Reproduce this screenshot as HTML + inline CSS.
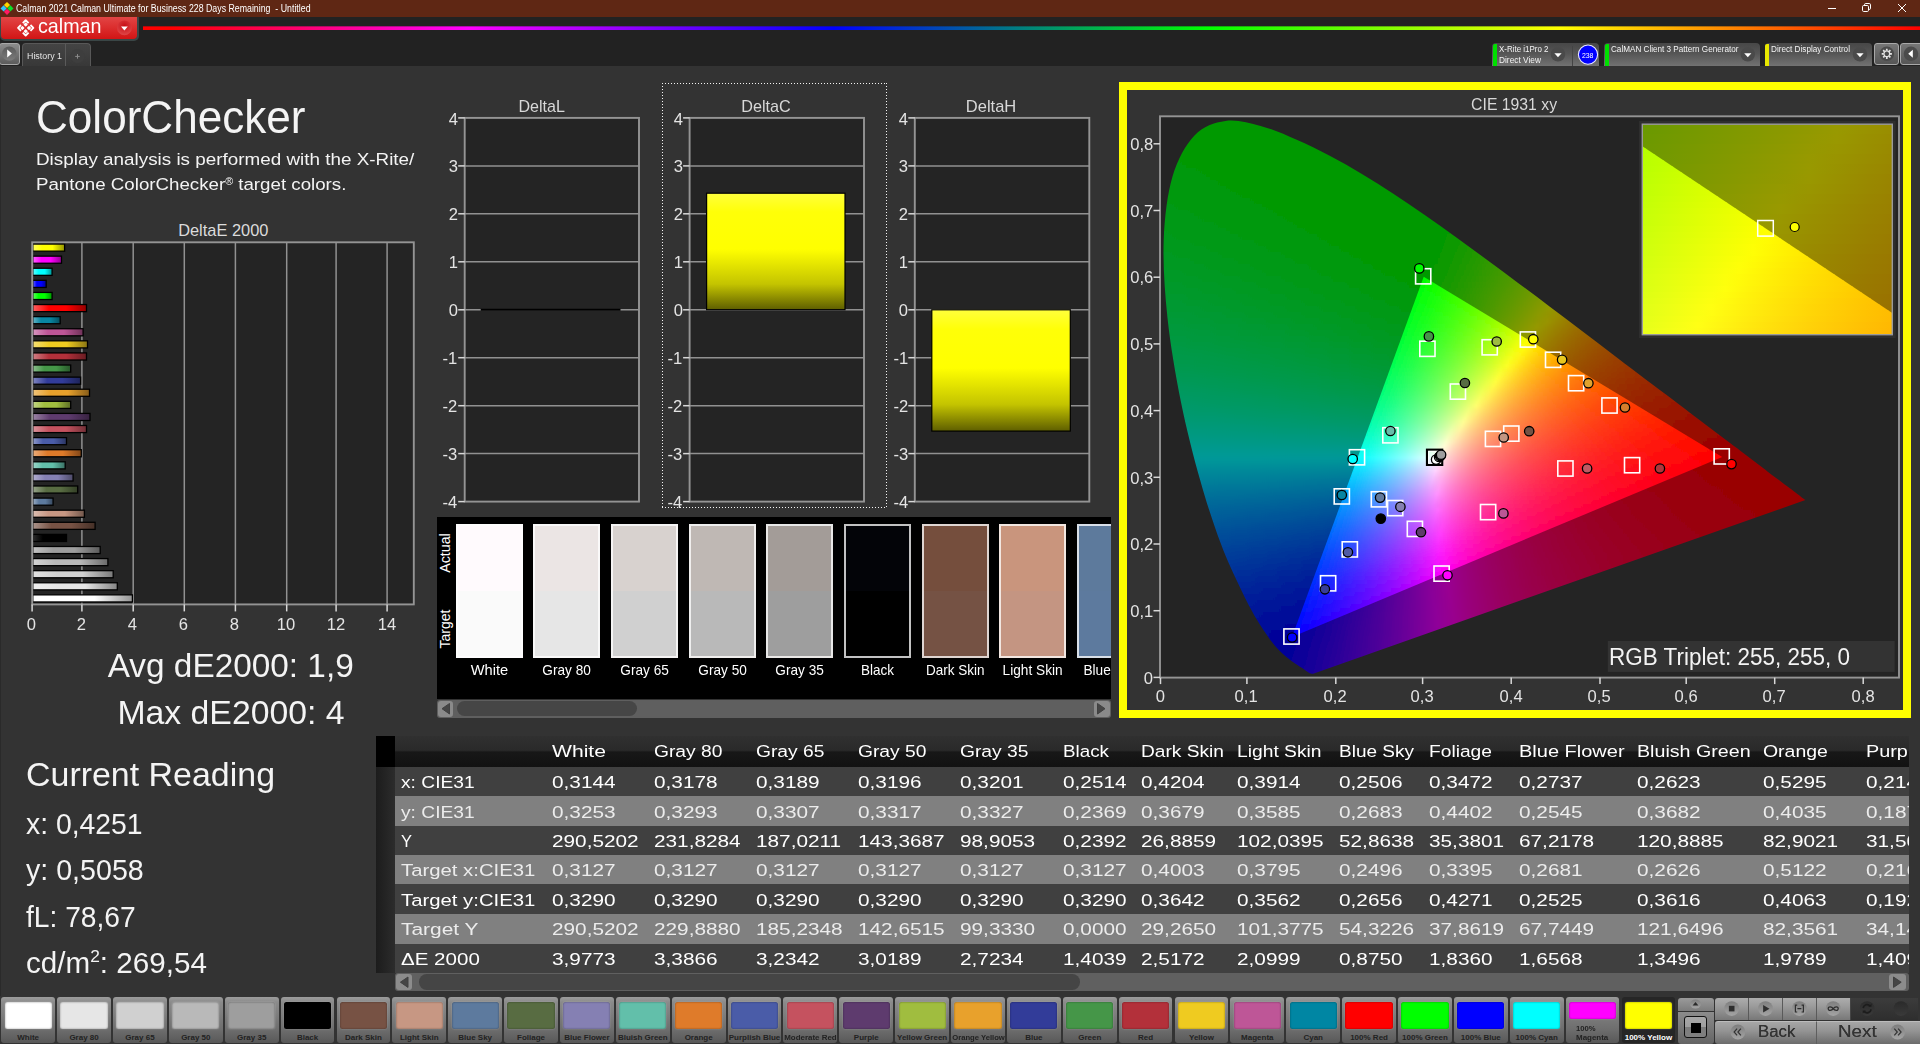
<!DOCTYPE html>
<html lang="en"><head><meta charset="utf-8"><title>Calman 2021 - ColorChecker</title>
<style>
html,body{margin:0;padding:0;background:#333;}
body{width:1920px;height:1044px;overflow:hidden;font-family:"Liberation Sans",sans-serif;}
#root{position:relative;width:1920px;height:1044px;overflow:hidden;background:#333333;}
.t{position:absolute;white-space:nowrap;line-height:1;display:block;}
svg{position:absolute;left:0;top:0;overflow:visible;}
svg text{font-family:"Liberation Sans",sans-serif;}
</style></head><body><div id="root">
<div style="position:absolute;left:0.00px;top:0.00px;width:1920.00px;height:17.00px;background:#5f2714;"></div>
<svg width="20" height="17" viewBox="0 0 20 17"><g transform="translate(7.0,8.4) rotate(45)"><rect x="-4.6" y="-4.6" width="4.4" height="4.4" fill="#ffd400"/><rect x="0.2" y="-4.6" width="4.4" height="4.4" fill="#0ce02a"/><rect x="-4.6" y="0.2" width="4.4" height="4.4" fill="#30c4ff"/><rect x="0.2" y="0.2" width="4.4" height="4.4" fill="#ff1a62"/></g></svg>
<span class="t" style="left:15.60px;top:4.00px;font-size:10px;color:#ffffff;transform:scaleX(0.8788);transform-origin:0 0;white-space:pre;">Calman 2021 Calman Ultimate for Business 228 Days Remaining  - Untitled</span>
<svg width="1920" height="17" viewBox="0 0 1920 17" fill="none" stroke="#fff" stroke-width="1"><path d="M1828 8.5H1836"/><rect x="1862.5" y="5.5" width="6" height="6" rx="1.2"/><path d="M1864.5 5.5V4.8Q1864.5 3.5 1865.8 3.5H1869.2Q1870.5 3.5 1870.5 4.8V8.2Q1870.5 9.5 1869.2 9.5H1868.5"/><path d="M1898 4L1906 12M1906 4L1898 12"/></svg>
<div style="position:absolute;left:0.00px;top:17.00px;width:1920.00px;height:49.00px;background:#222222;"></div>
<div style="position:absolute;left:143.00px;top:26.00px;width:1777.00px;height:4.00px;background:linear-gradient(90deg,#ff0000 0%,#ff0000 1.5%,#ff00ff 18.3%,#0000ff 38.9%,#00ff00 59.9%,#ffff00 79.7%,#ff0000 100%);"></div>
<div style="position:absolute;left:143.00px;top:25.50px;width:1777.00px;height:5.00px;background:linear-gradient(180deg,rgba(34,34,34,.65),rgba(34,34,34,0) 22%,rgba(34,34,34,0) 78%,rgba(34,34,34,.65));"></div>
<div style="position:absolute;left:0.00px;top:17.00px;width:138.50px;height:23.50px;background:#3a4646;border-radius:0 0 5px 5px;"></div>
<div style="position:absolute;left:1.00px;top:17.00px;width:136.00px;height:22.00px;background:linear-gradient(180deg,#e24545 0%,#dc2f2f 45%,#d11515 100%);border-radius:0 0 4px 4px;"></div>
<svg width="140" height="44" viewBox="0 0 140 44"><g transform="translate(25.7,27.9) rotate(45)" fill="none" stroke="#fff" stroke-width="1.9" stroke-linejoin="round"><path d="M-5.4 -1.3V-5.4H-1.3M1.3 -5.4H5.4V-1.3M5.4 1.3V5.4H1.3M-1.3 5.4H-5.4V1.3"/></g><g transform="translate(25.7,27.9) rotate(45)" fill="#fff"><rect x="-3.95" y="-3.95" width="3.2" height="3.2" rx=".7"/><rect x=".75" y="-3.95" width="3.2" height="3.2" rx=".7"/><rect x="-3.95" y=".75" width="3.2" height="3.2" rx=".7"/><rect x=".75" y=".75" width="3.2" height="3.2" rx=".7"/></g><defs><radialGradient id="cd" cx=".5" cy=".35" r=".7"><stop offset="0" stop-color="#c80f16"/><stop offset="1" stop-color="#e04a4a"/></radialGradient></defs><circle cx="124.4" cy="27.8" r="7.4" fill="url(#cd)"/><path d="M121 26.6H127.8L124.4 30.4Z" fill="#fff"/></svg>
<span class="t" style="left:37.80px;top:16.00px;font-size:20.2px;color:#ffffff;transform:scaleX(0.9752);transform-origin:0 0;">calman</span>
<div style="position:absolute;left:-1.00px;top:43.00px;width:21.00px;height:21.50px;background:linear-gradient(180deg,#8c8c8c,#5c5c5c);border:1px solid #a8a8a8;border-radius:3px;box-sizing:border-box;"></div>
<svg width="30" height="70" viewBox="0 0 30 70"><defs><linearGradient id="pb" x1="0" y1="0" x2="0" y2="1"><stop offset="0" stop-color="#5a5a5a"/><stop offset="1" stop-color="#7c7c7c"/></linearGradient></defs><circle cx="9.3" cy="53.6" r="7.2" fill="url(#pb)"/><path d="M7.2 49.6V57.6L11.9 53.6Z" fill="#fff"/></svg>
<div style="position:absolute;left:22.00px;top:43.00px;width:69.00px;height:23.00px;background:linear-gradient(180deg,#444 0%,#383838 100%);border:1px solid #585858;border-bottom:none;border-radius:4px 4px 0 0;box-sizing:border-box;"></div>
<div style="position:absolute;left:65.00px;top:44.00px;width:1.40px;height:22.00px;background:#5a5a5a;"></div>
<span class="t" style="left:26.50px;top:51.00px;font-size:9.7px;color:#e4e4e4;transform:scaleX(0.9146);transform-origin:0 0;">History 1</span>
<svg width="100" height="70" viewBox="0 0 100 70"><circle cx="77.6" cy="56" r="7" fill="#3e3e3e"/><path d="M75.2 56.4H79.8M77.5 54.1V58.7" stroke="#8a8a8a" stroke-width="1" fill="none"/></svg>
<div style="position:absolute;left:1492.00px;top:43.30px;width:107.30px;height:22.70px;background:linear-gradient(180deg,#474747 0%,#555 45%,#727272 100%);border-radius:4px 4px 0 0;"></div>
<div style="position:absolute;left:1492.50px;top:44.20px;width:4.20px;height:21.80px;background:#00e000;border-radius:2px 0 0 0;"></div>
<span class="t" style="left:1498.90px;top:45.00px;font-size:8.3px;color:#f4f4f4;transform:scaleX(0.9581);transform-origin:0 0;">X-Rite i1Pro 2</span>
<span class="t" style="left:1498.90px;top:56.00px;font-size:8.3px;color:#f4f4f4;transform:scaleX(1.0043);transform-origin:0 0;">Direct View</span>
<svg width="1920" height="70" viewBox="0 0 1920 70"><circle cx="1558" cy="54.4" r="7.2" fill="#4a4a4a"/><path d="M1554.4 53.2H1561.6L1558 57.2Z" fill="#fff"/></svg>
<div style="position:absolute;left:1572.00px;top:45.50px;width:1.00px;height:20.50px;background:#444;"></div>
<svg width="1920" height="70" viewBox="0 0 1920 70"><circle cx="1588" cy="54.6" r="9.6" fill="#0000ff" stroke="#e8e8ff" stroke-width="1.1"/></svg>
<span class="t" style="left:1581.33px;top:52.00px;font-size:8px;color:#ffffff;transform:scaleX(0.8617);transform-origin:50% 0;">238</span>
<div style="position:absolute;left:1604.00px;top:43.30px;width:156.00px;height:22.70px;background:linear-gradient(180deg,#474747 0%,#555 45%,#727272 100%);border-radius:4px 4px 0 0;"></div>
<div style="position:absolute;left:1604.50px;top:44.20px;width:4.20px;height:21.80px;background:#00e000;border-radius:2px 0 0 0;"></div>
<span class="t" style="left:1610.60px;top:45.00px;font-size:8.3px;color:#f4f4f4;transform:scaleX(0.9802);transform-origin:0 0;">CalMAN Client 3 Pattern Generator</span>
<svg width="1920" height="70" viewBox="0 0 1920 70"><circle cx="1747.8" cy="54.4" r="7.2" fill="#4a4a4a"/><path d="M1744.2 53.2H1751.3999999999999L1747.8 57.2Z" fill="#fff"/></svg>
<div style="position:absolute;left:1764.60px;top:43.30px;width:107.60px;height:22.70px;background:linear-gradient(180deg,#474747 0%,#555 45%,#727272 100%);border-radius:4px 4px 0 0;"></div>
<div style="position:absolute;left:1765.10px;top:44.20px;width:4.20px;height:21.80px;background:#e8e800;border-radius:2px 0 0 0;"></div>
<span class="t" style="left:1771.40px;top:45.00px;font-size:8.3px;color:#f4f4f4;transform:scaleX(0.9844);transform-origin:0 0;">Direct Display Control</span>
<svg width="1920" height="70" viewBox="0 0 1920 70"><circle cx="1860" cy="54.4" r="7.2" fill="#4a4a4a"/><path d="M1856.4 53.2H1863.6L1860 57.2Z" fill="#fff"/></svg>
<div style="position:absolute;left:1874.20px;top:43.00px;width:25.00px;height:21.50px;background:linear-gradient(180deg,#767676,#565656);border:1px solid #a8a8a8;border-radius:3px;box-sizing:border-box;"></div>
<div style="position:absolute;left:1900.20px;top:43.00px;width:25.00px;height:21.50px;background:linear-gradient(180deg,#767676,#565656);border:1px solid #a8a8a8;border-radius:3px;box-sizing:border-box;"></div>
<svg width="1920" height="70" viewBox="0 0 1920 70"><circle cx="1886.8" cy="53.8" r="7.3" fill="#4b4b4b"/><circle cx="1911" cy="53.8" r="7.3" fill="#4b4b4b"/><g transform="translate(1886.8,53.8)" fill="none" stroke="#e6e6e6"><circle r="2.9" stroke-width="1.3"/><g stroke-width="1.7"><path d="M0 -3.2V-5.1M0 3.2V5.1M-3.2 0H-5.1M3.2 0H5.1M2.26 2.26L3.6 3.6M-2.26 2.26L-3.6 3.6M2.26 -2.26L3.6 -3.6M-2.26 -2.26L-3.6 -3.6"/></g></g><path d="M1912.8 49.8V57.8L1908.2 53.8Z" fill="#fff"/></svg>
<div style="position:absolute;left:0.00px;top:66.00px;width:1.00px;height:930.00px;background:#2a2a2a;"></div>
<span class="t" style="left:36.00px;top:95.00px;font-size:45.5px;color:#f4f4f4;transform:scaleX(0.9689);transform-origin:0 0;">ColorChecker</span>
<span class="t" style="left:35.70px;top:151.00px;font-size:17.4px;color:#f4f4f4;transform:scaleX(1.0843);transform-origin:0 0;">Display analysis is performed with the X-Rite/</span>
<span class="t" style="left:35.7px;top:176.00px;font-size:17.4px;color:#f4f4f4;transform:scaleX(1.0751);transform-origin:0 0;">Pantone ColorChecker<span style="font-size:10px;position:relative;top:-5.5px;">&reg;</span> target colors.</span>
<span class="t" style="left:178.17px;top:222.00px;font-size:16.4px;color:#dcdcdc;">DeltaE 2000</span>
<svg width="450" height="640" viewBox="0 0 450 640"><rect x="32.2" y="242.3" width="381.6" height="362.1" fill="#242424"/><path d="M81.9 242.3V604.4" stroke="#919191" stroke-width="1.5"/><path d="M133.2 242.3V604.4" stroke="#919191" stroke-width="1.5"/><path d="M184.3 242.3V604.4" stroke="#919191" stroke-width="1.5"/><path d="M235.4 242.3V604.4" stroke="#919191" stroke-width="1.5"/><path d="M286.7 242.3V604.4" stroke="#919191" stroke-width="1.5"/><path d="M336.1 242.3V604.4" stroke="#919191" stroke-width="1.5"/><path d="M387.1 242.3V604.4" stroke="#919191" stroke-width="1.5"/><defs><linearGradient id="b0" x1="0" y1="0" x2="1" y2="0"><stop offset="0" stop-color="#ffff61"/><stop offset=".3" stop-color="#ffff00"/><stop offset=".62" stop-color="#ffff00"/><stop offset="1" stop-color="#949400"/></linearGradient><linearGradient id="b1" x1="0" y1="0" x2="1" y2="0"><stop offset="0" stop-color="#ff61ff"/><stop offset=".3" stop-color="#ff00ff"/><stop offset=".62" stop-color="#ff00ff"/><stop offset="1" stop-color="#940094"/></linearGradient><linearGradient id="b2" x1="0" y1="0" x2="1" y2="0"><stop offset="0" stop-color="#61ffff"/><stop offset=".3" stop-color="#00ffff"/><stop offset=".62" stop-color="#00ffff"/><stop offset="1" stop-color="#009494"/></linearGradient><linearGradient id="b3" x1="0" y1="0" x2="1" y2="0"><stop offset="0" stop-color="#6161ff"/><stop offset=".3" stop-color="#0000ff"/><stop offset=".62" stop-color="#0000ff"/><stop offset="1" stop-color="#000094"/></linearGradient><linearGradient id="b4" x1="0" y1="0" x2="1" y2="0"><stop offset="0" stop-color="#61ff61"/><stop offset=".3" stop-color="#00ff00"/><stop offset=".62" stop-color="#00ff00"/><stop offset="1" stop-color="#009400"/></linearGradient><linearGradient id="b5" x1="0" y1="0" x2="1" y2="0"><stop offset="0" stop-color="#ff6161"/><stop offset=".3" stop-color="#ff0000"/><stop offset=".62" stop-color="#ff0000"/><stop offset="1" stop-color="#940000"/></linearGradient><linearGradient id="b6" x1="0" y1="0" x2="1" y2="0"><stop offset="0" stop-color="#66b4c5"/><stop offset=".3" stop-color="#0886a2"/><stop offset=".62" stop-color="#0886a2"/><stop offset="1" stop-color="#054e5e"/></linearGradient><linearGradient id="b7" x1="0" y1="0" x2="1" y2="0"><stop offset="0" stop-color="#d796bf"/><stop offset=".3" stop-color="#be5697"/><stop offset=".62" stop-color="#be5697"/><stop offset="1" stop-color="#6e3258"/></linearGradient><linearGradient id="b8" x1="0" y1="0" x2="1" y2="0"><stop offset="0" stop-color="#f5df75"/><stop offset=".3" stop-color="#efcb20"/><stop offset=".62" stop-color="#efcb20"/><stop offset="1" stop-color="#8b7613"/></linearGradient><linearGradient id="b9" x1="0" y1="0" x2="1" y2="0"><stop offset="0" stop-color="#d07f85"/><stop offset=".3" stop-color="#b3303a"/><stop offset=".62" stop-color="#b3303a"/><stop offset="1" stop-color="#681c22"/></linearGradient><linearGradient id="b10" x1="0" y1="0" x2="1" y2="0"><stop offset="0" stop-color="#8cbe8e"/><stop offset=".3" stop-color="#459648"/><stop offset=".62" stop-color="#459648"/><stop offset="1" stop-color="#28572a"/></linearGradient><linearGradient id="b11" x1="0" y1="0" x2="1" y2="0"><stop offset="0" stop-color="#8086c0"/><stop offset=".3" stop-color="#323c99"/><stop offset=".62" stop-color="#323c99"/><stop offset="1" stop-color="#1d2359"/></linearGradient><linearGradient id="b12" x1="0" y1="0" x2="1" y2="0"><stop offset="0" stop-color="#f1c57c"/><stop offset=".3" stop-color="#e8a12c"/><stop offset=".62" stop-color="#e8a12c"/><stop offset="1" stop-color="#875d1a"/></linearGradient><linearGradient id="b13" x1="0" y1="0" x2="1" y2="0"><stop offset="0" stop-color="#c4d688"/><stop offset=".3" stop-color="#a0bd3f"/><stop offset=".62" stop-color="#a0bd3f"/><stop offset="1" stop-color="#5d6e25"/></linearGradient><linearGradient id="b14" x1="0" y1="0" x2="1" y2="0"><stop offset="0" stop-color="#9b85a5"/><stop offset=".3" stop-color="#5e3b6e"/><stop offset=".62" stop-color="#5e3b6e"/><stop offset="1" stop-color="#372240"/></linearGradient><linearGradient id="b15" x1="0" y1="0" x2="1" y2="0"><stop offset="0" stop-color="#db949c"/><stop offset=".3" stop-color="#c5525f"/><stop offset=".62" stop-color="#c5525f"/><stop offset="1" stop-color="#723037"/></linearGradient><linearGradient id="b16" x1="0" y1="0" x2="1" y2="0"><stop offset="0" stop-color="#8f9ac9"/><stop offset=".3" stop-color="#4a5ca8"/><stop offset=".62" stop-color="#4a5ca8"/><stop offset="1" stop-color="#2b3561"/></linearGradient><linearGradient id="b17" x1="0" y1="0" x2="1" y2="0"><stop offset="0" stop-color="#ebad7b"/><stop offset=".3" stop-color="#df7b2a"/><stop offset=".62" stop-color="#df7b2a"/><stop offset="1" stop-color="#814718"/></linearGradient><linearGradient id="b18" x1="0" y1="0" x2="1" y2="0"><stop offset="0" stop-color="#9ed7ca"/><stop offset=".3" stop-color="#62bfaa"/><stop offset=".62" stop-color="#62bfaa"/><stop offset="1" stop-color="#396f63"/></linearGradient><linearGradient id="b19" x1="0" y1="0" x2="1" y2="0"><stop offset="0" stop-color="#b3b0d0"/><stop offset=".3" stop-color="#8580b3"/><stop offset=".62" stop-color="#8580b3"/><stop offset="1" stop-color="#4d4a68"/></linearGradient><linearGradient id="b20" x1="0" y1="0" x2="1" y2="0"><stop offset="0" stop-color="#97a48a"/><stop offset=".3" stop-color="#586c42"/><stop offset=".62" stop-color="#586c42"/><stop offset="1" stop-color="#333f26"/></linearGradient><linearGradient id="b21" x1="0" y1="0" x2="1" y2="0"><stop offset="0" stop-color="#9badc3"/><stop offset=".3" stop-color="#5d7a9e"/><stop offset=".62" stop-color="#5d7a9e"/><stop offset="1" stop-color="#36475c"/></linearGradient><linearGradient id="b22" x1="0" y1="0" x2="1" y2="0"><stop offset="0" stop-color="#dcbfb2"/><stop offset=".3" stop-color="#c79783"/><stop offset=".62" stop-color="#c79783"/><stop offset="1" stop-color="#73584c"/></linearGradient><linearGradient id="b23" x1="0" y1="0" x2="1" y2="0"><stop offset="0" stop-color="#ab948b"/><stop offset=".3" stop-color="#775244"/><stop offset=".62" stop-color="#775244"/><stop offset="1" stop-color="#453027"/></linearGradient><linearGradient id="b24" x1="0" y1="0" x2="1" y2="0"><stop offset="0" stop-color="#2d2d2d"/><stop offset=".3" stop-color="#000000"/><stop offset=".62" stop-color="#000000"/><stop offset="1" stop-color="#000000"/></linearGradient><linearGradient id="b25" x1="0" y1="0" x2="1" y2="0"><stop offset="0" stop-color="#c3c3c3"/><stop offset=".3" stop-color="#9e9e9e"/><stop offset=".62" stop-color="#9e9e9e"/><stop offset="1" stop-color="#5c5c5c"/></linearGradient><linearGradient id="b26" x1="0" y1="0" x2="1" y2="0"><stop offset="0" stop-color="#d4d4d4"/><stop offset=".3" stop-color="#b9b9b9"/><stop offset=".62" stop-color="#b9b9b9"/><stop offset="1" stop-color="#6b6b6b"/></linearGradient><linearGradient id="b27" x1="0" y1="0" x2="1" y2="0"><stop offset="0" stop-color="#e2e2e2"/><stop offset=".3" stop-color="#d0d0d0"/><stop offset=".62" stop-color="#d0d0d0"/><stop offset="1" stop-color="#797979"/></linearGradient><linearGradient id="b28" x1="0" y1="0" x2="1" y2="0"><stop offset="0" stop-color="#f0f0f0"/><stop offset=".3" stop-color="#e6e6e6"/><stop offset=".62" stop-color="#e6e6e6"/><stop offset="1" stop-color="#858585"/></linearGradient><linearGradient id="b29" x1="0" y1="0" x2="1" y2="0"><stop offset="0" stop-color="#ffffff"/><stop offset=".3" stop-color="#ffffff"/><stop offset=".62" stop-color="#ffffff"/><stop offset="1" stop-color="#949494"/></linearGradient></defs><rect x="32.8" y="244.05" width="31.8" height="7.1" fill="url(#b0)" stroke="#000" stroke-width="1.3"/><rect x="32.8" y="256.15" width="28.7" height="7.1" fill="url(#b1)" stroke="#000" stroke-width="1.3"/><rect x="32.8" y="268.24" width="19.3" height="7.1" fill="url(#b2)" stroke="#000" stroke-width="1.3"/><rect x="32.8" y="280.34" width="13.4" height="7.1" fill="url(#b3)" stroke="#000" stroke-width="1.3"/><rect x="32.8" y="292.44" width="19.3" height="7.1" fill="url(#b4)" stroke="#000" stroke-width="1.3"/><rect x="32.8" y="304.54" width="53.7" height="7.1" fill="url(#b5)" stroke="#000" stroke-width="1.3"/><rect x="32.8" y="316.63" width="27.4" height="7.1" fill="url(#b6)" stroke="#000" stroke-width="1.3"/><rect x="32.8" y="328.73" width="50.3" height="7.1" fill="url(#b7)" stroke="#000" stroke-width="1.3"/><rect x="32.8" y="340.83" width="54.7" height="7.1" fill="url(#b8)" stroke="#000" stroke-width="1.3"/><rect x="32.8" y="352.92" width="53.7" height="7.1" fill="url(#b9)" stroke="#000" stroke-width="1.3"/><rect x="32.8" y="365.02" width="37.9" height="7.1" fill="url(#b10)" stroke="#000" stroke-width="1.3"/><rect x="32.8" y="377.12" width="47.8" height="7.1" fill="url(#b11)" stroke="#000" stroke-width="1.3"/><rect x="32.8" y="389.21" width="56.7" height="7.1" fill="url(#b12)" stroke="#000" stroke-width="1.3"/><rect x="32.8" y="401.31" width="37.9" height="7.1" fill="url(#b13)" stroke="#000" stroke-width="1.3"/><rect x="32.8" y="413.41" width="57.2" height="7.1" fill="url(#b14)" stroke="#000" stroke-width="1.3"/><rect x="32.8" y="425.50" width="53.7" height="7.1" fill="url(#b15)" stroke="#000" stroke-width="1.3"/><rect x="32.8" y="437.60" width="33.7" height="7.1" fill="url(#b16)" stroke="#000" stroke-width="1.3"/><rect x="32.8" y="449.70" width="48.5" height="7.1" fill="url(#b17)" stroke="#000" stroke-width="1.3"/><rect x="32.8" y="461.80" width="32.4" height="7.1" fill="url(#b18)" stroke="#000" stroke-width="1.3"/><rect x="32.8" y="473.89" width="40.3" height="7.1" fill="url(#b19)" stroke="#000" stroke-width="1.3"/><rect x="32.8" y="485.99" width="44.9" height="7.1" fill="url(#b20)" stroke="#000" stroke-width="1.3"/><rect x="32.8" y="498.09" width="20.3" height="7.1" fill="url(#b21)" stroke="#000" stroke-width="1.3"/><rect x="32.8" y="510.18" width="51.6" height="7.1" fill="url(#b22)" stroke="#000" stroke-width="1.3"/><rect x="32.8" y="522.28" width="62.3" height="7.1" fill="url(#b23)" stroke="#000" stroke-width="1.3"/><rect x="32.8" y="534.38" width="33.7" height="7.1" fill="url(#b24)" stroke="#000" stroke-width="1.3"/><rect x="32.8" y="546.48" width="67.4" height="7.1" fill="url(#b25)" stroke="#000" stroke-width="1.3"/><rect x="32.8" y="558.57" width="75.1" height="7.1" fill="url(#b26)" stroke="#000" stroke-width="1.3"/><rect x="32.8" y="570.67" width="80.4" height="7.1" fill="url(#b27)" stroke="#000" stroke-width="1.3"/><rect x="32.8" y="582.77" width="84.5" height="7.1" fill="url(#b28)" stroke="#000" stroke-width="1.3"/><rect x="32.8" y="594.86" width="99.6" height="7.1" fill="url(#b29)" stroke="#000" stroke-width="1.3"/><rect x="32.2" y="242.3" width="381.6" height="362.1" fill="none" stroke="#949494" stroke-width="1.9"/><path d="M32.1 604.4V611.4" stroke="#d8d8d8" stroke-width="1.5"/><path d="M81.9 604.4V611.4" stroke="#d8d8d8" stroke-width="1.5"/><path d="M133.2 604.4V611.4" stroke="#d8d8d8" stroke-width="1.5"/><path d="M184.3 604.4V611.4" stroke="#d8d8d8" stroke-width="1.5"/><path d="M235.4 604.4V611.4" stroke="#d8d8d8" stroke-width="1.5"/><path d="M286.7 604.4V611.4" stroke="#d8d8d8" stroke-width="1.5"/><path d="M336.1 604.4V611.4" stroke="#d8d8d8" stroke-width="1.5"/><path d="M387.1 604.4V611.4" stroke="#d8d8d8" stroke-width="1.5"/></svg>
<span class="t" style="left:27.15px;top:617.00px;font-size:16.0px;color:#e4e4e4;transform:scaleX(1.0350);transform-origin:50% 0;">0</span>
<span class="t" style="left:76.95px;top:617.00px;font-size:16.0px;color:#e4e4e4;transform:scaleX(1.0350);transform-origin:50% 0;">2</span>
<span class="t" style="left:128.25px;top:617.00px;font-size:16.0px;color:#e4e4e4;transform:scaleX(1.0350);transform-origin:50% 0;">4</span>
<span class="t" style="left:179.35px;top:617.00px;font-size:16.0px;color:#e4e4e4;transform:scaleX(1.0350);transform-origin:50% 0;">6</span>
<span class="t" style="left:230.45px;top:617.00px;font-size:16.0px;color:#e4e4e4;transform:scaleX(1.0350);transform-origin:50% 0;">8</span>
<span class="t" style="left:277.30px;top:617.00px;font-size:16.0px;color:#e4e4e4;transform:scaleX(1.0350);transform-origin:50% 0;">10</span>
<span class="t" style="left:326.70px;top:617.00px;font-size:16.0px;color:#e4e4e4;transform:scaleX(1.0350);transform-origin:50% 0;">12</span>
<span class="t" style="left:377.70px;top:617.00px;font-size:16.0px;color:#e4e4e4;transform:scaleX(1.0350);transform-origin:50% 0;">14</span>
<span class="t" style="left:108.50px;top:649.00px;font-size:33px;color:#f4f4f4;transform:scaleX(1.0107);transform-origin:50% 0;">Avg dE2000: 1,9</span>
<span class="t" style="left:120.32px;top:696.00px;font-size:33px;color:#f4f4f4;transform:scaleX(1.0236);transform-origin:50% 0;">Max dE2000: 4</span>
<span class="t" style="left:25.60px;top:758.00px;font-size:33px;color:#f4f4f4;transform:scaleX(1.0284);transform-origin:0 0;">Current Reading</span>
<span class="t" style="left:25.60px;top:810.00px;font-size:29px;color:#f4f4f4;transform:scaleX(0.9773);transform-origin:0 0;">x: 0,4251</span>
<span class="t" style="left:25.60px;top:856.00px;font-size:29px;color:#f4f4f4;transform:scaleX(0.9866);transform-origin:0 0;">y: 0,5058</span>
<span class="t" style="left:25.60px;top:903.00px;font-size:29px;color:#f4f4f4;transform:scaleX(0.9720);transform-origin:0 0;">fL: 78,67</span>
<span class="t" style="left:25.6px;top:949.00px;font-size:29px;color:#f4f4f4;transform:scaleX(1.0215);transform-origin:0 0;">cd/m<span style="font-size:17px;position:relative;top:-11px;">2</span>: 269,54</span>
<svg width="1120" height="520" viewBox="0 0 1120 520"><defs><linearGradient id="yb" x1="0" y1="0" x2="0" y2="1"><stop offset="0" stop-color="#ffff3c"/><stop offset=".16" stop-color="#ffff08"/><stop offset=".48" stop-color="#ffff00"/><stop offset=".78" stop-color="#c4c400"/><stop offset="1" stop-color="#5e5e00"/></linearGradient></defs><rect x="464.7" y="117.9" width="174.3" height="383.7" fill="#242424"/><path d="M464.7 453.6H639.0" stroke="#919191" stroke-width="1.5"/><path d="M464.7 405.7H639.0" stroke="#919191" stroke-width="1.5"/><path d="M464.7 357.7H639.0" stroke="#919191" stroke-width="1.5"/><path d="M464.7 309.8H639.0" stroke="#919191" stroke-width="1.5"/><path d="M464.7 261.8H639.0" stroke="#919191" stroke-width="1.5"/><path d="M464.7 213.8H639.0" stroke="#919191" stroke-width="1.5"/><path d="M464.7 165.9H639.0" stroke="#919191" stroke-width="1.5"/><rect x="464.7" y="117.9" width="174.3" height="383.7" fill="none" stroke="#949494" stroke-width="1.9"/><path d="M458.2 501.6H464.7" stroke="#d8d8d8" stroke-width="1.5"/><path d="M458.2 453.6H464.7" stroke="#d8d8d8" stroke-width="1.5"/><path d="M458.2 405.7H464.7" stroke="#d8d8d8" stroke-width="1.5"/><path d="M458.2 357.7H464.7" stroke="#d8d8d8" stroke-width="1.5"/><path d="M458.2 309.8H464.7" stroke="#d8d8d8" stroke-width="1.5"/><path d="M458.2 261.8H464.7" stroke="#d8d8d8" stroke-width="1.5"/><path d="M458.2 213.8H464.7" stroke="#d8d8d8" stroke-width="1.5"/><path d="M458.2 165.9H464.7" stroke="#d8d8d8" stroke-width="1.5"/><path d="M458.2 117.9H464.7" stroke="#d8d8d8" stroke-width="1.5"/><path d="M480.7 309.8H620.5" stroke="#000" stroke-width="2"/><rect x="689.6" y="117.9" width="174.4" height="383.7" fill="#242424"/><path d="M689.6 453.6H864.0" stroke="#919191" stroke-width="1.5"/><path d="M689.6 405.7H864.0" stroke="#919191" stroke-width="1.5"/><path d="M689.6 357.7H864.0" stroke="#919191" stroke-width="1.5"/><path d="M689.6 309.8H864.0" stroke="#919191" stroke-width="1.5"/><path d="M689.6 261.8H864.0" stroke="#919191" stroke-width="1.5"/><path d="M689.6 213.8H864.0" stroke="#919191" stroke-width="1.5"/><path d="M689.6 165.9H864.0" stroke="#919191" stroke-width="1.5"/><rect x="689.6" y="117.9" width="174.4" height="383.7" fill="none" stroke="#949494" stroke-width="1.9"/><path d="M683.1 501.6H689.6" stroke="#d8d8d8" stroke-width="1.5"/><path d="M683.1 453.6H689.6" stroke="#d8d8d8" stroke-width="1.5"/><path d="M683.1 405.7H689.6" stroke="#d8d8d8" stroke-width="1.5"/><path d="M683.1 357.7H689.6" stroke="#d8d8d8" stroke-width="1.5"/><path d="M683.1 309.8H689.6" stroke="#d8d8d8" stroke-width="1.5"/><path d="M683.1 261.8H689.6" stroke="#d8d8d8" stroke-width="1.5"/><path d="M683.1 213.8H689.6" stroke="#d8d8d8" stroke-width="1.5"/><path d="M683.1 165.9H689.6" stroke="#d8d8d8" stroke-width="1.5"/><path d="M683.1 117.9H689.6" stroke="#d8d8d8" stroke-width="1.5"/><rect x="706.6" y="193.2" width="138.4" height="116.5" fill="url(#yb)" stroke="#000" stroke-width="1.2"/><rect x="914.8" y="117.9" width="174.5" height="383.7" fill="#242424"/><path d="M914.8 453.6H1089.3" stroke="#919191" stroke-width="1.5"/><path d="M914.8 405.7H1089.3" stroke="#919191" stroke-width="1.5"/><path d="M914.8 357.7H1089.3" stroke="#919191" stroke-width="1.5"/><path d="M914.8 309.8H1089.3" stroke="#919191" stroke-width="1.5"/><path d="M914.8 261.8H1089.3" stroke="#919191" stroke-width="1.5"/><path d="M914.8 213.8H1089.3" stroke="#919191" stroke-width="1.5"/><path d="M914.8 165.9H1089.3" stroke="#919191" stroke-width="1.5"/><rect x="914.8" y="117.9" width="174.5" height="383.7" fill="none" stroke="#949494" stroke-width="1.9"/><path d="M908.3 501.6H914.8" stroke="#d8d8d8" stroke-width="1.5"/><path d="M908.3 453.6H914.8" stroke="#d8d8d8" stroke-width="1.5"/><path d="M908.3 405.7H914.8" stroke="#d8d8d8" stroke-width="1.5"/><path d="M908.3 357.7H914.8" stroke="#d8d8d8" stroke-width="1.5"/><path d="M908.3 309.8H914.8" stroke="#d8d8d8" stroke-width="1.5"/><path d="M908.3 261.8H914.8" stroke="#d8d8d8" stroke-width="1.5"/><path d="M908.3 213.8H914.8" stroke="#d8d8d8" stroke-width="1.5"/><path d="M908.3 165.9H914.8" stroke="#d8d8d8" stroke-width="1.5"/><path d="M908.3 117.9H914.8" stroke="#d8d8d8" stroke-width="1.5"/><rect x="931.8" y="309.8" width="138.5" height="121.3" fill="url(#yb)" stroke="#000" stroke-width="1.2"/></svg>
<span class="t" style="left:517.60px;top:98.00px;font-size:16.4px;color:#d8d8d8;transform:scaleX(0.9809);transform-origin:50% 0;">DeltaL</span>
<span class="t" style="left:443.47px;top:495.00px;font-size:16.0px;color:#e4e4e4;transform:scaleX(1.0350);transform-origin:100% 0;">-4</span>
<span class="t" style="left:443.47px;top:447.00px;font-size:16.0px;color:#e4e4e4;transform:scaleX(1.0350);transform-origin:100% 0;">-3</span>
<span class="t" style="left:443.47px;top:399.00px;font-size:16.0px;color:#e4e4e4;transform:scaleX(1.0350);transform-origin:100% 0;">-2</span>
<span class="t" style="left:443.47px;top:351.00px;font-size:16.0px;color:#e4e4e4;transform:scaleX(1.0350);transform-origin:100% 0;">-1</span>
<span class="t" style="left:448.80px;top:303.00px;font-size:16.0px;color:#e4e4e4;transform:scaleX(1.0350);transform-origin:100% 0;">0</span>
<span class="t" style="left:448.80px;top:255.00px;font-size:16.0px;color:#e4e4e4;transform:scaleX(1.0350);transform-origin:100% 0;">1</span>
<span class="t" style="left:448.80px;top:207.00px;font-size:16.0px;color:#e4e4e4;transform:scaleX(1.0350);transform-origin:100% 0;">2</span>
<span class="t" style="left:448.80px;top:159.00px;font-size:16.0px;color:#e4e4e4;transform:scaleX(1.0350);transform-origin:100% 0;">3</span>
<span class="t" style="left:448.80px;top:112.00px;font-size:16.0px;color:#e4e4e4;transform:scaleX(1.0350);transform-origin:100% 0;">4</span>
<span class="t" style="left:741.44px;top:98.00px;font-size:16.4px;color:#d8d8d8;transform:scaleX(0.9895);transform-origin:50% 0;">DeltaC</span>
<span class="t" style="left:668.38px;top:495.00px;font-size:16.0px;color:#e4e4e4;transform:scaleX(1.0350);transform-origin:100% 0;">-4</span>
<span class="t" style="left:668.38px;top:447.00px;font-size:16.0px;color:#e4e4e4;transform:scaleX(1.0350);transform-origin:100% 0;">-3</span>
<span class="t" style="left:668.38px;top:399.00px;font-size:16.0px;color:#e4e4e4;transform:scaleX(1.0350);transform-origin:100% 0;">-2</span>
<span class="t" style="left:668.38px;top:351.00px;font-size:16.0px;color:#e4e4e4;transform:scaleX(1.0350);transform-origin:100% 0;">-1</span>
<span class="t" style="left:673.70px;top:303.00px;font-size:16.0px;color:#e4e4e4;transform:scaleX(1.0350);transform-origin:100% 0;">0</span>
<span class="t" style="left:673.70px;top:255.00px;font-size:16.0px;color:#e4e4e4;transform:scaleX(1.0350);transform-origin:100% 0;">1</span>
<span class="t" style="left:673.70px;top:207.00px;font-size:16.0px;color:#e4e4e4;transform:scaleX(1.0350);transform-origin:100% 0;">2</span>
<span class="t" style="left:673.70px;top:159.00px;font-size:16.0px;color:#e4e4e4;transform:scaleX(1.0350);transform-origin:100% 0;">3</span>
<span class="t" style="left:673.70px;top:112.00px;font-size:16.0px;color:#e4e4e4;transform:scaleX(1.0350);transform-origin:100% 0;">4</span>
<span class="t" style="left:965.94px;top:98.00px;font-size:16.4px;color:#d8d8d8;transform:scaleX(1.0074);transform-origin:50% 0;">DeltaH</span>
<span class="t" style="left:893.57px;top:495.00px;font-size:16.0px;color:#e4e4e4;transform:scaleX(1.0350);transform-origin:100% 0;">-4</span>
<span class="t" style="left:893.57px;top:447.00px;font-size:16.0px;color:#e4e4e4;transform:scaleX(1.0350);transform-origin:100% 0;">-3</span>
<span class="t" style="left:893.57px;top:399.00px;font-size:16.0px;color:#e4e4e4;transform:scaleX(1.0350);transform-origin:100% 0;">-2</span>
<span class="t" style="left:893.57px;top:351.00px;font-size:16.0px;color:#e4e4e4;transform:scaleX(1.0350);transform-origin:100% 0;">-1</span>
<span class="t" style="left:898.90px;top:303.00px;font-size:16.0px;color:#e4e4e4;transform:scaleX(1.0350);transform-origin:100% 0;">0</span>
<span class="t" style="left:898.90px;top:255.00px;font-size:16.0px;color:#e4e4e4;transform:scaleX(1.0350);transform-origin:100% 0;">1</span>
<span class="t" style="left:898.90px;top:207.00px;font-size:16.0px;color:#e4e4e4;transform:scaleX(1.0350);transform-origin:100% 0;">2</span>
<span class="t" style="left:898.90px;top:159.00px;font-size:16.0px;color:#e4e4e4;transform:scaleX(1.0350);transform-origin:100% 0;">3</span>
<span class="t" style="left:898.90px;top:112.00px;font-size:16.0px;color:#e4e4e4;transform:scaleX(1.0350);transform-origin:100% 0;">4</span>
<div style="position:absolute;left:662.00px;top:83.00px;width:225.00px;height:1.00px;background:repeating-linear-gradient(90deg,#f4f4f4 0,#f4f4f4 1px,transparent 1px,transparent 3px);"></div>
<div style="position:absolute;left:662.00px;top:507.00px;width:225.00px;height:1.00px;background:repeating-linear-gradient(90deg,#f4f4f4 0,#f4f4f4 1px,transparent 1px,transparent 3px);"></div>
<div style="position:absolute;left:662.00px;top:83.00px;width:1.00px;height:425.00px;background:repeating-linear-gradient(180deg,#f4f4f4 0,#f4f4f4 1px,transparent 1px,transparent 3px);"></div>
<div style="position:absolute;left:886.00px;top:83.00px;width:1.00px;height:425.00px;background:repeating-linear-gradient(180deg,#f4f4f4 0,#f4f4f4 1px,transparent 1px,transparent 3px);"></div>
<div style="position:absolute;left:436.50px;top:516.60px;width:674.50px;height:182.60px;background:#000;overflow:hidden;"></div>
<div style="position:absolute;left:456.00px;top:523.50px;width:67.00px;height:134.60px;background:linear-gradient(180deg,#fffafd 0,#fffafd 49.7%,#fafafa 49.7%,#fafafa 100%);border:2px solid rgba(255,255,255,.76);box-sizing:border-box;"></div>
<div style="position:absolute;left:533.00px;top:523.50px;width:67.00px;height:134.60px;background:linear-gradient(180deg,#ebe5e4 0,#ebe5e4 49.7%,#e6e6e6 49.7%,#e6e6e6 100%);border:2px solid rgba(255,255,255,.76);box-sizing:border-box;"></div>
<div style="position:absolute;left:611.00px;top:523.50px;width:67.00px;height:134.60px;background:linear-gradient(180deg,#d8d2cf 0,#d8d2cf 49.7%,#d0d0d0 49.7%,#d0d0d0 100%);border:2px solid rgba(255,255,255,.76);box-sizing:border-box;"></div>
<div style="position:absolute;left:689.00px;top:523.50px;width:67.00px;height:134.60px;background:linear-gradient(180deg,#bfb8b4 0,#bfb8b4 49.7%,#b9b9b9 49.7%,#b9b9b9 100%);border:2px solid rgba(255,255,255,.76);box-sizing:border-box;"></div>
<div style="position:absolute;left:766.00px;top:523.50px;width:67.00px;height:134.60px;background:linear-gradient(180deg,#a39c98 0,#a39c98 49.7%,#9e9e9e 49.7%,#9e9e9e 100%);border:2px solid rgba(255,255,255,.76);box-sizing:border-box;"></div>
<div style="position:absolute;left:844.00px;top:523.50px;width:67.00px;height:134.60px;background:linear-gradient(180deg,#030408 0,#030408 49.7%,#000000 49.7%,#000000 100%);border:2px solid rgba(255,255,255,.76);box-sizing:border-box;"></div>
<div style="position:absolute;left:922.00px;top:523.50px;width:67.00px;height:134.60px;background:linear-gradient(180deg,#754e3d 0,#754e3d 49.7%,#755244 49.7%,#755244 100%);border:2px solid rgba(255,255,255,.76);box-sizing:border-box;"></div>
<div style="position:absolute;left:999.00px;top:523.50px;width:67.00px;height:134.60px;background:linear-gradient(180deg,#c9957d 0,#c9957d 49.7%,#c49582 49.7%,#c49582 100%);border:2px solid rgba(255,255,255,.76);box-sizing:border-box;"></div>
<div style="position:absolute;left:1077.00px;top:523.50px;width:34.00px;height:134.60px;background:linear-gradient(180deg,#5d7a9c 0,#5d7a9c 49.7%,#5d7a9e 49.7%,#5d7a9e 100%);border:2px solid rgba(255,255,255,.76);border-right:none;box-sizing:border-box;"></div>
<div style="position:absolute;left:436.5px;top:516px;width:674.5px;height:183.2px;overflow:hidden;">
<span class="t" style="left:34.50px;top:147.00px;font-size:14.4px;color:#ffffff;transform:scaleX(1.0188);transform-origin:50% 0;">White</span>
<span class="t" style="left:104.94px;top:147.00px;font-size:14.4px;color:#ffffff;transform:scaleX(0.9469);transform-origin:50% 0;">Gray 80</span>
<span class="t" style="left:182.59px;top:147.00px;font-size:14.4px;color:#ffffff;transform:scaleX(0.9469);transform-origin:50% 0;">Gray 65</span>
<span class="t" style="left:260.24px;top:147.00px;font-size:14.4px;color:#ffffff;transform:scaleX(0.9469);transform-origin:50% 0;">Gray 50</span>
<span class="t" style="left:337.89px;top:147.00px;font-size:14.4px;color:#ffffff;transform:scaleX(0.9469);transform-origin:50% 0;">Gray 35</span>
<span class="t" style="left:423.54px;top:147.00px;font-size:14.4px;color:#ffffff;transform:scaleX(0.9372);transform-origin:50% 0;">Black</span>
<span class="t" style="left:487.59px;top:147.00px;font-size:14.4px;color:#ffffff;transform:scaleX(0.9373);transform-origin:50% 0;">Dark Skin</span>
<span class="t" style="left:564.83px;top:147.00px;font-size:14.4px;color:#ffffff;transform:scaleX(0.9488);transform-origin:50% 0;">Light Skin</span>
<span class="t" style="left:645.69px;top:147.00px;font-size:14.4px;color:#ffffff;transform:scaleX(0.9503);transform-origin:50% 0;">Blue Sky</span>
</div>
<span class="t" style="left:446.4px;top:553.1px;font-size:13.8px;color:#fff;transform:translate(-50%,-50%) rotate(-90deg) scaleX(1.0273);">Actual</span>
<span class="t" style="left:446.4px;top:628.8px;font-size:13.8px;color:#fff;transform:translate(-50%,-50%) rotate(-90deg) scaleX(1.0169);">Target</span>
<div style="position:absolute;left:436.50px;top:699.90px;width:674.50px;height:18.10px;background:#5f5f5f;border-radius:3px;"></div>
<div style="position:absolute;left:457.00px;top:701.20px;width:179.50px;height:15.00px;background:#464646;border-radius:7.5px;"></div>
<div style="position:absolute;left:437.50px;top:701.00px;width:15.50px;height:15.50px;background:#8a8a8a;border-radius:3px;"></div>
<div style="position:absolute;left:1094.00px;top:701.00px;width:15.50px;height:15.50px;background:#8a8a8a;border-radius:3px;"></div>
<svg width="1120" height="720" viewBox="0 0 1120 720"><path d="M449.5 703.5V714L442 708.7Z" fill="#454545" stroke="#404040" stroke-width="1"/><path d="M1097.5 703.5V714L1105 708.7Z" fill="#454545" stroke="#404040" stroke-width="1"/></svg>
<div style="position:absolute;left:1119.00px;top:82.00px;width:792.00px;height:636.00px;border:8px solid #ffff00;box-sizing:border-box;background:#333;"></div>
<svg width="1920" height="730" viewBox="0 0 1920 730"><defs><linearGradient id="g0" gradientUnits="userSpaceOnUse" x1="1206.8" x2="1260.1" y1="0" y2="0"><stop offset="0" stop-color="#009900"/><stop offset=".667" stop-color="#009900"/><stop offset="1" stop-color="#009900"/></linearGradient><linearGradient id="g1" gradientUnits="userSpaceOnUse" x1="1196.4" x2="1278.8" y1="0" y2="0"><stop offset="0" stop-color="#009900"/><stop offset=".400" stop-color="#009900"/><stop offset=".800" stop-color="#009900"/><stop offset="1" stop-color="#009900"/></linearGradient><linearGradient id="g2" gradientUnits="userSpaceOnUse" x1="1190.1" x2="1293.4" y1="0" y2="0"><stop offset="0" stop-color="#009900"/><stop offset=".333" stop-color="#009900"/><stop offset=".667" stop-color="#009900"/><stop offset="1" stop-color="#009900"/></linearGradient><linearGradient id="g3" gradientUnits="userSpaceOnUse" x1="1185.3" x2="1307.0" y1="0" y2="0"><stop offset="0" stop-color="#009900"/><stop offset=".286" stop-color="#009900"/><stop offset=".571" stop-color="#009900"/><stop offset=".857" stop-color="#009900"/><stop offset="1" stop-color="#009900"/></linearGradient><linearGradient id="g4" gradientUnits="userSpaceOnUse" x1="1181.4" x2="1319.6" y1="0" y2="0"><stop offset="0" stop-color="#009902"/><stop offset=".125" stop-color="#009900"/><stop offset=".250" stop-color="#009900"/><stop offset=".500" stop-color="#009900"/><stop offset=".750" stop-color="#009900"/><stop offset="1" stop-color="#009900"/></linearGradient><linearGradient id="g5" gradientUnits="userSpaceOnUse" x1="1178.1" x2="1331.4" y1="0" y2="0"><stop offset="0" stop-color="#009904"/><stop offset=".222" stop-color="#009900"/><stop offset=".444" stop-color="#009900"/><stop offset=".667" stop-color="#009900"/><stop offset=".889" stop-color="#009900"/><stop offset="1" stop-color="#009900"/></linearGradient><linearGradient id="g6" gradientUnits="userSpaceOnUse" x1="1175.2" x2="1342.6" y1="0" y2="0"><stop offset="0" stop-color="#009905"/><stop offset=".200" stop-color="#009901"/><stop offset=".400" stop-color="#009900"/><stop offset=".600" stop-color="#009900"/><stop offset=".800" stop-color="#009900"/><stop offset="1" stop-color="#009900"/></linearGradient><linearGradient id="g7" gradientUnits="userSpaceOnUse" x1="1172.8" x2="1353.2" y1="0" y2="0"><stop offset="0" stop-color="#009907"/><stop offset=".182" stop-color="#009903"/><stop offset=".364" stop-color="#009900"/><stop offset=".545" stop-color="#009900"/><stop offset=".727" stop-color="#009900"/><stop offset=".909" stop-color="#009900"/><stop offset="1" stop-color="#009900"/></linearGradient><linearGradient id="g8" gradientUnits="userSpaceOnUse" x1="1170.7" x2="1363.4" y1="0" y2="0"><stop offset="0" stop-color="#009908"/><stop offset=".182" stop-color="#009904"/><stop offset=".364" stop-color="#009900"/><stop offset=".545" stop-color="#009900"/><stop offset=".727" stop-color="#009900"/><stop offset=".909" stop-color="#009900"/><stop offset="1" stop-color="#009900"/></linearGradient><linearGradient id="g9" gradientUnits="userSpaceOnUse" x1="1168.9" x2="1373.3" y1="0" y2="0"><stop offset="0" stop-color="#00990a"/><stop offset=".167" stop-color="#009906"/><stop offset=".333" stop-color="#009901"/><stop offset=".500" stop-color="#009900"/><stop offset=".667" stop-color="#009900"/><stop offset=".833" stop-color="#009900"/><stop offset="1" stop-color="#009900"/></linearGradient><linearGradient id="g10" gradientUnits="userSpaceOnUse" x1="1167.3" x2="1382.9" y1="0" y2="0"><stop offset="0" stop-color="#00990b"/><stop offset=".167" stop-color="#009907"/><stop offset=".333" stop-color="#009903"/><stop offset=".417" stop-color="#009900"/><stop offset=".500" stop-color="#009900"/><stop offset=".667" stop-color="#009900"/><stop offset=".833" stop-color="#009900"/><stop offset="1" stop-color="#009900"/></linearGradient><linearGradient id="g11" gradientUnits="userSpaceOnUse" x1="1166.1" x2="1392.2" y1="0" y2="0"><stop offset="0" stop-color="#00990d"/><stop offset=".154" stop-color="#009909"/><stop offset=".308" stop-color="#009904"/><stop offset=".462" stop-color="#009900"/><stop offset=".615" stop-color="#009900"/><stop offset=".769" stop-color="#009900"/><stop offset=".923" stop-color="#009900"/><stop offset="1" stop-color="#009900"/></linearGradient><linearGradient id="g12" gradientUnits="userSpaceOnUse" x1="1164.9" x2="1401.4" y1="0" y2="0"><stop offset="0" stop-color="#00990e"/><stop offset=".143" stop-color="#00990a"/><stop offset=".286" stop-color="#009906"/><stop offset=".429" stop-color="#009902"/><stop offset=".500" stop-color="#009900"/><stop offset=".571" stop-color="#009900"/><stop offset=".714" stop-color="#009900"/><stop offset=".857" stop-color="#009900"/><stop offset="1" stop-color="#009900"/></linearGradient><linearGradient id="g13" gradientUnits="userSpaceOnUse" x1="1164.0" x2="1410.3" y1="0" y2="0"><stop offset="0" stop-color="#009910"/><stop offset=".143" stop-color="#00990c"/><stop offset=".286" stop-color="#009907"/><stop offset=".429" stop-color="#009903"/><stop offset=".500" stop-color="#009900"/><stop offset=".571" stop-color="#009900"/><stop offset=".714" stop-color="#009900"/><stop offset=".857" stop-color="#009900"/><stop offset="1" stop-color="#009900"/></linearGradient><linearGradient id="g14" gradientUnits="userSpaceOnUse" x1="1163.2" x2="1419.1" y1="0" y2="0"><stop offset="0" stop-color="#009911"/><stop offset=".133" stop-color="#00990d"/><stop offset=".267" stop-color="#009909"/><stop offset=".400" stop-color="#009905"/><stop offset=".533" stop-color="#009900"/><stop offset=".667" stop-color="#009900"/><stop offset=".800" stop-color="#009900"/><stop offset=".933" stop-color="#009900"/><stop offset="1" stop-color="#009900"/></linearGradient><linearGradient id="g15" gradientUnits="userSpaceOnUse" x1="1162.5" x2="1427.8" y1="0" y2="0"><stop offset="0" stop-color="#009913"/><stop offset=".133" stop-color="#00990f"/><stop offset=".267" stop-color="#00990a"/><stop offset=".400" stop-color="#009906"/><stop offset=".533" stop-color="#009901"/><stop offset=".667" stop-color="#009900"/><stop offset=".800" stop-color="#009900"/><stop offset=".933" stop-color="#009900"/><stop offset="1" stop-color="#009900"/></linearGradient><linearGradient id="g16" gradientUnits="userSpaceOnUse" x1="1161.9" x2="1436.3" y1="0" y2="0"><stop offset="0" stop-color="#009915"/><stop offset=".125" stop-color="#009911"/><stop offset=".250" stop-color="#00990c"/><stop offset=".375" stop-color="#009908"/><stop offset=".500" stop-color="#009903"/><stop offset=".562" stop-color="#009900"/><stop offset=".625" stop-color="#009900"/><stop offset=".750" stop-color="#009900"/><stop offset=".875" stop-color="#009900"/><stop offset="1" stop-color="#009900"/></linearGradient><linearGradient id="g17" gradientUnits="userSpaceOnUse" x1="1161.4" x2="1444.8" y1="0" y2="0"><stop offset="0" stop-color="#009916"/><stop offset=".125" stop-color="#009912"/><stop offset=".250" stop-color="#00990e"/><stop offset=".375" stop-color="#009909"/><stop offset=".500" stop-color="#009904"/><stop offset=".562" stop-color="#009901"/><stop offset=".625" stop-color="#009900"/><stop offset=".750" stop-color="#009900"/><stop offset=".875" stop-color="#009900"/><stop offset="1" stop-color="#009900"/></linearGradient><linearGradient id="g18" gradientUnits="userSpaceOnUse" x1="1161.1" x2="1453.2" y1="0" y2="0"><stop offset="0" stop-color="#009918"/><stop offset=".118" stop-color="#009914"/><stop offset=".235" stop-color="#009910"/><stop offset=".353" stop-color="#00990b"/><stop offset=".471" stop-color="#009906"/><stop offset=".588" stop-color="#009901"/><stop offset=".706" stop-color="#009900"/><stop offset=".824" stop-color="#009900"/><stop offset=".941" stop-color="#009900"/><stop offset="1" stop-color="#079900"/></linearGradient><linearGradient id="g19" gradientUnits="userSpaceOnUse" x1="1160.8" x2="1461.5" y1="0" y2="0"><stop offset="0" stop-color="#00991a"/><stop offset=".118" stop-color="#009916"/><stop offset=".235" stop-color="#009911"/><stop offset=".353" stop-color="#00990c"/><stop offset=".471" stop-color="#009907"/><stop offset=".588" stop-color="#009902"/><stop offset=".647" stop-color="#009900"/><stop offset=".706" stop-color="#009900"/><stop offset=".824" stop-color="#009900"/><stop offset=".882" stop-color="#009900"/><stop offset=".941" stop-color="#029900"/><stop offset="1" stop-color="#0f9900"/></linearGradient><linearGradient id="g20" gradientUnits="userSpaceOnUse" x1="1160.6" x2="1469.8" y1="0" y2="0"><stop offset="0" stop-color="#00991b"/><stop offset=".111" stop-color="#009917"/><stop offset=".222" stop-color="#009913"/><stop offset=".333" stop-color="#00990e"/><stop offset=".444" stop-color="#00990a"/><stop offset=".556" stop-color="#009904"/><stop offset=".611" stop-color="#009901"/><stop offset=".667" stop-color="#009900"/><stop offset=".778" stop-color="#009900"/><stop offset=".889" stop-color="#009900"/><stop offset=".944" stop-color="#0a9900"/><stop offset="1" stop-color="#179900"/></linearGradient><linearGradient id="g21" gradientUnits="userSpaceOnUse" x1="1160.5" x2="1478.0" y1="0" y2="0"><stop offset="0" stop-color="#00991d"/><stop offset=".111" stop-color="#009919"/><stop offset=".222" stop-color="#009915"/><stop offset=".333" stop-color="#009910"/><stop offset=".444" stop-color="#00990b"/><stop offset=".556" stop-color="#009905"/><stop offset=".667" stop-color="#009900"/><stop offset=".778" stop-color="#009900"/><stop offset=".833" stop-color="#009900"/><stop offset=".889" stop-color="#059900"/><stop offset="1" stop-color="#1f9900"/></linearGradient><linearGradient id="g22" gradientUnits="userSpaceOnUse" x1="1160.5" x2="1486.2" y1="0" y2="0"><stop offset="0" stop-color="#00991f"/><stop offset=".105" stop-color="#00991b"/><stop offset=".211" stop-color="#009917"/><stop offset=".316" stop-color="#009912"/><stop offset=".421" stop-color="#00990d"/><stop offset=".526" stop-color="#009908"/><stop offset=".632" stop-color="#009902"/><stop offset=".684" stop-color="#009900"/><stop offset=".737" stop-color="#009900"/><stop offset=".842" stop-color="#019900"/><stop offset=".895" stop-color="#0d9900"/><stop offset=".947" stop-color="#1b9900"/><stop offset="1" stop-color="#289900"/></linearGradient><linearGradient id="g23" gradientUnits="userSpaceOnUse" x1="1160.5" x2="1494.3" y1="0" y2="0"><stop offset="0" stop-color="#009921"/><stop offset=".105" stop-color="#00991d"/><stop offset=".211" stop-color="#009918"/><stop offset=".316" stop-color="#009914"/><stop offset=".421" stop-color="#00990f"/><stop offset=".526" stop-color="#009909"/><stop offset=".632" stop-color="#009903"/><stop offset=".684" stop-color="#009900"/><stop offset=".737" stop-color="#009900"/><stop offset=".789" stop-color="#009900"/><stop offset=".842" stop-color="#079900"/><stop offset=".947" stop-color="#239900"/><stop offset="1" stop-color="#329900"/></linearGradient><linearGradient id="g24" gradientUnits="userSpaceOnUse" x1="1160.5" x2="1502.4" y1="0" y2="0"><stop offset="0" stop-color="#009923"/><stop offset=".105" stop-color="#00991f"/><stop offset=".211" stop-color="#00991a"/><stop offset=".316" stop-color="#009915"/><stop offset=".421" stop-color="#009910"/><stop offset=".526" stop-color="#00990a"/><stop offset=".632" stop-color="#009904"/><stop offset=".684" stop-color="#009901"/><stop offset=".737" stop-color="#009900"/><stop offset=".789" stop-color="#019900"/><stop offset=".842" stop-color="#0e9900"/><stop offset=".947" stop-color="#2c9900"/><stop offset="1" stop-color="#3c9900"/></linearGradient><linearGradient id="g25" gradientUnits="userSpaceOnUse" x1="1160.6" x2="1510.4" y1="0" y2="0"><stop offset="0" stop-color="#009925"/><stop offset=".100" stop-color="#009921"/><stop offset=".200" stop-color="#00991c"/><stop offset=".300" stop-color="#009918"/><stop offset=".400" stop-color="#009913"/><stop offset=".500" stop-color="#00990d"/><stop offset=".600" stop-color="#009907"/><stop offset=".700" stop-color="#009900"/><stop offset=".750" stop-color="#009900"/><stop offset=".800" stop-color="#0a9900"/><stop offset=".900" stop-color="#279900"/><stop offset=".950" stop-color="#369900"/><stop offset="1" stop-color="#479900"/></linearGradient><linearGradient id="g26" gradientUnits="userSpaceOnUse" x1="1160.7" x2="1518.5" y1="0" y2="0"><stop offset="0" stop-color="#009927"/><stop offset=".100" stop-color="#009923"/><stop offset=".200" stop-color="#00991e"/><stop offset=".300" stop-color="#009919"/><stop offset=".400" stop-color="#009914"/><stop offset=".500" stop-color="#00990e"/><stop offset=".600" stop-color="#009908"/><stop offset=".700" stop-color="#009901"/><stop offset=".750" stop-color="#039900"/><stop offset=".800" stop-color="#119900"/><stop offset=".900" stop-color="#309900"/><stop offset="1" stop-color="#529900"/></linearGradient><linearGradient id="g27" gradientUnits="userSpaceOnUse" x1="1160.9" x2="1526.5" y1="0" y2="0"><stop offset="0" stop-color="#009929"/><stop offset=".095" stop-color="#009925"/><stop offset=".190" stop-color="#009921"/><stop offset=".286" stop-color="#00991c"/><stop offset=".381" stop-color="#009917"/><stop offset=".476" stop-color="#009911"/><stop offset=".571" stop-color="#00990b"/><stop offset=".667" stop-color="#009905"/><stop offset=".714" stop-color="#009901"/><stop offset=".762" stop-color="#0d9900"/><stop offset=".857" stop-color="#2b9900"/><stop offset=".952" stop-color="#4c9900"/><stop offset="1" stop-color="#5e9900"/></linearGradient><linearGradient id="g28" gradientUnits="userSpaceOnUse" x1="1161.2" x2="1534.5" y1="0" y2="0"><stop offset="0" stop-color="#00992b"/><stop offset=".095" stop-color="#009927"/><stop offset=".190" stop-color="#009923"/><stop offset=".286" stop-color="#00991e"/><stop offset=".381" stop-color="#009918"/><stop offset=".476" stop-color="#009913"/><stop offset=".571" stop-color="#00990d"/><stop offset=".667" stop-color="#009906"/><stop offset=".714" stop-color="#069902"/><stop offset=".762" stop-color="#159900"/><stop offset=".810" stop-color="#249900"/><stop offset=".857" stop-color="#359900"/><stop offset=".952" stop-color="#589900"/><stop offset="1" stop-color="#6c9900"/></linearGradient><linearGradient id="g29" gradientUnits="userSpaceOnUse" x1="1161.6" x2="1542.5" y1="0" y2="0"><stop offset="0" stop-color="#00992d"/><stop offset=".091" stop-color="#009929"/><stop offset=".182" stop-color="#009925"/><stop offset=".273" stop-color="#009920"/><stop offset=".364" stop-color="#00991b"/><stop offset=".455" stop-color="#009916"/><stop offset=".545" stop-color="#009910"/><stop offset=".636" stop-color="#009909"/><stop offset=".682" stop-color="#029906"/><stop offset=".727" stop-color="#119902"/><stop offset=".773" stop-color="#209900"/><stop offset=".818" stop-color="#309900"/><stop offset=".909" stop-color="#539900"/><stop offset="1" stop-color="#7a9900"/></linearGradient><linearGradient id="g30" gradientUnits="userSpaceOnUse" x1="1161.9" x2="1550.5" y1="0" y2="0"><stop offset="0" stop-color="#009930"/><stop offset=".091" stop-color="#00992b"/><stop offset=".182" stop-color="#009927"/><stop offset=".273" stop-color="#009922"/><stop offset=".364" stop-color="#00991d"/><stop offset=".455" stop-color="#009917"/><stop offset=".545" stop-color="#009911"/><stop offset=".636" stop-color="#00990a"/><stop offset=".682" stop-color="#099907"/><stop offset=".727" stop-color="#189903"/><stop offset=".773" stop-color="#289900"/><stop offset=".818" stop-color="#3a9900"/><stop offset=".909" stop-color="#5f9900"/><stop offset=".955" stop-color="#739900"/><stop offset="1" stop-color="#899900"/></linearGradient><linearGradient id="g31" gradientUnits="userSpaceOnUse" x1="1162.4" x2="1558.5" y1="0" y2="0"><stop offset="0" stop-color="#009932"/><stop offset=".087" stop-color="#00992e"/><stop offset=".174" stop-color="#00992a"/><stop offset=".261" stop-color="#009925"/><stop offset=".348" stop-color="#009920"/><stop offset=".435" stop-color="#00991b"/><stop offset=".522" stop-color="#009915"/><stop offset=".609" stop-color="#00990e"/><stop offset=".652" stop-color="#06990b"/><stop offset=".696" stop-color="#159907"/><stop offset=".783" stop-color="#359900"/><stop offset=".870" stop-color="#5a9900"/><stop offset=".957" stop-color="#839900"/><stop offset="1" stop-color="#999800"/></linearGradient><linearGradient id="g32" gradientUnits="userSpaceOnUse" x1="1162.9" x2="1566.5" y1="0" y2="0"><stop offset="0" stop-color="#009934"/><stop offset=".087" stop-color="#009930"/><stop offset=".174" stop-color="#00992c"/><stop offset=".261" stop-color="#009927"/><stop offset=".348" stop-color="#009922"/><stop offset=".435" stop-color="#00991d"/><stop offset=".522" stop-color="#009916"/><stop offset=".609" stop-color="#009910"/><stop offset=".652" stop-color="#0c990c"/><stop offset=".696" stop-color="#1c9908"/><stop offset=".783" stop-color="#3f9900"/><stop offset=".826" stop-color="#529900"/><stop offset=".870" stop-color="#679900"/><stop offset=".913" stop-color="#7c9900"/><stop offset=".957" stop-color="#939900"/><stop offset="1" stop-color="#998800"/></linearGradient><linearGradient id="g33" gradientUnits="userSpaceOnUse" x1="1163.4" x2="1574.4" y1="0" y2="0"><stop offset="0" stop-color="#009937"/><stop offset=".087" stop-color="#009933"/><stop offset=".174" stop-color="#00992e"/><stop offset=".261" stop-color="#009929"/><stop offset=".348" stop-color="#009924"/><stop offset=".435" stop-color="#00991f"/><stop offset=".522" stop-color="#009918"/><stop offset=".565" stop-color="#009915"/><stop offset=".609" stop-color="#039911"/><stop offset=".696" stop-color="#259909"/><stop offset=".783" stop-color="#4a9901"/><stop offset=".826" stop-color="#5e9900"/><stop offset=".870" stop-color="#749900"/><stop offset=".913" stop-color="#8c9900"/><stop offset=".957" stop-color="#998e00"/><stop offset="1" stop-color="#997a00"/></linearGradient><linearGradient id="g34" gradientUnits="userSpaceOnUse" x1="1164.0" x2="1582.3" y1="0" y2="0"><stop offset="0" stop-color="#009939"/><stop offset=".083" stop-color="#009935"/><stop offset=".167" stop-color="#009931"/><stop offset=".250" stop-color="#00992c"/><stop offset=".333" stop-color="#009927"/><stop offset=".417" stop-color="#009922"/><stop offset=".500" stop-color="#00991c"/><stop offset=".583" stop-color="#009915"/><stop offset=".667" stop-color="#21990e"/><stop offset=".750" stop-color="#469905"/><stop offset=".792" stop-color="#5a9900"/><stop offset=".833" stop-color="#6f9900"/><stop offset=".875" stop-color="#869900"/><stop offset=".917" stop-color="#999400"/><stop offset=".958" stop-color="#997f00"/><stop offset="1" stop-color="#996e00"/></linearGradient><linearGradient id="g35" gradientUnits="userSpaceOnUse" x1="1164.6" x2="1590.3" y1="0" y2="0"><stop offset="0" stop-color="#00993c"/><stop offset=".083" stop-color="#009938"/><stop offset=".167" stop-color="#009934"/><stop offset=".250" stop-color="#00992f"/><stop offset=".333" stop-color="#00992a"/><stop offset=".417" stop-color="#009924"/><stop offset=".500" stop-color="#00991e"/><stop offset=".542" stop-color="#00991b"/><stop offset=".583" stop-color="#079917"/><stop offset=".667" stop-color="#2a990f"/><stop offset=".750" stop-color="#519906"/><stop offset=".792" stop-color="#679902"/><stop offset=".833" stop-color="#7e9900"/><stop offset=".875" stop-color="#969900"/><stop offset=".917" stop-color="#998400"/><stop offset=".958" stop-color="#997200"/><stop offset="1" stop-color="#996300"/></linearGradient><linearGradient id="g36" gradientUnits="userSpaceOnUse" x1="1165.3" x2="1598.2" y1="0" y2="0"><stop offset="0" stop-color="#00993e"/><stop offset=".080" stop-color="#00993b"/><stop offset=".160" stop-color="#009937"/><stop offset=".240" stop-color="#009932"/><stop offset=".320" stop-color="#00992d"/><stop offset=".400" stop-color="#009928"/><stop offset=".480" stop-color="#009922"/><stop offset=".520" stop-color="#00991f"/><stop offset=".560" stop-color="#04991b"/><stop offset=".640" stop-color="#279914"/><stop offset=".680" stop-color="#399910"/><stop offset=".720" stop-color="#4d990b"/><stop offset=".760" stop-color="#629907"/><stop offset=".800" stop-color="#799902"/><stop offset=".840" stop-color="#919900"/><stop offset=".880" stop-color="#998800"/><stop offset=".920" stop-color="#997500"/><stop offset=".960" stop-color="#996600"/><stop offset="1" stop-color="#995900"/></linearGradient><linearGradient id="g37" gradientUnits="userSpaceOnUse" x1="1166.0" x2="1606.1" y1="0" y2="0"><stop offset="0" stop-color="#009941"/><stop offset=".080" stop-color="#00993d"/><stop offset=".160" stop-color="#009939"/><stop offset=".240" stop-color="#009935"/><stop offset=".320" stop-color="#009930"/><stop offset=".400" stop-color="#00992a"/><stop offset=".480" stop-color="#009924"/><stop offset=".520" stop-color="#009921"/><stop offset=".560" stop-color="#0b991d"/><stop offset=".640" stop-color="#309916"/><stop offset=".720" stop-color="#59990d"/><stop offset=".800" stop-color="#889903"/><stop offset=".840" stop-color="#999000"/><stop offset=".880" stop-color="#997a00"/><stop offset=".920" stop-color="#996900"/><stop offset=".960" stop-color="#995c00"/><stop offset="1" stop-color="#995000"/></linearGradient><linearGradient id="g38" gradientUnits="userSpaceOnUse" x1="1166.9" x2="1614.0" y1="0" y2="0"><stop offset="0" stop-color="#009944"/><stop offset=".080" stop-color="#009940"/><stop offset=".160" stop-color="#00993c"/><stop offset=".240" stop-color="#009938"/><stop offset=".320" stop-color="#009933"/><stop offset=".400" stop-color="#00992d"/><stop offset=".480" stop-color="#009927"/><stop offset=".520" stop-color="#019923"/><stop offset=".560" stop-color="#129920"/><stop offset=".640" stop-color="#399918"/><stop offset=".720" stop-color="#66990f"/><stop offset=".800" stop-color="#999904"/><stop offset=".840" stop-color="#998100"/><stop offset=".880" stop-color="#996e00"/><stop offset=".920" stop-color="#995f00"/><stop offset=".960" stop-color="#995200"/><stop offset="1" stop-color="#994800"/></linearGradient><linearGradient id="g39" gradientUnits="userSpaceOnUse" x1="1167.7" x2="1621.9" y1="0" y2="0"><stop offset="0" stop-color="#009947"/><stop offset=".077" stop-color="#009944"/><stop offset=".154" stop-color="#009940"/><stop offset=".231" stop-color="#00993b"/><stop offset=".308" stop-color="#009936"/><stop offset=".385" stop-color="#009931"/><stop offset=".462" stop-color="#00992b"/><stop offset=".500" stop-color="#009928"/><stop offset=".538" stop-color="#109924"/><stop offset=".577" stop-color="#229921"/><stop offset=".615" stop-color="#36991d"/><stop offset=".692" stop-color="#629914"/><stop offset=".769" stop-color="#95990a"/><stop offset=".808" stop-color="#998404"/><stop offset=".846" stop-color="#997100"/><stop offset=".885" stop-color="#996100"/><stop offset=".923" stop-color="#995400"/><stop offset="1" stop-color="#994100"/></linearGradient><linearGradient id="g40" gradientUnits="userSpaceOnUse" x1="1168.6" x2="1629.9" y1="0" y2="0"><stop offset="0" stop-color="#00994a"/><stop offset=".077" stop-color="#009947"/><stop offset=".154" stop-color="#009943"/><stop offset=".231" stop-color="#00993e"/><stop offset=".308" stop-color="#009939"/><stop offset=".385" stop-color="#009934"/><stop offset=".462" stop-color="#00992e"/><stop offset=".500" stop-color="#05992a"/><stop offset=".538" stop-color="#189927"/><stop offset=".577" stop-color="#2b9923"/><stop offset=".615" stop-color="#41991f"/><stop offset=".654" stop-color="#57991b"/><stop offset=".692" stop-color="#709916"/><stop offset=".731" stop-color="#8a9911"/><stop offset=".769" stop-color="#998c0b"/><stop offset=".808" stop-color="#997604"/><stop offset=".846" stop-color="#996500"/><stop offset=".885" stop-color="#995700"/><stop offset=".923" stop-color="#994c00"/><stop offset=".962" stop-color="#994200"/><stop offset="1" stop-color="#993a00"/></linearGradient><linearGradient id="g41" gradientUnits="userSpaceOnUse" x1="1169.5" x2="1637.8" y1="0" y2="0"><stop offset="0" stop-color="#00994d"/><stop offset=".074" stop-color="#00994a"/><stop offset=".148" stop-color="#009946"/><stop offset=".222" stop-color="#009942"/><stop offset=".296" stop-color="#00993d"/><stop offset=".370" stop-color="#009938"/><stop offset=".444" stop-color="#009932"/><stop offset=".481" stop-color="#03992f"/><stop offset=".519" stop-color="#15992c"/><stop offset=".593" stop-color="#3e9924"/><stop offset=".667" stop-color="#6d991c"/><stop offset=".704" stop-color="#879917"/><stop offset=".741" stop-color="#998f11"/><stop offset=".778" stop-color="#99790a"/><stop offset=".815" stop-color="#996704"/><stop offset=".852" stop-color="#995900"/><stop offset=".889" stop-color="#994d00"/><stop offset=".926" stop-color="#994300"/><stop offset=".963" stop-color="#993b00"/><stop offset="1" stop-color="#993400"/></linearGradient><linearGradient id="g42" gradientUnits="userSpaceOnUse" x1="1170.5" x2="1645.7" y1="0" y2="0"><stop offset="0" stop-color="#009951"/><stop offset=".074" stop-color="#00994d"/><stop offset=".148" stop-color="#00994a"/><stop offset=".222" stop-color="#009945"/><stop offset=".296" stop-color="#009941"/><stop offset=".370" stop-color="#00993c"/><stop offset=".444" stop-color="#009936"/><stop offset=".481" stop-color="#0a9932"/><stop offset=".519" stop-color="#1e992f"/><stop offset=".593" stop-color="#499927"/><stop offset=".667" stop-color="#7c991e"/><stop offset=".704" stop-color="#989919"/><stop offset=".741" stop-color="#998011"/><stop offset=".778" stop-color="#996c0a"/><stop offset=".815" stop-color="#995c05"/><stop offset=".852" stop-color="#995000"/><stop offset=".889" stop-color="#994500"/><stop offset=".926" stop-color="#993c00"/><stop offset=".963" stop-color="#993500"/><stop offset="1" stop-color="#992e00"/></linearGradient><linearGradient id="g43" gradientUnits="userSpaceOnUse" x1="1171.5" x2="1653.7" y1="0" y2="0"><stop offset="0" stop-color="#009954"/><stop offset=".074" stop-color="#009951"/><stop offset=".148" stop-color="#00994d"/><stop offset=".222" stop-color="#009949"/><stop offset=".296" stop-color="#009944"/><stop offset=".370" stop-color="#00993f"/><stop offset=".444" stop-color="#009939"/><stop offset=".481" stop-color="#119936"/><stop offset=".519" stop-color="#269932"/><stop offset=".593" stop-color="#55992b"/><stop offset=".667" stop-color="#8c9921"/><stop offset=".704" stop-color="#998919"/><stop offset=".741" stop-color="#997211"/><stop offset=".778" stop-color="#99610a"/><stop offset=".815" stop-color="#995305"/><stop offset=".852" stop-color="#994701"/><stop offset=".889" stop-color="#993e00"/><stop offset=".963" stop-color="#992f00"/><stop offset="1" stop-color="#992900"/></linearGradient><linearGradient id="g44" gradientUnits="userSpaceOnUse" x1="1172.5" x2="1661.6" y1="0" y2="0"><stop offset="0" stop-color="#009958"/><stop offset=".071" stop-color="#009955"/><stop offset=".143" stop-color="#009951"/><stop offset=".214" stop-color="#00994d"/><stop offset=".286" stop-color="#009949"/><stop offset=".357" stop-color="#009944"/><stop offset=".429" stop-color="#00993e"/><stop offset=".464" stop-color="#10993b"/><stop offset=".500" stop-color="#259938"/><stop offset=".536" stop-color="#3b9934"/><stop offset=".571" stop-color="#539930"/><stop offset=".607" stop-color="#6d992c"/><stop offset=".643" stop-color="#8a9928"/><stop offset=".679" stop-color="#998b20"/><stop offset=".714" stop-color="#997416"/><stop offset=".750" stop-color="#99620f"/><stop offset=".786" stop-color="#995409"/><stop offset=".821" stop-color="#994805"/><stop offset=".857" stop-color="#993f01"/><stop offset=".893" stop-color="#993600"/><stop offset=".929" stop-color="#992f00"/><stop offset="1" stop-color="#992400"/></linearGradient><linearGradient id="g45" gradientUnits="userSpaceOnUse" x1="1173.6" x2="1669.6" y1="0" y2="0"><stop offset="0" stop-color="#00995c"/><stop offset=".071" stop-color="#009959"/><stop offset=".143" stop-color="#009955"/><stop offset=".214" stop-color="#009951"/><stop offset=".286" stop-color="#00994d"/><stop offset=".357" stop-color="#009948"/><stop offset=".393" stop-color="#009945"/><stop offset=".429" stop-color="#039942"/><stop offset=".500" stop-color="#2e993c"/><stop offset=".536" stop-color="#469938"/><stop offset=".571" stop-color="#609934"/><stop offset=".607" stop-color="#7d9930"/><stop offset=".643" stop-color="#99972b"/><stop offset=".679" stop-color="#997c1f"/><stop offset=".714" stop-color="#996716"/><stop offset=".750" stop-color="#99580f"/><stop offset=".786" stop-color="#994b0a"/><stop offset=".857" stop-color="#993801"/><stop offset=".893" stop-color="#993000"/><stop offset=".929" stop-color="#992a00"/><stop offset="1" stop-color="#992000"/></linearGradient><linearGradient id="g46" gradientUnits="userSpaceOnUse" x1="1174.7" x2="1677.5" y1="0" y2="0"><stop offset="0" stop-color="#009960"/><stop offset=".071" stop-color="#00995d"/><stop offset=".143" stop-color="#009959"/><stop offset=".214" stop-color="#009955"/><stop offset=".286" stop-color="#009951"/><stop offset=".357" stop-color="#00994c"/><stop offset=".393" stop-color="#00994a"/><stop offset=".429" stop-color="#0a9947"/><stop offset=".500" stop-color="#399940"/><stop offset=".536" stop-color="#53993d"/><stop offset=".571" stop-color="#6f9939"/><stop offset=".607" stop-color="#8e9934"/><stop offset=".643" stop-color="#99862a"/><stop offset=".679" stop-color="#996e1f"/><stop offset=".714" stop-color="#995c16"/><stop offset=".750" stop-color="#994e10"/><stop offset=".786" stop-color="#99430a"/><stop offset=".857" stop-color="#993202"/><stop offset=".893" stop-color="#992b00"/><stop offset=".929" stop-color="#992500"/><stop offset="1" stop-color="#991c00"/></linearGradient><linearGradient id="g47" gradientUnits="userSpaceOnUse" x1="1175.8" x2="1685.4" y1="0" y2="0"><stop offset="0" stop-color="#009964"/><stop offset=".069" stop-color="#009961"/><stop offset=".138" stop-color="#00995e"/><stop offset=".207" stop-color="#00995a"/><stop offset=".276" stop-color="#009956"/><stop offset=".345" stop-color="#009952"/><stop offset=".379" stop-color="#00994f"/><stop offset=".414" stop-color="#09994d"/><stop offset=".448" stop-color="#1f994a"/><stop offset=".483" stop-color="#379947"/><stop offset=".517" stop-color="#519943"/><stop offset=".552" stop-color="#6d9940"/><stop offset=".586" stop-color="#8c993c"/><stop offset=".621" stop-color="#998731"/><stop offset=".655" stop-color="#996f25"/><stop offset=".690" stop-color="#995d1b"/><stop offset=".724" stop-color="#994f14"/><stop offset=".759" stop-color="#99430e"/><stop offset=".828" stop-color="#993205"/><stop offset=".897" stop-color="#992500"/><stop offset=".966" stop-color="#991c00"/><stop offset="1" stop-color="#991800"/></linearGradient><linearGradient id="g48" gradientUnits="userSpaceOnUse" x1="1177.0" x2="1693.3" y1="0" y2="0"><stop offset="0" stop-color="#009968"/><stop offset=".069" stop-color="#009965"/><stop offset=".138" stop-color="#009962"/><stop offset=".207" stop-color="#00995f"/><stop offset=".276" stop-color="#00995b"/><stop offset=".345" stop-color="#009957"/><stop offset=".379" stop-color="#009954"/><stop offset=".414" stop-color="#119952"/><stop offset=".448" stop-color="#29994f"/><stop offset=".483" stop-color="#43994c"/><stop offset=".517" stop-color="#5f9948"/><stop offset=".552" stop-color="#7d9945"/><stop offset=".586" stop-color="#99933e"/><stop offset=".621" stop-color="#99782f"/><stop offset=".655" stop-color="#996324"/><stop offset=".690" stop-color="#99531b"/><stop offset=".724" stop-color="#994614"/><stop offset=".759" stop-color="#993c0e"/><stop offset=".793" stop-color="#99330a"/><stop offset=".828" stop-color="#992c06"/><stop offset=".862" stop-color="#992602"/><stop offset=".897" stop-color="#992000"/><stop offset=".966" stop-color="#991800"/><stop offset="1" stop-color="#991400"/></linearGradient><linearGradient id="g49" gradientUnits="userSpaceOnUse" x1="1178.2" x2="1701.2" y1="0" y2="0"><stop offset="0" stop-color="#00996d"/><stop offset=".067" stop-color="#00996a"/><stop offset=".133" stop-color="#009967"/><stop offset=".200" stop-color="#009964"/><stop offset=".267" stop-color="#009961"/><stop offset=".333" stop-color="#00995d"/><stop offset=".367" stop-color="#00995b"/><stop offset=".400" stop-color="#109958"/><stop offset=".433" stop-color="#289956"/><stop offset=".467" stop-color="#429953"/><stop offset=".500" stop-color="#5e9950"/><stop offset=".533" stop-color="#7d994c"/><stop offset=".567" stop-color="#999446"/><stop offset=".600" stop-color="#997836"/><stop offset=".633" stop-color="#99632a"/><stop offset=".667" stop-color="#995320"/><stop offset=".700" stop-color="#994619"/><stop offset=".733" stop-color="#993c12"/><stop offset=".767" stop-color="#99330d"/><stop offset=".800" stop-color="#992c09"/><stop offset=".867" stop-color="#992002"/><stop offset=".900" stop-color="#991c00"/><stop offset=".933" stop-color="#991700"/><stop offset="1" stop-color="#991100"/></linearGradient><linearGradient id="g50" gradientUnits="userSpaceOnUse" x1="1179.5" x2="1709.1" y1="0" y2="0"><stop offset="0" stop-color="#009971"/><stop offset=".067" stop-color="#00996f"/><stop offset=".133" stop-color="#00996c"/><stop offset=".200" stop-color="#00996a"/><stop offset=".267" stop-color="#009966"/><stop offset=".333" stop-color="#009963"/><stop offset=".367" stop-color="#029960"/><stop offset=".400" stop-color="#19995e"/><stop offset=".467" stop-color="#4e9959"/><stop offset=".500" stop-color="#6d9956"/><stop offset=".533" stop-color="#8e9953"/><stop offset=".567" stop-color="#998243"/><stop offset=".600" stop-color="#996a34"/><stop offset=".633" stop-color="#995829"/><stop offset=".667" stop-color="#994a20"/><stop offset=".700" stop-color="#993e18"/><stop offset=".733" stop-color="#993512"/><stop offset=".800" stop-color="#992609"/><stop offset=".867" stop-color="#991c03"/><stop offset=".900" stop-color="#991800"/><stop offset=".933" stop-color="#991400"/><stop offset="1" stop-color="#990d00"/></linearGradient><linearGradient id="g51" gradientUnits="userSpaceOnUse" x1="1180.7" x2="1717.1" y1="0" y2="0"><stop offset="0" stop-color="#009976"/><stop offset=".067" stop-color="#009974"/><stop offset=".133" stop-color="#009972"/><stop offset=".200" stop-color="#00996f"/><stop offset=".267" stop-color="#00996c"/><stop offset=".333" stop-color="#009969"/><stop offset=".367" stop-color="#099967"/><stop offset=".400" stop-color="#239965"/><stop offset=".433" stop-color="#3e9962"/><stop offset=".467" stop-color="#5c9960"/><stop offset=".500" stop-color="#7e995d"/><stop offset=".533" stop-color="#999055"/><stop offset=".567" stop-color="#997341"/><stop offset=".600" stop-color="#995e33"/><stop offset=".633" stop-color="#994e28"/><stop offset=".667" stop-color="#99411f"/><stop offset=".700" stop-color="#993718"/><stop offset=".733" stop-color="#992f13"/><stop offset=".767" stop-color="#99270e"/><stop offset=".800" stop-color="#99210a"/><stop offset=".867" stop-color="#991803"/><stop offset=".900" stop-color="#991400"/><stop offset=".933" stop-color="#991000"/><stop offset="1" stop-color="#990a00"/></linearGradient><linearGradient id="g52" gradientUnits="userSpaceOnUse" x1="1182.1" x2="1725.0" y1="0" y2="0"><stop offset="0" stop-color="#00997b"/><stop offset=".065" stop-color="#00997a"/><stop offset=".129" stop-color="#009978"/><stop offset=".194" stop-color="#009975"/><stop offset=".258" stop-color="#009973"/><stop offset=".323" stop-color="#009970"/><stop offset=".355" stop-color="#09996e"/><stop offset=".387" stop-color="#23996c"/><stop offset=".419" stop-color="#3e996a"/><stop offset=".452" stop-color="#5d9968"/><stop offset=".484" stop-color="#7e9966"/><stop offset=".516" stop-color="#998f5d"/><stop offset=".548" stop-color="#997248"/><stop offset=".581" stop-color="#995d39"/><stop offset=".613" stop-color="#994d2d"/><stop offset=".645" stop-color="#994124"/><stop offset=".677" stop-color="#99361c"/><stop offset=".710" stop-color="#992e16"/><stop offset=".774" stop-color="#99210d"/><stop offset=".839" stop-color="#991706"/><stop offset=".903" stop-color="#991000"/><stop offset=".968" stop-color="#990a00"/><stop offset="1" stop-color="#990700"/></linearGradient><linearGradient id="g53" gradientUnits="userSpaceOnUse" x1="1183.4" x2="1732.9" y1="0" y2="0"><stop offset="0" stop-color="#009981"/><stop offset=".065" stop-color="#00997f"/><stop offset=".129" stop-color="#00997e"/><stop offset=".194" stop-color="#00997c"/><stop offset=".258" stop-color="#00997a"/><stop offset=".323" stop-color="#009977"/><stop offset=".355" stop-color="#129976"/><stop offset=".387" stop-color="#2d9974"/><stop offset=".419" stop-color="#4b9972"/><stop offset=".452" stop-color="#6d9970"/><stop offset=".484" stop-color="#91996e"/><stop offset=".516" stop-color="#997e59"/><stop offset=".548" stop-color="#996545"/><stop offset=".581" stop-color="#995237"/><stop offset=".613" stop-color="#99442c"/><stop offset=".645" stop-color="#993923"/><stop offset=".710" stop-color="#992816"/><stop offset=".774" stop-color="#991c0d"/><stop offset=".839" stop-color="#991306"/><stop offset=".903" stop-color="#990c01"/><stop offset=".968" stop-color="#990700"/><stop offset="1" stop-color="#990500"/></linearGradient><linearGradient id="g54" gradientUnits="userSpaceOnUse" x1="1184.9" x2="1740.9" y1="0" y2="0"><stop offset="0" stop-color="#009987"/><stop offset=".065" stop-color="#009986"/><stop offset=".129" stop-color="#009984"/><stop offset=".194" stop-color="#009983"/><stop offset=".258" stop-color="#009981"/><stop offset=".323" stop-color="#01997f"/><stop offset=".355" stop-color="#1c997e"/><stop offset=".387" stop-color="#39997d"/><stop offset=".419" stop-color="#5a997b"/><stop offset=".452" stop-color="#7e997a"/><stop offset=".484" stop-color="#998c6e"/><stop offset=".516" stop-color="#996e55"/><stop offset=".548" stop-color="#995943"/><stop offset=".581" stop-color="#994836"/><stop offset=".613" stop-color="#993c2b"/><stop offset=".645" stop-color="#993223"/><stop offset=".710" stop-color="#992316"/><stop offset=".774" stop-color="#99180d"/><stop offset=".806" stop-color="#99130a"/><stop offset=".839" stop-color="#991006"/><stop offset=".903" stop-color="#990901"/><stop offset=".968" stop-color="#990400"/><stop offset="1" stop-color="#990200"/></linearGradient><linearGradient id="g55" gradientUnits="userSpaceOnUse" x1="1186.3" x2="1748.9" y1="0" y2="0"><stop offset="0" stop-color="#00998d"/><stop offset=".062" stop-color="#00998c"/><stop offset=".125" stop-color="#00998b"/><stop offset=".188" stop-color="#00998a"/><stop offset=".250" stop-color="#009989"/><stop offset=".312" stop-color="#019988"/><stop offset=".344" stop-color="#1c9987"/><stop offset=".375" stop-color="#3a9986"/><stop offset=".406" stop-color="#5b9985"/><stop offset=".438" stop-color="#809984"/><stop offset=".469" stop-color="#998a76"/><stop offset=".500" stop-color="#996c5c"/><stop offset=".531" stop-color="#995749"/><stop offset=".562" stop-color="#99473b"/><stop offset=".594" stop-color="#993b30"/><stop offset=".625" stop-color="#993127"/><stop offset=".688" stop-color="#99221a"/><stop offset=".750" stop-color="#991710"/><stop offset=".812" stop-color="#990f09"/><stop offset=".875" stop-color="#990904"/><stop offset=".906" stop-color="#990601"/><stop offset=".938" stop-color="#990400"/><stop offset="1" stop-color="#990000"/></linearGradient><linearGradient id="g56" gradientUnits="userSpaceOnUse" x1="1187.8" x2="1756.8" y1="0" y2="0"><stop offset="0" stop-color="#009993"/><stop offset=".062" stop-color="#009993"/><stop offset=".125" stop-color="#009993"/><stop offset=".188" stop-color="#009992"/><stop offset=".250" stop-color="#009992"/><stop offset=".281" stop-color="#009991"/><stop offset=".312" stop-color="#0a9991"/><stop offset=".344" stop-color="#279991"/><stop offset=".375" stop-color="#489990"/><stop offset=".406" stop-color="#6c9990"/><stop offset=".438" stop-color="#959990"/><stop offset=".469" stop-color="#997870"/><stop offset=".500" stop-color="#995f58"/><stop offset=".531" stop-color="#994c47"/><stop offset=".562" stop-color="#993e39"/><stop offset=".594" stop-color="#99332f"/><stop offset=".625" stop-color="#992a26"/><stop offset=".656" stop-color="#99231f"/><stop offset=".688" stop-color="#991d1a"/><stop offset=".719" stop-color="#991715"/><stop offset=".750" stop-color="#991310"/><stop offset=".812" stop-color="#990c09"/><stop offset=".875" stop-color="#990604"/><stop offset=".906" stop-color="#990301"/><stop offset=".938" stop-color="#990100"/><stop offset="1" stop-color="#990000"/></linearGradient><linearGradient id="g57" gradientUnits="userSpaceOnUse" x1="1189.3" x2="1764.7" y1="0" y2="0"><stop offset="0" stop-color="#009899"/><stop offset=".062" stop-color="#009899"/><stop offset=".125" stop-color="#009899"/><stop offset=".188" stop-color="#009799"/><stop offset=".250" stop-color="#009799"/><stop offset=".281" stop-color="#009799"/><stop offset=".312" stop-color="#139799"/><stop offset=".344" stop-color="#339799"/><stop offset=".375" stop-color="#569699"/><stop offset=".406" stop-color="#7d9699"/><stop offset=".438" stop-color="#99888b"/><stop offset=".469" stop-color="#99696b"/><stop offset=".500" stop-color="#995355"/><stop offset=".531" stop-color="#994345"/><stop offset=".562" stop-color="#993638"/><stop offset=".594" stop-color="#992c2e"/><stop offset=".625" stop-color="#992426"/><stop offset=".688" stop-color="#991819"/><stop offset=".750" stop-color="#990f10"/><stop offset=".812" stop-color="#990809"/><stop offset=".875" stop-color="#990304"/><stop offset=".938" stop-color="#990000"/><stop offset="1" stop-color="#990000"/></linearGradient><linearGradient id="g58" gradientUnits="userSpaceOnUse" x1="1190.9" x2="1772.6" y1="0" y2="0"><stop offset="0" stop-color="#009199"/><stop offset=".061" stop-color="#009099"/><stop offset=".121" stop-color="#009099"/><stop offset=".182" stop-color="#008f99"/><stop offset=".242" stop-color="#008e99"/><stop offset=".273" stop-color="#008d99"/><stop offset=".303" stop-color="#138d99"/><stop offset=".333" stop-color="#318c99"/><stop offset=".364" stop-color="#518b99"/><stop offset=".394" stop-color="#768a99"/><stop offset=".424" stop-color="#998494"/><stop offset=".455" stop-color="#996672"/><stop offset=".485" stop-color="#99515b"/><stop offset=".515" stop-color="#99414a"/><stop offset=".545" stop-color="#99353d"/><stop offset=".576" stop-color="#992b32"/><stop offset=".606" stop-color="#99232a"/><stop offset=".636" stop-color="#991c23"/><stop offset=".667" stop-color="#99171d"/><stop offset=".727" stop-color="#990e13"/><stop offset=".788" stop-color="#99080c"/><stop offset=".848" stop-color="#990206"/><stop offset=".879" stop-color="#990004"/><stop offset=".909" stop-color="#990002"/><stop offset=".939" stop-color="#990000"/><stop offset=".970" stop-color="#990000"/><stop offset="1" stop-color="#990000"/></linearGradient><linearGradient id="g59" gradientUnits="userSpaceOnUse" x1="1192.5" x2="1780.6" y1="0" y2="0"><stop offset="0" stop-color="#008a99"/><stop offset=".061" stop-color="#008999"/><stop offset=".121" stop-color="#008899"/><stop offset=".182" stop-color="#008799"/><stop offset=".242" stop-color="#008599"/><stop offset=".273" stop-color="#008499"/><stop offset=".303" stop-color="#1b8399"/><stop offset=".333" stop-color="#398299"/><stop offset=".364" stop-color="#5a8099"/><stop offset=".394" stop-color="#7f7f99"/><stop offset=".424" stop-color="#99728b"/><stop offset=".455" stop-color="#99586d"/><stop offset=".485" stop-color="#994658"/><stop offset=".515" stop-color="#993848"/><stop offset=".545" stop-color="#992d3b"/><stop offset=".576" stop-color="#992531"/><stop offset=".606" stop-color="#991d29"/><stop offset=".667" stop-color="#99131c"/><stop offset=".697" stop-color="#990e18"/><stop offset=".727" stop-color="#990b13"/><stop offset=".788" stop-color="#99040c"/><stop offset=".848" stop-color="#990007"/><stop offset=".909" stop-color="#990002"/><stop offset=".939" stop-color="#990000"/><stop offset=".970" stop-color="#990000"/><stop offset="1" stop-color="#990000"/></linearGradient><linearGradient id="g60" gradientUnits="userSpaceOnUse" x1="1194.1" x2="1788.5" y1="0" y2="0"><stop offset="0" stop-color="#008499"/><stop offset=".059" stop-color="#008399"/><stop offset=".118" stop-color="#008199"/><stop offset=".176" stop-color="#007f99"/><stop offset=".235" stop-color="#007d99"/><stop offset=".265" stop-color="#017b99"/><stop offset=".294" stop-color="#1b7a99"/><stop offset=".324" stop-color="#387899"/><stop offset=".353" stop-color="#577799"/><stop offset=".382" stop-color="#797599"/><stop offset=".412" stop-color="#996e93"/><stop offset=".441" stop-color="#995574"/><stop offset=".471" stop-color="#99435e"/><stop offset=".500" stop-color="#99364d"/><stop offset=".529" stop-color="#992b40"/><stop offset=".559" stop-color="#992335"/><stop offset=".588" stop-color="#991c2d"/><stop offset=".647" stop-color="#991120"/><stop offset=".706" stop-color="#990a16"/><stop offset=".735" stop-color="#990612"/><stop offset=".765" stop-color="#99040f"/><stop offset=".794" stop-color="#99010c"/><stop offset=".824" stop-color="#990009"/><stop offset=".882" stop-color="#990004"/><stop offset=".941" stop-color="#990000"/><stop offset="1" stop-color="#990000"/></linearGradient><linearGradient id="g61" gradientUnits="userSpaceOnUse" x1="1195.7" x2="1796.4" y1="0" y2="0"><stop offset="0" stop-color="#007e99"/><stop offset=".059" stop-color="#007c99"/><stop offset=".118" stop-color="#007a99"/><stop offset=".176" stop-color="#007799"/><stop offset=".235" stop-color="#007499"/><stop offset=".265" stop-color="#097399"/><stop offset=".294" stop-color="#237199"/><stop offset=".324" stop-color="#406f99"/><stop offset=".353" stop-color="#5f6d99"/><stop offset=".382" stop-color="#816a99"/><stop offset=".412" stop-color="#995f8b"/><stop offset=".441" stop-color="#99496f"/><stop offset=".471" stop-color="#993a5a"/><stop offset=".500" stop-color="#992e4b"/><stop offset=".529" stop-color="#99253e"/><stop offset=".559" stop-color="#991d34"/><stop offset=".588" stop-color="#99172c"/><stop offset=".647" stop-color="#990d1f"/><stop offset=".706" stop-color="#990616"/><stop offset=".765" stop-color="#99010f"/><stop offset=".824" stop-color="#990009"/><stop offset=".882" stop-color="#990004"/><stop offset=".941" stop-color="#990000"/><stop offset="1" stop-color="#990000"/></linearGradient><linearGradient id="g62" gradientUnits="userSpaceOnUse" x1="1197.4" x2="1804.4" y1="0" y2="0"><stop offset="0" stop-color="#007899"/><stop offset=".059" stop-color="#007599"/><stop offset=".118" stop-color="#007399"/><stop offset=".176" stop-color="#007099"/><stop offset=".235" stop-color="#006c99"/><stop offset=".265" stop-color="#106a99"/><stop offset=".294" stop-color="#2b6899"/><stop offset=".324" stop-color="#476699"/><stop offset=".353" stop-color="#676399"/><stop offset=".382" stop-color="#8a6099"/><stop offset=".412" stop-color="#995185"/><stop offset=".441" stop-color="#993f6b"/><stop offset=".471" stop-color="#993158"/><stop offset=".500" stop-color="#992749"/><stop offset=".529" stop-color="#991e3d"/><stop offset=".559" stop-color="#991833"/><stop offset=".588" stop-color="#99122b"/><stop offset=".647" stop-color="#99091f"/><stop offset=".706" stop-color="#990316"/><stop offset=".735" stop-color="#990012"/><stop offset=".765" stop-color="#99000f"/><stop offset=".824" stop-color="#990009"/><stop offset=".882" stop-color="#990005"/><stop offset=".912" stop-color="#990002"/><stop offset=".941" stop-color="#990001"/><stop offset="1" stop-color="#990000"/></linearGradient><linearGradient id="g63" gradientUnits="userSpaceOnUse" x1="1199.1" x2="1807.0" y1="0" y2="0"><stop offset="0" stop-color="#007299"/><stop offset=".059" stop-color="#006f99"/><stop offset=".118" stop-color="#006c99"/><stop offset=".176" stop-color="#006999"/><stop offset=".235" stop-color="#006599"/><stop offset=".265" stop-color="#166299"/><stop offset=".294" stop-color="#306099"/><stop offset=".324" stop-color="#4c5d99"/><stop offset=".353" stop-color="#6b5a99"/><stop offset=".382" stop-color="#8d5799"/><stop offset=".412" stop-color="#994783"/><stop offset=".441" stop-color="#99376a"/><stop offset=".471" stop-color="#992b57"/><stop offset=".500" stop-color="#992149"/><stop offset=".529" stop-color="#991a3d"/><stop offset=".588" stop-color="#990e2c"/><stop offset=".618" stop-color="#990a25"/><stop offset=".647" stop-color="#990620"/><stop offset=".706" stop-color="#990017"/><stop offset=".765" stop-color="#990010"/><stop offset=".824" stop-color="#99000a"/><stop offset=".882" stop-color="#990005"/><stop offset=".941" stop-color="#990001"/><stop offset="1" stop-color="#990000"/></linearGradient><linearGradient id="g64" gradientUnits="userSpaceOnUse" x1="1200.9" x2="1807.0" y1="0" y2="0"><stop offset="0" stop-color="#006c99"/><stop offset=".059" stop-color="#006999"/><stop offset=".118" stop-color="#006699"/><stop offset=".176" stop-color="#006299"/><stop offset=".206" stop-color="#006099"/><stop offset=".235" stop-color="#025d99"/><stop offset=".294" stop-color="#335899"/><stop offset=".324" stop-color="#4f5599"/><stop offset=".353" stop-color="#6e5299"/><stop offset=".382" stop-color="#8f4e99"/><stop offset=".412" stop-color="#993f82"/><stop offset=".441" stop-color="#99316a"/><stop offset=".471" stop-color="#992558"/><stop offset=".500" stop-color="#991d4a"/><stop offset=".529" stop-color="#99163e"/><stop offset=".588" stop-color="#990b2d"/><stop offset=".647" stop-color="#990421"/><stop offset=".676" stop-color="#99011c"/><stop offset=".706" stop-color="#990018"/><stop offset=".765" stop-color="#990011"/><stop offset=".824" stop-color="#99000b"/><stop offset=".882" stop-color="#990006"/><stop offset=".941" stop-color="#990002"/><stop offset="1" stop-color="#990000"/></linearGradient><linearGradient id="g65" gradientUnits="userSpaceOnUse" x1="1202.7" x2="1807.0" y1="0" y2="0"><stop offset="0" stop-color="#006699"/><stop offset=".059" stop-color="#006399"/><stop offset=".118" stop-color="#006099"/><stop offset=".176" stop-color="#005b99"/><stop offset=".206" stop-color="#005999"/><stop offset=".235" stop-color="#075699"/><stop offset=".265" stop-color="#1e5499"/><stop offset=".294" stop-color="#375199"/><stop offset=".324" stop-color="#524d99"/><stop offset=".353" stop-color="#704a99"/><stop offset=".382" stop-color="#914699"/><stop offset=".412" stop-color="#993881"/><stop offset=".441" stop-color="#992a6a"/><stop offset=".471" stop-color="#992058"/><stop offset=".500" stop-color="#99184a"/><stop offset=".529" stop-color="#99123f"/><stop offset=".588" stop-color="#99082e"/><stop offset=".647" stop-color="#990122"/><stop offset=".706" stop-color="#990019"/><stop offset=".765" stop-color="#990012"/><stop offset=".824" stop-color="#99000c"/><stop offset=".882" stop-color="#990007"/><stop offset=".941" stop-color="#990003"/><stop offset="1" stop-color="#990000"/></linearGradient><linearGradient id="g66" gradientUnits="userSpaceOnUse" x1="1204.6" x2="1794.3" y1="0" y2="0"><stop offset="0" stop-color="#006199"/><stop offset=".061" stop-color="#005d99"/><stop offset=".121" stop-color="#005999"/><stop offset=".182" stop-color="#005599"/><stop offset=".212" stop-color="#005299"/><stop offset=".242" stop-color="#0c4f99"/><stop offset=".303" stop-color="#3d4999"/><stop offset=".333" stop-color="#584699"/><stop offset=".364" stop-color="#764299"/><stop offset=".394" stop-color="#963e99"/><stop offset=".424" stop-color="#992f7e"/><stop offset=".455" stop-color="#992368"/><stop offset=".485" stop-color="#991a57"/><stop offset=".515" stop-color="#99134a"/><stop offset=".545" stop-color="#990e3f"/><stop offset=".606" stop-color="#99052e"/><stop offset=".636" stop-color="#990128"/><stop offset=".667" stop-color="#990022"/><stop offset=".727" stop-color="#990019"/><stop offset=".788" stop-color="#990012"/><stop offset=".848" stop-color="#99000c"/><stop offset=".909" stop-color="#990008"/><stop offset=".970" stop-color="#990004"/><stop offset="1" stop-color="#990002"/></linearGradient><linearGradient id="g67" gradientUnits="userSpaceOnUse" x1="1206.5" x2="1777.3" y1="0" y2="0"><stop offset="0" stop-color="#005c99"/><stop offset=".062" stop-color="#005899"/><stop offset=".125" stop-color="#005499"/><stop offset=".188" stop-color="#004f99"/><stop offset=".219" stop-color="#004c99"/><stop offset=".250" stop-color="#114999"/><stop offset=".312" stop-color="#404299"/><stop offset=".344" stop-color="#5b3f99"/><stop offset=".375" stop-color="#793b99"/><stop offset=".406" stop-color="#983699"/><stop offset=".438" stop-color="#99287d"/><stop offset=".469" stop-color="#991e68"/><stop offset=".500" stop-color="#991657"/><stop offset=".531" stop-color="#990f4a"/><stop offset=".562" stop-color="#990a3f"/><stop offset=".625" stop-color="#99022f"/><stop offset=".656" stop-color="#990029"/><stop offset=".688" stop-color="#990023"/><stop offset=".750" stop-color="#99001a"/><stop offset=".812" stop-color="#990013"/><stop offset=".875" stop-color="#99000d"/><stop offset=".938" stop-color="#990008"/><stop offset="1" stop-color="#990004"/></linearGradient><linearGradient id="g68" gradientUnits="userSpaceOnUse" x1="1208.4" x2="1760.3" y1="0" y2="0"><stop offset="0" stop-color="#005799"/><stop offset=".065" stop-color="#005299"/><stop offset=".129" stop-color="#004e99"/><stop offset=".194" stop-color="#004999"/><stop offset=".226" stop-color="#004699"/><stop offset=".258" stop-color="#154399"/><stop offset=".323" stop-color="#443c99"/><stop offset=".387" stop-color="#7b3399"/><stop offset=".419" stop-color="#992e98"/><stop offset=".452" stop-color="#99227c"/><stop offset=".484" stop-color="#991867"/><stop offset=".516" stop-color="#991157"/><stop offset=".581" stop-color="#990640"/><stop offset=".613" stop-color="#990237"/><stop offset=".645" stop-color="#990030"/><stop offset=".710" stop-color="#990024"/><stop offset=".774" stop-color="#99001b"/><stop offset=".839" stop-color="#990014"/><stop offset=".903" stop-color="#99000e"/><stop offset=".968" stop-color="#990009"/><stop offset="1" stop-color="#990007"/></linearGradient><linearGradient id="g69" gradientUnits="userSpaceOnUse" x1="1210.4" x2="1743.3" y1="0" y2="0"><stop offset="0" stop-color="#005199"/><stop offset=".067" stop-color="#004d99"/><stop offset=".133" stop-color="#004899"/><stop offset=".200" stop-color="#004399"/><stop offset=".233" stop-color="#054099"/><stop offset=".267" stop-color="#193c99"/><stop offset=".333" stop-color="#483599"/><stop offset=".367" stop-color="#623199"/><stop offset=".400" stop-color="#7e2d99"/><stop offset=".433" stop-color="#992796"/><stop offset=".467" stop-color="#991c7b"/><stop offset=".500" stop-color="#991367"/><stop offset=".533" stop-color="#990d58"/><stop offset=".567" stop-color="#99074b"/><stop offset=".600" stop-color="#990341"/><stop offset=".633" stop-color="#990038"/><stop offset=".667" stop-color="#990031"/><stop offset=".700" stop-color="#99002a"/><stop offset=".733" stop-color="#990025"/><stop offset=".800" stop-color="#99001c"/><stop offset=".867" stop-color="#990015"/><stop offset=".933" stop-color="#99000f"/><stop offset="1" stop-color="#99000a"/></linearGradient><linearGradient id="g70" gradientUnits="userSpaceOnUse" x1="1212.5" x2="1726.3" y1="0" y2="0"><stop offset="0" stop-color="#004d99"/><stop offset=".069" stop-color="#004899"/><stop offset=".138" stop-color="#004399"/><stop offset=".207" stop-color="#003d99"/><stop offset=".241" stop-color="#093a99"/><stop offset=".276" stop-color="#1d3699"/><stop offset=".310" stop-color="#333399"/><stop offset=".345" stop-color="#4b2f99"/><stop offset=".414" stop-color="#802699"/><stop offset=".448" stop-color="#992094"/><stop offset=".483" stop-color="#99167a"/><stop offset=".517" stop-color="#990f67"/><stop offset=".552" stop-color="#990958"/><stop offset=".621" stop-color="#990041"/><stop offset=".690" stop-color="#990032"/><stop offset=".724" stop-color="#99002b"/><stop offset=".759" stop-color="#990026"/><stop offset=".828" stop-color="#99001d"/><stop offset=".897" stop-color="#990016"/><stop offset=".966" stop-color="#990010"/><stop offset="1" stop-color="#99000d"/></linearGradient><linearGradient id="g71" gradientUnits="userSpaceOnUse" x1="1214.7" x2="1709.3" y1="0" y2="0"><stop offset="0" stop-color="#004899"/><stop offset=".071" stop-color="#004399"/><stop offset=".143" stop-color="#003e99"/><stop offset=".214" stop-color="#003899"/><stop offset=".250" stop-color="#0d3499"/><stop offset=".286" stop-color="#213199"/><stop offset=".357" stop-color="#4e2999"/><stop offset=".393" stop-color="#672499"/><stop offset=".429" stop-color="#832099"/><stop offset=".464" stop-color="#991992"/><stop offset=".500" stop-color="#99117a"/><stop offset=".536" stop-color="#990a67"/><stop offset=".571" stop-color="#990558"/><stop offset=".607" stop-color="#99004c"/><stop offset=".643" stop-color="#990042"/><stop offset=".714" stop-color="#990032"/><stop offset=".786" stop-color="#990027"/><stop offset=".857" stop-color="#99001e"/><stop offset=".929" stop-color="#990017"/><stop offset=".964" stop-color="#990013"/><stop offset="1" stop-color="#990011"/></linearGradient><linearGradient id="g72" gradientUnits="userSpaceOnUse" x1="1216.8" x2="1692.3" y1="0" y2="0"><stop offset="0" stop-color="#004399"/><stop offset=".074" stop-color="#003e99"/><stop offset=".148" stop-color="#003899"/><stop offset=".222" stop-color="#003299"/><stop offset=".259" stop-color="#112f99"/><stop offset=".296" stop-color="#252b99"/><stop offset=".333" stop-color="#3a2799"/><stop offset=".370" stop-color="#512399"/><stop offset=".407" stop-color="#6a1e99"/><stop offset=".444" stop-color="#851a99"/><stop offset=".481" stop-color="#991391"/><stop offset=".519" stop-color="#990c79"/><stop offset=".556" stop-color="#990667"/><stop offset=".593" stop-color="#990158"/><stop offset=".667" stop-color="#990043"/><stop offset=".704" stop-color="#99003a"/><stop offset=".741" stop-color="#990033"/><stop offset=".815" stop-color="#990028"/><stop offset=".889" stop-color="#99001f"/><stop offset=".963" stop-color="#990017"/><stop offset="1" stop-color="#990014"/></linearGradient><linearGradient id="g73" gradientUnits="userSpaceOnUse" x1="1219.1" x2="1675.2" y1="0" y2="0"><stop offset="0" stop-color="#003e99"/><stop offset=".077" stop-color="#003999"/><stop offset=".154" stop-color="#003399"/><stop offset=".192" stop-color="#003099"/><stop offset=".231" stop-color="#022d99"/><stop offset=".308" stop-color="#292699"/><stop offset=".346" stop-color="#3e2299"/><stop offset=".385" stop-color="#551d99"/><stop offset=".423" stop-color="#6d1999"/><stop offset=".462" stop-color="#871499"/><stop offset=".500" stop-color="#990d8f"/><stop offset=".538" stop-color="#990779"/><stop offset=".577" stop-color="#990167"/><stop offset=".615" stop-color="#990059"/><stop offset=".654" stop-color="#99004d"/><stop offset=".692" stop-color="#990043"/><stop offset=".769" stop-color="#990034"/><stop offset=".846" stop-color="#990029"/><stop offset=".923" stop-color="#990020"/><stop offset="1" stop-color="#990018"/></linearGradient><linearGradient id="g74" gradientUnits="userSpaceOnUse" x1="1221.5" x2="1658.2" y1="0" y2="0"><stop offset="0" stop-color="#003a99"/><stop offset=".080" stop-color="#003599"/><stop offset=".160" stop-color="#002f99"/><stop offset=".200" stop-color="#002b99"/><stop offset=".240" stop-color="#072899"/><stop offset=".320" stop-color="#2c2099"/><stop offset=".360" stop-color="#411c99"/><stop offset=".400" stop-color="#581899"/><stop offset=".440" stop-color="#6f1399"/><stop offset=".480" stop-color="#890e99"/><stop offset=".520" stop-color="#99088e"/><stop offset=".560" stop-color="#990278"/><stop offset=".600" stop-color="#990067"/><stop offset=".640" stop-color="#990059"/><stop offset=".720" stop-color="#990044"/><stop offset=".800" stop-color="#990035"/><stop offset=".880" stop-color="#990029"/><stop offset=".960" stop-color="#990020"/><stop offset="1" stop-color="#99001d"/></linearGradient><linearGradient id="g75" gradientUnits="userSpaceOnUse" x1="1224.0" x2="1641.2" y1="0" y2="0"><stop offset="0" stop-color="#003599"/><stop offset=".083" stop-color="#003099"/><stop offset=".167" stop-color="#002a99"/><stop offset=".208" stop-color="#002799"/><stop offset=".250" stop-color="#0b2399"/><stop offset=".333" stop-color="#301b99"/><stop offset=".375" stop-color="#441799"/><stop offset=".417" stop-color="#5a1399"/><stop offset=".500" stop-color="#8b0999"/><stop offset=".542" stop-color="#99038d"/><stop offset=".583" stop-color="#990078"/><stop offset=".625" stop-color="#990067"/><stop offset=".667" stop-color="#990059"/><stop offset=".708" stop-color="#99004e"/><stop offset=".750" stop-color="#990045"/><stop offset=".833" stop-color="#990036"/><stop offset=".917" stop-color="#99002a"/><stop offset="1" stop-color="#990021"/></linearGradient><linearGradient id="g76" gradientUnits="userSpaceOnUse" x1="1226.6" x2="1624.2" y1="0" y2="0"><stop offset="0" stop-color="#003199"/><stop offset=".087" stop-color="#002b99"/><stop offset=".174" stop-color="#002599"/><stop offset=".217" stop-color="#002299"/><stop offset=".261" stop-color="#0f1e99"/><stop offset=".304" stop-color="#201a99"/><stop offset=".348" stop-color="#331699"/><stop offset=".435" stop-color="#5d0e99"/><stop offset=".478" stop-color="#740999"/><stop offset=".522" stop-color="#8d0399"/><stop offset=".565" stop-color="#99008c"/><stop offset=".609" stop-color="#990077"/><stop offset=".652" stop-color="#990067"/><stop offset=".696" stop-color="#99005a"/><stop offset=".783" stop-color="#990045"/><stop offset=".826" stop-color="#99003d"/><stop offset=".870" stop-color="#990037"/><stop offset=".957" stop-color="#99002b"/><stop offset="1" stop-color="#990027"/></linearGradient><linearGradient id="g77" gradientUnits="userSpaceOnUse" x1="1229.3" x2="1607.2" y1="0" y2="0"><stop offset="0" stop-color="#002d99"/><stop offset=".095" stop-color="#002799"/><stop offset=".190" stop-color="#002099"/><stop offset=".238" stop-color="#061c99"/><stop offset=".286" stop-color="#171999"/><stop offset=".381" stop-color="#3e1099"/><stop offset=".476" stop-color="#6a0699"/><stop offset=".524" stop-color="#830199"/><stop offset=".571" stop-color="#990095"/><stop offset=".619" stop-color="#99007e"/><stop offset=".667" stop-color="#99006c"/><stop offset=".714" stop-color="#99005e"/><stop offset=".762" stop-color="#990052"/><stop offset=".857" stop-color="#99003f"/><stop offset=".952" stop-color="#990032"/><stop offset="1" stop-color="#99002c"/></linearGradient><linearGradient id="g78" gradientUnits="userSpaceOnUse" x1="1232.0" x2="1590.2" y1="0" y2="0"><stop offset="0" stop-color="#002899"/><stop offset=".100" stop-color="#002299"/><stop offset=".200" stop-color="#001c99"/><stop offset=".250" stop-color="#0a1899"/><stop offset=".300" stop-color="#1b1499"/><stop offset=".400" stop-color="#420b99"/><stop offset=".450" stop-color="#570799"/><stop offset=".500" stop-color="#6d0199"/><stop offset=".550" stop-color="#850099"/><stop offset=".600" stop-color="#990093"/><stop offset=".650" stop-color="#99007d"/><stop offset=".700" stop-color="#99006c"/><stop offset=".750" stop-color="#99005e"/><stop offset=".800" stop-color="#990052"/><stop offset=".850" stop-color="#990048"/><stop offset=".900" stop-color="#990040"/><stop offset="1" stop-color="#990033"/></linearGradient><linearGradient id="g79" gradientUnits="userSpaceOnUse" x1="1234.9" x2="1573.2" y1="0" y2="0"><stop offset="0" stop-color="#002499"/><stop offset=".105" stop-color="#001e99"/><stop offset=".211" stop-color="#001799"/><stop offset=".263" stop-color="#0e1399"/><stop offset=".316" stop-color="#1f0f99"/><stop offset=".368" stop-color="#310b99"/><stop offset=".421" stop-color="#450799"/><stop offset=".474" stop-color="#5a0299"/><stop offset=".526" stop-color="#700099"/><stop offset=".579" stop-color="#880099"/><stop offset=".632" stop-color="#990091"/><stop offset=".684" stop-color="#99007c"/><stop offset=".737" stop-color="#99006c"/><stop offset=".789" stop-color="#99005e"/><stop offset=".842" stop-color="#990053"/><stop offset=".895" stop-color="#990049"/><stop offset=".947" stop-color="#990041"/><stop offset="1" stop-color="#99003a"/></linearGradient><linearGradient id="g80" gradientUnits="userSpaceOnUse" x1="1237.7" x2="1556.2" y1="0" y2="0"><stop offset="0" stop-color="#002099"/><stop offset=".111" stop-color="#001a99"/><stop offset=".167" stop-color="#001799"/><stop offset=".222" stop-color="#021399"/><stop offset=".333" stop-color="#230b99"/><stop offset=".444" stop-color="#480299"/><stop offset=".500" stop-color="#5d0099"/><stop offset=".556" stop-color="#720099"/><stop offset=".611" stop-color="#8a0099"/><stop offset=".667" stop-color="#990090"/><stop offset=".722" stop-color="#99007c"/><stop offset=".778" stop-color="#99006c"/><stop offset=".833" stop-color="#99005e"/><stop offset=".889" stop-color="#990053"/><stop offset="1" stop-color="#990041"/></linearGradient><linearGradient id="g81" gradientUnits="userSpaceOnUse" x1="1240.6" x2="1539.2" y1="0" y2="0"><stop offset="0" stop-color="#001c99"/><stop offset=".118" stop-color="#001699"/><stop offset=".176" stop-color="#001299"/><stop offset=".235" stop-color="#060f99"/><stop offset=".353" stop-color="#260799"/><stop offset=".412" stop-color="#380299"/><stop offset=".471" stop-color="#4b0099"/><stop offset=".588" stop-color="#740099"/><stop offset=".647" stop-color="#8b0099"/><stop offset=".706" stop-color="#99008f"/><stop offset=".765" stop-color="#99007b"/><stop offset=".824" stop-color="#99006c"/><stop offset=".882" stop-color="#99005f"/><stop offset=".941" stop-color="#990054"/><stop offset="1" stop-color="#99004a"/></linearGradient><linearGradient id="g82" gradientUnits="userSpaceOnUse" x1="1243.6" x2="1522.2" y1="0" y2="0"><stop offset="0" stop-color="#001899"/><stop offset=".125" stop-color="#001299"/><stop offset=".188" stop-color="#000e99"/><stop offset=".250" stop-color="#0a0b99"/><stop offset=".312" stop-color="#190799"/><stop offset=".375" stop-color="#2a0399"/><stop offset=".438" stop-color="#3b0099"/><stop offset=".500" stop-color="#4e0099"/><stop offset=".625" stop-color="#760099"/><stop offset=".688" stop-color="#8d0099"/><stop offset=".750" stop-color="#99008e"/><stop offset=".812" stop-color="#99007b"/><stop offset=".875" stop-color="#99006c"/><stop offset=".938" stop-color="#99005f"/><stop offset="1" stop-color="#990054"/></linearGradient><linearGradient id="g83" gradientUnits="userSpaceOnUse" x1="1246.8" x2="1505.1" y1="0" y2="0"><stop offset="0" stop-color="#001499"/><stop offset=".133" stop-color="#000e99"/><stop offset=".200" stop-color="#000a99"/><stop offset=".267" stop-color="#0d0799"/><stop offset=".400" stop-color="#2d0099"/><stop offset=".467" stop-color="#3e0099"/><stop offset=".533" stop-color="#510099"/><stop offset=".667" stop-color="#780099"/><stop offset=".733" stop-color="#8e0099"/><stop offset=".800" stop-color="#99008e"/><stop offset=".867" stop-color="#99007b"/><stop offset=".933" stop-color="#99006c"/><stop offset="1" stop-color="#990060"/></linearGradient><linearGradient id="g84" gradientUnits="userSpaceOnUse" x1="1250.1" x2="1488.1" y1="0" y2="0"><stop offset="0" stop-color="#001199"/><stop offset=".143" stop-color="#000a99"/><stop offset=".214" stop-color="#030699"/><stop offset=".286" stop-color="#110399"/><stop offset=".357" stop-color="#200099"/><stop offset=".429" stop-color="#300099"/><stop offset=".571" stop-color="#530099"/><stop offset=".714" stop-color="#7a0099"/><stop offset=".786" stop-color="#8f0099"/><stop offset=".857" stop-color="#99008e"/><stop offset=".929" stop-color="#99007c"/><stop offset="1" stop-color="#99006d"/></linearGradient><linearGradient id="g85" gradientUnits="userSpaceOnUse" x1="1253.5" x2="1471.1" y1="0" y2="0"><stop offset="0" stop-color="#000d99"/><stop offset=".154" stop-color="#000699"/><stop offset=".231" stop-color="#070399"/><stop offset=".308" stop-color="#150099"/><stop offset=".462" stop-color="#330099"/><stop offset=".615" stop-color="#550099"/><stop offset=".692" stop-color="#670099"/><stop offset=".769" stop-color="#7b0099"/><stop offset=".846" stop-color="#8f0099"/><stop offset=".923" stop-color="#99008e"/><stop offset="1" stop-color="#99007d"/></linearGradient><linearGradient id="g86" gradientUnits="userSpaceOnUse" x1="1257.1" x2="1454.1" y1="0" y2="0"><stop offset="0" stop-color="#000999"/><stop offset=".182" stop-color="#000299"/><stop offset=".273" stop-color="#0e0099"/><stop offset=".364" stop-color="#1d0099"/><stop offset=".545" stop-color="#3f0099"/><stop offset=".636" stop-color="#500099"/><stop offset=".727" stop-color="#640099"/><stop offset=".909" stop-color="#8d0099"/><stop offset="1" stop-color="#99008f"/></linearGradient><linearGradient id="g87" gradientUnits="userSpaceOnUse" x1="1261.0" x2="1437.1" y1="0" y2="0"><stop offset="0" stop-color="#000599"/><stop offset=".100" stop-color="#000299"/><stop offset=".200" stop-color="#040099"/><stop offset=".400" stop-color="#210099"/><stop offset=".600" stop-color="#420099"/><stop offset=".700" stop-color="#530099"/><stop offset=".800" stop-color="#660099"/><stop offset=".900" stop-color="#790099"/><stop offset="1" stop-color="#8e0099"/></linearGradient><linearGradient id="g88" gradientUnits="userSpaceOnUse" x1="1265.2" x2="1420.1" y1="0" y2="0"><stop offset="0" stop-color="#000299"/><stop offset=".111" stop-color="#000099"/><stop offset=".222" stop-color="#080099"/><stop offset=".444" stop-color="#250099"/><stop offset=".667" stop-color="#440099"/><stop offset=".889" stop-color="#670099"/><stop offset="1" stop-color="#7a0099"/></linearGradient><linearGradient id="g89" gradientUnits="userSpaceOnUse" x1="1269.8" x2="1403.1" y1="0" y2="0"><stop offset="0" stop-color="#000099"/><stop offset=".125" stop-color="#000099"/><stop offset=".250" stop-color="#0d0099"/><stop offset=".500" stop-color="#280099"/><stop offset=".750" stop-color="#460099"/><stop offset=".875" stop-color="#560099"/><stop offset="1" stop-color="#680099"/></linearGradient><linearGradient id="g90" gradientUnits="userSpaceOnUse" x1="1275.0" x2="1386.1" y1="0" y2="0"><stop offset="0" stop-color="#000099"/><stop offset=".143" stop-color="#050099"/><stop offset=".286" stop-color="#110099"/><stop offset=".571" stop-color="#2b0099"/><stop offset=".857" stop-color="#470099"/><stop offset="1" stop-color="#570099"/></linearGradient><linearGradient id="g91" gradientUnits="userSpaceOnUse" x1="1281.1" x2="1369.1" y1="0" y2="0"><stop offset="0" stop-color="#000099"/><stop offset=".200" stop-color="#0c0099"/><stop offset=".400" stop-color="#1a0099"/><stop offset=".800" stop-color="#370099"/><stop offset="1" stop-color="#470099"/></linearGradient><linearGradient id="g92" gradientUnits="userSpaceOnUse" x1="1288.7" x2="1352.1" y1="0" y2="0"><stop offset="0" stop-color="#060099"/><stop offset=".500" stop-color="#1e0099"/><stop offset="1" stop-color="#390099"/></linearGradient><linearGradient id="g93" gradientUnits="userSpaceOnUse" x1="1297.5" x2="1335.1" y1="0" y2="0"><stop offset="0" stop-color="#0e0099"/><stop offset=".667" stop-color="#210099"/><stop offset="1" stop-color="#2b0099"/></linearGradient><linearGradient id="g94" gradientUnits="userSpaceOnUse" x1="1306.6" x2="1318.0" y1="0" y2="0"><stop offset="0" stop-color="#150099"/><stop offset="1" stop-color="#1e0099"/></linearGradient><linearGradient id="g95" gradientUnits="userSpaceOnUse" x1="1419.5" x2="1432.0" y1="0" y2="0"><stop offset="0" stop-color="#00ff00"/><stop offset=".500" stop-color="#01ff00"/><stop offset="1" stop-color="#09ff00"/></linearGradient><linearGradient id="g96" gradientUnits="userSpaceOnUse" x1="1418.1" x2="1438.6" y1="0" y2="0"><stop offset="0" stop-color="#00ff03"/><stop offset=".333" stop-color="#02ff00"/><stop offset=".667" stop-color="#0bff00"/><stop offset="1" stop-color="#14ff00"/></linearGradient><linearGradient id="g97" gradientUnits="userSpaceOnUse" x1="1416.6" x2="1445.3" y1="0" y2="0"><stop offset="0" stop-color="#00ff05"/><stop offset=".250" stop-color="#03ff03"/><stop offset=".500" stop-color="#0cff00"/><stop offset="1" stop-color="#20ff00"/></linearGradient><linearGradient id="g98" gradientUnits="userSpaceOnUse" x1="1415.1" x2="1451.9" y1="0" y2="0"><stop offset="0" stop-color="#00ff08"/><stop offset=".200" stop-color="#03ff06"/><stop offset=".400" stop-color="#0dff03"/><stop offset=".800" stop-color="#21ff00"/><stop offset="1" stop-color="#2cff00"/></linearGradient><linearGradient id="g99" gradientUnits="userSpaceOnUse" x1="1413.7" x2="1458.5" y1="0" y2="0"><stop offset="0" stop-color="#00ff0b"/><stop offset=".200" stop-color="#05ff08"/><stop offset=".400" stop-color="#11ff05"/><stop offset=".800" stop-color="#2bff00"/><stop offset="1" stop-color="#38ff00"/></linearGradient><linearGradient id="g100" gradientUnits="userSpaceOnUse" x1="1412.2" x2="1465.2" y1="0" y2="0"><stop offset="0" stop-color="#00ff0e"/><stop offset=".167" stop-color="#05ff0b"/><stop offset=".333" stop-color="#11ff08"/><stop offset=".667" stop-color="#2bff02"/><stop offset=".833" stop-color="#38ff00"/><stop offset="1" stop-color="#46ff00"/></linearGradient><linearGradient id="g101" gradientUnits="userSpaceOnUse" x1="1410.8" x2="1471.8" y1="0" y2="0"><stop offset="0" stop-color="#00ff12"/><stop offset=".143" stop-color="#05ff0f"/><stop offset=".286" stop-color="#11ff0b"/><stop offset=".571" stop-color="#2bff05"/><stop offset=".857" stop-color="#46ff00"/><stop offset="1" stop-color="#54ff00"/></linearGradient><linearGradient id="g102" gradientUnits="userSpaceOnUse" x1="1409.3" x2="1478.4" y1="0" y2="0"><stop offset="0" stop-color="#00ff15"/><stop offset=".125" stop-color="#05ff12"/><stop offset=".250" stop-color="#11ff0f"/><stop offset=".500" stop-color="#2bff08"/><stop offset=".750" stop-color="#46ff02"/><stop offset=".875" stop-color="#54ff00"/><stop offset="1" stop-color="#62ff00"/></linearGradient><linearGradient id="g103" gradientUnits="userSpaceOnUse" x1="1407.8" x2="1485.0" y1="0" y2="0"><stop offset="0" stop-color="#00ff18"/><stop offset=".111" stop-color="#05ff15"/><stop offset=".222" stop-color="#11ff12"/><stop offset=".444" stop-color="#2bff0c"/><stop offset=".667" stop-color="#46ff05"/><stop offset=".889" stop-color="#63ff00"/><stop offset="1" stop-color="#72ff00"/></linearGradient><linearGradient id="g104" gradientUnits="userSpaceOnUse" x1="1406.4" x2="1491.7" y1="0" y2="0"><stop offset="0" stop-color="#00ff1b"/><stop offset=".100" stop-color="#05ff19"/><stop offset=".200" stop-color="#11ff16"/><stop offset=".400" stop-color="#2bff0f"/><stop offset=".600" stop-color="#46ff09"/><stop offset=".800" stop-color="#63ff02"/><stop offset=".900" stop-color="#72ff00"/><stop offset="1" stop-color="#82ff00"/></linearGradient><linearGradient id="g105" gradientUnits="userSpaceOnUse" x1="1404.9" x2="1498.3" y1="0" y2="0"><stop offset="0" stop-color="#00ff1f"/><stop offset=".091" stop-color="#05ff1c"/><stop offset=".182" stop-color="#11ff19"/><stop offset=".364" stop-color="#2bff13"/><stop offset=".545" stop-color="#47ff0c"/><stop offset=".727" stop-color="#64ff05"/><stop offset=".909" stop-color="#83ff00"/><stop offset="1" stop-color="#93ff00"/></linearGradient><linearGradient id="g106" gradientUnits="userSpaceOnUse" x1="1403.4" x2="1504.9" y1="0" y2="0"><stop offset="0" stop-color="#00ff22"/><stop offset=".083" stop-color="#05ff20"/><stop offset=".167" stop-color="#11ff1d"/><stop offset=".333" stop-color="#2cff16"/><stop offset=".500" stop-color="#48ff10"/><stop offset=".667" stop-color="#65ff09"/><stop offset=".833" stop-color="#84ff02"/><stop offset=".917" stop-color="#95ff00"/><stop offset="1" stop-color="#a5ff00"/></linearGradient><linearGradient id="g107" gradientUnits="userSpaceOnUse" x1="1402.0" x2="1511.6" y1="0" y2="0"><stop offset="0" stop-color="#00ff26"/><stop offset=".077" stop-color="#05ff23"/><stop offset=".154" stop-color="#12ff20"/><stop offset=".308" stop-color="#2cff1a"/><stop offset=".462" stop-color="#48ff14"/><stop offset=".615" stop-color="#66ff0d"/><stop offset=".769" stop-color="#86ff06"/><stop offset=".846" stop-color="#96ff02"/><stop offset=".923" stop-color="#a7ff00"/><stop offset="1" stop-color="#b9ff00"/></linearGradient><linearGradient id="g108" gradientUnits="userSpaceOnUse" x1="1400.5" x2="1518.2" y1="0" y2="0"><stop offset="0" stop-color="#00ff2a"/><stop offset=".071" stop-color="#05ff27"/><stop offset=".143" stop-color="#12ff24"/><stop offset=".286" stop-color="#2dff1e"/><stop offset=".429" stop-color="#49ff17"/><stop offset=".571" stop-color="#67ff11"/><stop offset=".714" stop-color="#87ff09"/><stop offset=".857" stop-color="#a9ff02"/><stop offset=".929" stop-color="#bbff00"/><stop offset="1" stop-color="#cdff00"/></linearGradient><linearGradient id="g109" gradientUnits="userSpaceOnUse" x1="1399.1" x2="1524.8" y1="0" y2="0"><stop offset="0" stop-color="#00ff2e"/><stop offset=".071" stop-color="#06ff2b"/><stop offset=".143" stop-color="#14ff27"/><stop offset=".286" stop-color="#31ff21"/><stop offset=".429" stop-color="#50ff1a"/><stop offset=".571" stop-color="#71ff13"/><stop offset=".714" stop-color="#95ff0b"/><stop offset=".786" stop-color="#a7ff07"/><stop offset=".857" stop-color="#bbff02"/><stop offset=".929" stop-color="#cfff00"/><stop offset="1" stop-color="#e3ff00"/></linearGradient><linearGradient id="g110" gradientUnits="userSpaceOnUse" x1="1397.6" x2="1531.5" y1="0" y2="0"><stop offset="0" stop-color="#00ff31"/><stop offset=".067" stop-color="#06ff2e"/><stop offset=".133" stop-color="#14ff2b"/><stop offset=".267" stop-color="#31ff25"/><stop offset=".400" stop-color="#51ff1e"/><stop offset=".533" stop-color="#72ff17"/><stop offset=".667" stop-color="#96ff0f"/><stop offset=".800" stop-color="#bcff07"/><stop offset=".867" stop-color="#d0ff02"/><stop offset=".933" stop-color="#e5ff00"/><stop offset="1" stop-color="#fbff00"/></linearGradient><linearGradient id="g111" gradientUnits="userSpaceOnUse" x1="1396.1" x2="1538.1" y1="0" y2="0"><stop offset="0" stop-color="#00ff35"/><stop offset=".062" stop-color="#06ff32"/><stop offset=".125" stop-color="#14ff2f"/><stop offset=".250" stop-color="#32ff29"/><stop offset=".375" stop-color="#51ff22"/><stop offset=".500" stop-color="#73ff1b"/><stop offset=".625" stop-color="#97ff14"/><stop offset=".750" stop-color="#beff0b"/><stop offset=".875" stop-color="#e7ff02"/><stop offset=".938" stop-color="#fdff00"/><stop offset="1" stop-color="#ffec00"/></linearGradient><linearGradient id="g112" gradientUnits="userSpaceOnUse" x1="1394.7" x2="1544.7" y1="0" y2="0"><stop offset="0" stop-color="#00ff3a"/><stop offset=".059" stop-color="#06ff37"/><stop offset=".118" stop-color="#14ff34"/><stop offset=".235" stop-color="#32ff2d"/><stop offset=".353" stop-color="#52ff27"/><stop offset=".471" stop-color="#74ff20"/><stop offset=".588" stop-color="#99ff18"/><stop offset=".706" stop-color="#c0ff10"/><stop offset=".824" stop-color="#e9ff07"/><stop offset=".882" stop-color="#fffe03"/><stop offset=".941" stop-color="#ffea00"/><stop offset="1" stop-color="#ffd700"/></linearGradient><linearGradient id="g113" gradientUnits="userSpaceOnUse" x1="1393.2" x2="1551.4" y1="0" y2="0"><stop offset="0" stop-color="#00ff3e"/><stop offset=".056" stop-color="#06ff3b"/><stop offset=".111" stop-color="#14ff38"/><stop offset=".222" stop-color="#33ff32"/><stop offset=".278" stop-color="#42ff2f"/><stop offset=".333" stop-color="#53ff2b"/><stop offset=".444" stop-color="#75ff24"/><stop offset=".556" stop-color="#9aff1d"/><stop offset=".611" stop-color="#adff19"/><stop offset=".667" stop-color="#c2ff15"/><stop offset=".722" stop-color="#d6ff10"/><stop offset=".778" stop-color="#ecff0c"/><stop offset=".833" stop-color="#fffc07"/><stop offset=".889" stop-color="#ffe702"/><stop offset=".944" stop-color="#ffd500"/><stop offset="1" stop-color="#ffc400"/></linearGradient><linearGradient id="g114" gradientUnits="userSpaceOnUse" x1="1391.7" x2="1558.0" y1="0" y2="0"><stop offset="0" stop-color="#00ff42"/><stop offset=".053" stop-color="#06ff3f"/><stop offset=".105" stop-color="#14ff3c"/><stop offset=".211" stop-color="#33ff36"/><stop offset=".316" stop-color="#54ff30"/><stop offset=".421" stop-color="#76ff29"/><stop offset=".526" stop-color="#9cff21"/><stop offset=".579" stop-color="#afff1d"/><stop offset=".632" stop-color="#c4ff19"/><stop offset=".737" stop-color="#efff11"/><stop offset=".789" stop-color="#fff90c"/><stop offset=".842" stop-color="#ffe407"/><stop offset=".895" stop-color="#ffd202"/><stop offset=".947" stop-color="#ffc200"/><stop offset="1" stop-color="#ffb400"/></linearGradient><linearGradient id="g115" gradientUnits="userSpaceOnUse" x1="1390.3" x2="1564.6" y1="0" y2="0"><stop offset="0" stop-color="#00ff47"/><stop offset=".050" stop-color="#06ff44"/><stop offset=".100" stop-color="#15ff41"/><stop offset=".200" stop-color="#34ff3b"/><stop offset=".300" stop-color="#55ff34"/><stop offset=".400" stop-color="#78ff2e"/><stop offset=".450" stop-color="#8aff2a"/><stop offset=".500" stop-color="#9eff26"/><stop offset=".600" stop-color="#c6ff1e"/><stop offset=".700" stop-color="#f2ff16"/><stop offset=".750" stop-color="#fff511"/><stop offset=".800" stop-color="#ffe10b"/><stop offset=".850" stop-color="#ffcf06"/><stop offset=".900" stop-color="#ffbf02"/><stop offset=".950" stop-color="#ffb100"/><stop offset="1" stop-color="#ffa400"/></linearGradient><linearGradient id="g116" gradientUnits="userSpaceOnUse" x1="1388.8" x2="1571.2" y1="0" y2="0"><stop offset="0" stop-color="#00ff4b"/><stop offset=".048" stop-color="#06ff48"/><stop offset=".095" stop-color="#15ff46"/><stop offset=".190" stop-color="#34ff40"/><stop offset=".286" stop-color="#56ff39"/><stop offset=".381" stop-color="#79ff33"/><stop offset=".476" stop-color="#a0ff2b"/><stop offset=".571" stop-color="#c9ff23"/><stop offset=".667" stop-color="#f5ff1b"/><stop offset=".714" stop-color="#fff215"/><stop offset=".762" stop-color="#ffde10"/><stop offset=".810" stop-color="#ffcc0a"/><stop offset=".857" stop-color="#ffbc06"/><stop offset=".905" stop-color="#ffae02"/><stop offset=".952" stop-color="#ffa200"/><stop offset="1" stop-color="#ff9700"/></linearGradient><linearGradient id="g117" gradientUnits="userSpaceOnUse" x1="1387.4" x2="1577.9" y1="0" y2="0"><stop offset="0" stop-color="#00ff50"/><stop offset=".045" stop-color="#06ff4d"/><stop offset=".091" stop-color="#15ff4a"/><stop offset=".182" stop-color="#35ff45"/><stop offset=".227" stop-color="#45ff41"/><stop offset=".273" stop-color="#57ff3e"/><stop offset=".318" stop-color="#68ff3b"/><stop offset=".364" stop-color="#7bff38"/><stop offset=".455" stop-color="#a2ff30"/><stop offset=".545" stop-color="#cbff29"/><stop offset=".636" stop-color="#f9ff20"/><stop offset=".682" stop-color="#ffef1a"/><stop offset=".727" stop-color="#ffdb14"/><stop offset=".773" stop-color="#ffc90f"/><stop offset=".818" stop-color="#ffba0a"/><stop offset=".909" stop-color="#ff9f02"/><stop offset=".955" stop-color="#ff9400"/><stop offset="1" stop-color="#ff8a00"/></linearGradient><linearGradient id="g118" gradientUnits="userSpaceOnUse" x1="1385.9" x2="1584.5" y1="0" y2="0"><stop offset="0" stop-color="#00ff55"/><stop offset=".043" stop-color="#06ff52"/><stop offset=".087" stop-color="#15ff4f"/><stop offset=".174" stop-color="#35ff4a"/><stop offset=".261" stop-color="#58ff43"/><stop offset=".348" stop-color="#7cff3d"/><stop offset=".435" stop-color="#a4ff36"/><stop offset=".522" stop-color="#ceff2e"/><stop offset=".609" stop-color="#fcff26"/><stop offset=".652" stop-color="#ffeb1f"/><stop offset=".696" stop-color="#ffd718"/><stop offset=".739" stop-color="#ffc613"/><stop offset=".783" stop-color="#ffb70e"/><stop offset=".826" stop-color="#ffa909"/><stop offset=".870" stop-color="#ff9d05"/><stop offset=".957" stop-color="#ff8800"/><stop offset="1" stop-color="#ff7e00"/></linearGradient><linearGradient id="g119" gradientUnits="userSpaceOnUse" x1="1384.4" x2="1591.1" y1="0" y2="0"><stop offset="0" stop-color="#00ff5a"/><stop offset=".043" stop-color="#07ff57"/><stop offset=".087" stop-color="#17ff54"/><stop offset=".174" stop-color="#39ff4e"/><stop offset=".261" stop-color="#5eff48"/><stop offset=".348" stop-color="#85ff41"/><stop offset=".435" stop-color="#afff3a"/><stop offset=".522" stop-color="#ddff32"/><stop offset=".565" stop-color="#f6ff2d"/><stop offset=".609" stop-color="#fff026"/><stop offset=".652" stop-color="#ffda1f"/><stop offset=".696" stop-color="#ffc819"/><stop offset=".739" stop-color="#ffb713"/><stop offset=".783" stop-color="#ffa90e"/><stop offset=".870" stop-color="#ff9005"/><stop offset=".957" stop-color="#ff7c00"/><stop offset="1" stop-color="#ff7400"/></linearGradient><linearGradient id="g120" gradientUnits="userSpaceOnUse" x1="1383.0" x2="1597.8" y1="0" y2="0"><stop offset="0" stop-color="#00ff5f"/><stop offset=".042" stop-color="#07ff5c"/><stop offset=".083" stop-color="#17ff59"/><stop offset=".167" stop-color="#3aff54"/><stop offset=".250" stop-color="#5fff4d"/><stop offset=".292" stop-color="#72ff4a"/><stop offset=".333" stop-color="#87ff47"/><stop offset=".417" stop-color="#b2ff3f"/><stop offset=".458" stop-color="#c8ff3c"/><stop offset=".500" stop-color="#e0ff38"/><stop offset=".542" stop-color="#f9ff33"/><stop offset=".583" stop-color="#ffec2c"/><stop offset=".625" stop-color="#ffd724"/><stop offset=".667" stop-color="#ffc51d"/><stop offset=".750" stop-color="#ffa612"/><stop offset=".833" stop-color="#ff8e09"/><stop offset=".917" stop-color="#ff7a02"/><stop offset=".958" stop-color="#ff7200"/><stop offset="1" stop-color="#ff6a00"/></linearGradient><linearGradient id="g121" gradientUnits="userSpaceOnUse" x1="1381.5" x2="1604.4" y1="0" y2="0"><stop offset="0" stop-color="#00ff64"/><stop offset=".040" stop-color="#07ff62"/><stop offset=".080" stop-color="#17ff5f"/><stop offset=".160" stop-color="#3aff59"/><stop offset=".240" stop-color="#60ff53"/><stop offset=".320" stop-color="#88ff4c"/><stop offset=".400" stop-color="#b4ff45"/><stop offset=".480" stop-color="#e3ff3e"/><stop offset=".520" stop-color="#fdff39"/><stop offset=".560" stop-color="#ffe931"/><stop offset=".600" stop-color="#ffd428"/><stop offset=".640" stop-color="#ffc221"/><stop offset=".680" stop-color="#ffb21b"/><stop offset=".720" stop-color="#ffa416"/><stop offset=".760" stop-color="#ff9711"/><stop offset=".800" stop-color="#ff8c0c"/><stop offset=".840" stop-color="#ff8109"/><stop offset=".880" stop-color="#ff7805"/><stop offset=".960" stop-color="#ff6800"/><stop offset="1" stop-color="#ff6100"/></linearGradient><linearGradient id="g122" gradientUnits="userSpaceOnUse" x1="1380.0" x2="1611.0" y1="0" y2="0"><stop offset="0" stop-color="#00ff6a"/><stop offset=".038" stop-color="#07ff67"/><stop offset=".077" stop-color="#18ff65"/><stop offset=".154" stop-color="#3bff5f"/><stop offset=".231" stop-color="#61ff59"/><stop offset=".308" stop-color="#8aff53"/><stop offset=".385" stop-color="#b7ff4c"/><stop offset=".423" stop-color="#ceff48"/><stop offset=".462" stop-color="#e7ff44"/><stop offset=".500" stop-color="#fffd40"/><stop offset=".538" stop-color="#ffe536"/><stop offset=".577" stop-color="#ffd12d"/><stop offset=".615" stop-color="#ffbf26"/><stop offset=".654" stop-color="#ffaf1f"/><stop offset=".692" stop-color="#ffa11a"/><stop offset=".731" stop-color="#ff9415"/><stop offset=".769" stop-color="#ff8910"/><stop offset=".846" stop-color="#ff7608"/><stop offset=".923" stop-color="#ff6602"/><stop offset=".962" stop-color="#ff5f00"/><stop offset="1" stop-color="#ff5900"/></linearGradient><linearGradient id="g123" gradientUnits="userSpaceOnUse" x1="1378.6" x2="1617.7" y1="0" y2="0"><stop offset="0" stop-color="#00ff6f"/><stop offset=".037" stop-color="#07ff6d"/><stop offset=".074" stop-color="#18ff6a"/><stop offset=".111" stop-color="#29ff68"/><stop offset=".148" stop-color="#3cff65"/><stop offset=".222" stop-color="#62ff5f"/><stop offset=".296" stop-color="#8cff59"/><stop offset=".370" stop-color="#b9ff52"/><stop offset=".444" stop-color="#eaff4a"/><stop offset=".481" stop-color="#fffa45"/><stop offset=".519" stop-color="#ffe23b"/><stop offset=".556" stop-color="#ffcd32"/><stop offset=".593" stop-color="#ffbc2a"/><stop offset=".630" stop-color="#ffac24"/><stop offset=".667" stop-color="#ff9e1e"/><stop offset=".741" stop-color="#ff8713"/><stop offset=".815" stop-color="#ff740b"/><stop offset=".852" stop-color="#ff6b08"/><stop offset=".889" stop-color="#ff6404"/><stop offset=".963" stop-color="#ff5700"/><stop offset="1" stop-color="#ff5100"/></linearGradient><linearGradient id="g124" gradientUnits="userSpaceOnUse" x1="1377.1" x2="1624.3" y1="0" y2="0"><stop offset="0" stop-color="#00ff75"/><stop offset=".036" stop-color="#07ff73"/><stop offset=".071" stop-color="#18ff70"/><stop offset=".143" stop-color="#3cff6b"/><stop offset=".214" stop-color="#64ff65"/><stop offset=".250" stop-color="#78ff62"/><stop offset=".286" stop-color="#8eff5f"/><stop offset=".357" stop-color="#bcff59"/><stop offset=".429" stop-color="#eeff51"/><stop offset=".464" stop-color="#fff54a"/><stop offset=".500" stop-color="#ffde40"/><stop offset=".536" stop-color="#ffca37"/><stop offset=".571" stop-color="#ffb82f"/><stop offset=".643" stop-color="#ff9b21"/><stop offset=".714" stop-color="#ff8417"/><stop offset=".786" stop-color="#ff710e"/><stop offset=".857" stop-color="#ff6207"/><stop offset=".929" stop-color="#ff5501"/><stop offset="1" stop-color="#ff4900"/></linearGradient><linearGradient id="g125" gradientUnits="userSpaceOnUse" x1="1375.7" x2="1630.9" y1="0" y2="0"><stop offset="0" stop-color="#00ff7b"/><stop offset=".034" stop-color="#07ff79"/><stop offset=".069" stop-color="#18ff76"/><stop offset=".138" stop-color="#3dff71"/><stop offset=".207" stop-color="#65ff6c"/><stop offset=".276" stop-color="#90ff66"/><stop offset=".345" stop-color="#bfff5f"/><stop offset=".414" stop-color="#f2ff58"/><stop offset=".448" stop-color="#fff150"/><stop offset=".483" stop-color="#ffda45"/><stop offset=".517" stop-color="#ffc63b"/><stop offset=".552" stop-color="#ffb533"/><stop offset=".621" stop-color="#ff9825"/><stop offset=".690" stop-color="#ff811a"/><stop offset=".759" stop-color="#ff6f12"/><stop offset=".828" stop-color="#ff600a"/><stop offset=".897" stop-color="#ff5304"/><stop offset=".931" stop-color="#ff4d01"/><stop offset=".966" stop-color="#ff4800"/><stop offset="1" stop-color="#ff4300"/></linearGradient><linearGradient id="g126" gradientUnits="userSpaceOnUse" x1="1374.2" x2="1637.6" y1="0" y2="0"><stop offset="0" stop-color="#00ff81"/><stop offset=".033" stop-color="#07ff7f"/><stop offset=".067" stop-color="#19ff7d"/><stop offset=".133" stop-color="#3eff78"/><stop offset=".200" stop-color="#67ff73"/><stop offset=".233" stop-color="#7cff70"/><stop offset=".267" stop-color="#93ff6d"/><stop offset=".333" stop-color="#c2ff66"/><stop offset=".400" stop-color="#f6ff60"/><stop offset=".433" stop-color="#ffed55"/><stop offset=".467" stop-color="#ffd64a"/><stop offset=".500" stop-color="#ffc340"/><stop offset=".533" stop-color="#ffb138"/><stop offset=".567" stop-color="#ffa230"/><stop offset=".600" stop-color="#ff9529"/><stop offset=".633" stop-color="#ff8923"/><stop offset=".667" stop-color="#ff7f1e"/><stop offset=".733" stop-color="#ff6c15"/><stop offset=".800" stop-color="#ff5d0d"/><stop offset=".867" stop-color="#ff5107"/><stop offset=".933" stop-color="#ff4601"/><stop offset="1" stop-color="#ff3c00"/></linearGradient><linearGradient id="g127" gradientUnits="userSpaceOnUse" x1="1372.7" x2="1644.2" y1="0" y2="0"><stop offset="0" stop-color="#00ff88"/><stop offset=".032" stop-color="#07ff86"/><stop offset=".065" stop-color="#19ff83"/><stop offset=".129" stop-color="#3fff7f"/><stop offset=".194" stop-color="#68ff7a"/><stop offset=".258" stop-color="#95ff74"/><stop offset=".323" stop-color="#c6ff6e"/><stop offset=".387" stop-color="#fbff67"/><stop offset=".419" stop-color="#ffe95b"/><stop offset=".452" stop-color="#ffd24f"/><stop offset=".484" stop-color="#ffbf45"/><stop offset=".516" stop-color="#ffae3c"/><stop offset=".548" stop-color="#ff9f34"/><stop offset=".581" stop-color="#ff922d"/><stop offset=".613" stop-color="#ff8627"/><stop offset=".645" stop-color="#ff7c22"/><stop offset=".677" stop-color="#ff721d"/><stop offset=".710" stop-color="#ff6a18"/><stop offset=".774" stop-color="#ff5b10"/><stop offset=".839" stop-color="#ff4e09"/><stop offset=".903" stop-color="#ff4404"/><stop offset=".935" stop-color="#ff3f01"/><stop offset=".968" stop-color="#ff3a00"/><stop offset="1" stop-color="#ff3600"/></linearGradient><linearGradient id="g128" gradientUnits="userSpaceOnUse" x1="1371.3" x2="1650.8" y1="0" y2="0"><stop offset="0" stop-color="#00ff8f"/><stop offset=".031" stop-color="#07ff8c"/><stop offset=".062" stop-color="#19ff8a"/><stop offset=".125" stop-color="#40ff86"/><stop offset=".188" stop-color="#6aff81"/><stop offset=".219" stop-color="#80ff7e"/><stop offset=".250" stop-color="#98ff7b"/><stop offset=".312" stop-color="#c9ff76"/><stop offset=".375" stop-color="#fffe6f"/><stop offset=".406" stop-color="#ffe460"/><stop offset=".438" stop-color="#ffce54"/><stop offset=".469" stop-color="#ffbb4a"/><stop offset=".500" stop-color="#ffaa40"/><stop offset=".562" stop-color="#ff8f31"/><stop offset=".594" stop-color="#ff832b"/><stop offset=".625" stop-color="#ff7925"/><stop offset=".688" stop-color="#ff671b"/><stop offset=".750" stop-color="#ff5913"/><stop offset=".812" stop-color="#ff4c0c"/><stop offset=".875" stop-color="#ff4206"/><stop offset=".938" stop-color="#ff3801"/><stop offset="1" stop-color="#ff3000"/></linearGradient><linearGradient id="g129" gradientUnits="userSpaceOnUse" x1="1369.8" x2="1657.4" y1="0" y2="0"><stop offset="0" stop-color="#00ff95"/><stop offset=".031" stop-color="#08ff93"/><stop offset=".062" stop-color="#1bff91"/><stop offset=".125" stop-color="#44ff8d"/><stop offset=".156" stop-color="#59ff8a"/><stop offset=".188" stop-color="#70ff88"/><stop offset=".250" stop-color="#a0ff83"/><stop offset=".312" stop-color="#d5ff7d"/><stop offset=".344" stop-color="#f2ff7a"/><stop offset=".375" stop-color="#ffef6f"/><stop offset=".406" stop-color="#ffd761"/><stop offset=".438" stop-color="#ffc154"/><stop offset=".469" stop-color="#ffaf4a"/><stop offset=".500" stop-color="#ff9f40"/><stop offset=".562" stop-color="#ff8531"/><stop offset=".625" stop-color="#ff7025"/><stop offset=".688" stop-color="#ff5f1b"/><stop offset=".750" stop-color="#ff5113"/><stop offset=".812" stop-color="#ff460c"/><stop offset=".844" stop-color="#ff4009"/><stop offset=".875" stop-color="#ff3c06"/><stop offset=".938" stop-color="#ff3301"/><stop offset="1" stop-color="#ff2b00"/></linearGradient><linearGradient id="g130" gradientUnits="userSpaceOnUse" x1="1368.3" x2="1664.1" y1="0" y2="0"><stop offset="0" stop-color="#00ff9d"/><stop offset=".030" stop-color="#08ff9b"/><stop offset=".061" stop-color="#1bff99"/><stop offset=".121" stop-color="#45ff94"/><stop offset=".182" stop-color="#72ff90"/><stop offset=".242" stop-color="#a3ff8b"/><stop offset=".273" stop-color="#bdff88"/><stop offset=".303" stop-color="#d9ff85"/><stop offset=".333" stop-color="#f6ff82"/><stop offset=".364" stop-color="#ffeb75"/><stop offset=".394" stop-color="#ffd266"/><stop offset=".424" stop-color="#ffbe59"/><stop offset=".455" stop-color="#ffac4e"/><stop offset=".485" stop-color="#ff9c45"/><stop offset=".515" stop-color="#ff8e3d"/><stop offset=".545" stop-color="#ff8235"/><stop offset=".576" stop-color="#ff772f"/><stop offset=".606" stop-color="#ff6e29"/><stop offset=".667" stop-color="#ff5d1e"/><stop offset=".727" stop-color="#ff4f16"/><stop offset=".788" stop-color="#ff440f"/><stop offset=".818" stop-color="#ff3e0c"/><stop offset=".848" stop-color="#ff3a09"/><stop offset=".909" stop-color="#ff3104"/><stop offset=".939" stop-color="#ff2d01"/><stop offset=".970" stop-color="#ff2a00"/><stop offset="1" stop-color="#ff2600"/></linearGradient><linearGradient id="g131" gradientUnits="userSpaceOnUse" x1="1366.9" x2="1670.7" y1="0" y2="0"><stop offset="0" stop-color="#00ffa4"/><stop offset=".029" stop-color="#08ffa2"/><stop offset=".059" stop-color="#1cffa0"/><stop offset=".088" stop-color="#30ff9e"/><stop offset=".118" stop-color="#46ff9c"/><stop offset=".147" stop-color="#5cff9a"/><stop offset=".176" stop-color="#74ff98"/><stop offset=".206" stop-color="#8cff96"/><stop offset=".235" stop-color="#a6ff93"/><stop offset=".294" stop-color="#ddff8e"/><stop offset=".324" stop-color="#fbff8b"/><stop offset=".353" stop-color="#ffe67b"/><stop offset=".382" stop-color="#ffce6c"/><stop offset=".412" stop-color="#ffba5e"/><stop offset=".441" stop-color="#ffa853"/><stop offset=".471" stop-color="#ff9949"/><stop offset=".500" stop-color="#ff8b41"/><stop offset=".529" stop-color="#ff7f39"/><stop offset=".588" stop-color="#ff6b2c"/><stop offset=".618" stop-color="#ff6227"/><stop offset=".647" stop-color="#ff5b22"/><stop offset=".706" stop-color="#ff4d19"/><stop offset=".765" stop-color="#ff4212"/><stop offset=".794" stop-color="#ff3c0e"/><stop offset=".824" stop-color="#ff380b"/><stop offset=".882" stop-color="#ff2f06"/><stop offset=".941" stop-color="#ff2801"/><stop offset="1" stop-color="#ff2100"/></linearGradient><linearGradient id="g132" gradientUnits="userSpaceOnUse" x1="1365.4" x2="1677.3" y1="0" y2="0"><stop offset="0" stop-color="#00ffac"/><stop offset=".029" stop-color="#08ffaa"/><stop offset=".057" stop-color="#1cffa8"/><stop offset=".114" stop-color="#47ffa4"/><stop offset=".171" stop-color="#76ffa0"/><stop offset=".229" stop-color="#a9ff9c"/><stop offset=".286" stop-color="#e2ff97"/><stop offset=".314" stop-color="#fffe94"/><stop offset=".343" stop-color="#ffe281"/><stop offset=".371" stop-color="#ffca71"/><stop offset=".400" stop-color="#ffb664"/><stop offset=".429" stop-color="#ffa458"/><stop offset=".457" stop-color="#ff954e"/><stop offset=".514" stop-color="#ff7c3d"/><stop offset=".571" stop-color="#ff6830"/><stop offset=".629" stop-color="#ff5825"/><stop offset=".686" stop-color="#ff4b1c"/><stop offset=".743" stop-color="#ff3f14"/><stop offset=".800" stop-color="#ff360e"/><stop offset=".857" stop-color="#ff2d08"/><stop offset=".914" stop-color="#ff2603"/><stop offset=".971" stop-color="#ff2000"/><stop offset="1" stop-color="#ff1d00"/></linearGradient><linearGradient id="g133" gradientUnits="userSpaceOnUse" x1="1364.0" x2="1684.0" y1="0" y2="0"><stop offset="0" stop-color="#00ffb4"/><stop offset=".028" stop-color="#08ffb2"/><stop offset=".056" stop-color="#1dffb0"/><stop offset=".111" stop-color="#48ffad"/><stop offset=".167" stop-color="#78ffa9"/><stop offset=".194" stop-color="#91ffa7"/><stop offset=".222" stop-color="#acffa5"/><stop offset=".250" stop-color="#c8ffa3"/><stop offset=".278" stop-color="#e6ffa1"/><stop offset=".306" stop-color="#fff99a"/><stop offset=".333" stop-color="#ffdd87"/><stop offset=".361" stop-color="#ffc677"/><stop offset=".389" stop-color="#ffb269"/><stop offset=".417" stop-color="#ffa15d"/><stop offset=".444" stop-color="#ff9252"/><stop offset=".500" stop-color="#ff7941"/><stop offset=".556" stop-color="#ff6633"/><stop offset=".583" stop-color="#ff5d2d"/><stop offset=".611" stop-color="#ff5628"/><stop offset=".667" stop-color="#ff481f"/><stop offset=".722" stop-color="#ff3d17"/><stop offset=".778" stop-color="#ff3410"/><stop offset=".833" stop-color="#ff2c0b"/><stop offset=".889" stop-color="#ff2406"/><stop offset=".944" stop-color="#ff1e01"/><stop offset="1" stop-color="#ff1900"/></linearGradient><linearGradient id="g134" gradientUnits="userSpaceOnUse" x1="1362.5" x2="1690.6" y1="0" y2="0"><stop offset="0" stop-color="#00ffbc"/><stop offset=".027" stop-color="#08ffba"/><stop offset=".054" stop-color="#1dffb9"/><stop offset=".108" stop-color="#4affb6"/><stop offset=".135" stop-color="#61ffb4"/><stop offset=".162" stop-color="#7affb3"/><stop offset=".189" stop-color="#94ffb1"/><stop offset=".216" stop-color="#b0ffaf"/><stop offset=".243" stop-color="#ccffad"/><stop offset=".270" stop-color="#ebffab"/><stop offset=".297" stop-color="#fff4a1"/><stop offset=".324" stop-color="#ffd88d"/><stop offset=".351" stop-color="#ffc17c"/><stop offset=".378" stop-color="#ffae6e"/><stop offset=".405" stop-color="#ff9d61"/><stop offset=".432" stop-color="#ff8e57"/><stop offset=".459" stop-color="#ff814d"/><stop offset=".486" stop-color="#ff7645"/><stop offset=".514" stop-color="#ff6c3d"/><stop offset=".541" stop-color="#ff6337"/><stop offset=".595" stop-color="#ff532b"/><stop offset=".649" stop-color="#ff4622"/><stop offset=".676" stop-color="#ff401d"/><stop offset=".703" stop-color="#ff3b1a"/><stop offset=".757" stop-color="#ff3213"/><stop offset=".811" stop-color="#ff2a0d"/><stop offset=".865" stop-color="#ff2308"/><stop offset=".919" stop-color="#ff1c03"/><stop offset=".973" stop-color="#ff1700"/><stop offset="1" stop-color="#ff1400"/></linearGradient><linearGradient id="g135" gradientUnits="userSpaceOnUse" x1="1361.0" x2="1697.2" y1="0" y2="0"><stop offset="0" stop-color="#00ffc4"/><stop offset=".026" stop-color="#08ffc3"/><stop offset=".053" stop-color="#1effc2"/><stop offset=".105" stop-color="#4bffbf"/><stop offset=".132" stop-color="#63ffbe"/><stop offset=".158" stop-color="#7dffbc"/><stop offset=".184" stop-color="#97ffbb"/><stop offset=".211" stop-color="#b3ffb9"/><stop offset=".263" stop-color="#f0ffb5"/><stop offset=".289" stop-color="#ffeea8"/><stop offset=".316" stop-color="#ffd393"/><stop offset=".342" stop-color="#ffbd82"/><stop offset=".368" stop-color="#ffaa73"/><stop offset=".395" stop-color="#ff9966"/><stop offset=".421" stop-color="#ff8b5b"/><stop offset=".447" stop-color="#ff7e51"/><stop offset=".474" stop-color="#ff7349"/><stop offset=".526" stop-color="#ff603a"/><stop offset=".579" stop-color="#ff512e"/><stop offset=".632" stop-color="#ff4425"/><stop offset=".684" stop-color="#ff391c"/><stop offset=".737" stop-color="#ff3015"/><stop offset=".789" stop-color="#ff280f"/><stop offset=".842" stop-color="#ff210a"/><stop offset=".895" stop-color="#ff1b05"/><stop offset=".947" stop-color="#ff1501"/><stop offset="1" stop-color="#ff1100"/></linearGradient><linearGradient id="g136" gradientUnits="userSpaceOnUse" x1="1359.6" x2="1703.9" y1="0" y2="0"><stop offset="0" stop-color="#00ffcd"/><stop offset=".026" stop-color="#09ffcc"/><stop offset=".051" stop-color="#1effcb"/><stop offset=".103" stop-color="#4cffc9"/><stop offset=".154" stop-color="#7fffc6"/><stop offset=".179" stop-color="#9affc5"/><stop offset=".205" stop-color="#b7ffc3"/><stop offset=".231" stop-color="#d5ffc2"/><stop offset=".256" stop-color="#f5ffc0"/><stop offset=".282" stop-color="#ffe9ae"/><stop offset=".308" stop-color="#ffcf99"/><stop offset=".333" stop-color="#ffb887"/><stop offset=".359" stop-color="#ffa578"/><stop offset=".385" stop-color="#ff956b"/><stop offset=".410" stop-color="#ff875f"/><stop offset=".436" stop-color="#ff7b55"/><stop offset=".462" stop-color="#ff704d"/><stop offset=".513" stop-color="#ff5d3e"/><stop offset=".538" stop-color="#ff5537"/><stop offset=".564" stop-color="#ff4e32"/><stop offset=".615" stop-color="#ff4127"/><stop offset=".667" stop-color="#ff371f"/><stop offset=".718" stop-color="#ff2e18"/><stop offset=".769" stop-color="#ff2611"/><stop offset=".821" stop-color="#ff1f0c"/><stop offset=".872" stop-color="#ff1907"/><stop offset=".923" stop-color="#ff1403"/><stop offset=".974" stop-color="#ff0f00"/><stop offset="1" stop-color="#ff0d00"/></linearGradient><linearGradient id="g137" gradientUnits="userSpaceOnUse" x1="1358.1" x2="1710.5" y1="0" y2="0"><stop offset="0" stop-color="#00ffd7"/><stop offset=".025" stop-color="#09ffd6"/><stop offset=".050" stop-color="#1fffd5"/><stop offset=".100" stop-color="#4effd3"/><stop offset=".125" stop-color="#67ffd2"/><stop offset=".150" stop-color="#82ffd1"/><stop offset=".200" stop-color="#bbffce"/><stop offset=".225" stop-color="#daffcd"/><stop offset=".250" stop-color="#fbffcc"/><stop offset=".275" stop-color="#ffe4b5"/><stop offset=".300" stop-color="#ffca9f"/><stop offset=".325" stop-color="#ffb48d"/><stop offset=".350" stop-color="#ffa17d"/><stop offset=".375" stop-color="#ff9170"/><stop offset=".400" stop-color="#ff8364"/><stop offset=".450" stop-color="#ff6c51"/><stop offset=".475" stop-color="#ff6348"/><stop offset=".500" stop-color="#ff5a41"/><stop offset=".550" stop-color="#ff4b35"/><stop offset=".600" stop-color="#ff3f2a"/><stop offset=".650" stop-color="#ff3522"/><stop offset=".700" stop-color="#ff2c1a"/><stop offset=".750" stop-color="#ff2414"/><stop offset=".800" stop-color="#ff1d0e"/><stop offset=".850" stop-color="#ff1709"/><stop offset=".900" stop-color="#ff1205"/><stop offset=".950" stop-color="#ff0e01"/><stop offset="1" stop-color="#ff0900"/></linearGradient><linearGradient id="g138" gradientUnits="userSpaceOnUse" x1="1356.6" x2="1717.1" y1="0" y2="0"><stop offset="0" stop-color="#00ffe0"/><stop offset=".024" stop-color="#09ffe0"/><stop offset=".049" stop-color="#1fffdf"/><stop offset=".098" stop-color="#4fffdd"/><stop offset=".146" stop-color="#84ffdc"/><stop offset=".195" stop-color="#bfffda"/><stop offset=".220" stop-color="#dfffd9"/><stop offset=".244" stop-color="#fffdd6"/><stop offset=".268" stop-color="#ffdebb"/><stop offset=".293" stop-color="#ffc5a5"/><stop offset=".317" stop-color="#ffaf92"/><stop offset=".341" stop-color="#ff9d82"/><stop offset=".366" stop-color="#ff8d74"/><stop offset=".390" stop-color="#ff8068"/><stop offset=".439" stop-color="#ff6954"/><stop offset=".488" stop-color="#ff5745"/><stop offset=".537" stop-color="#ff4938"/><stop offset=".585" stop-color="#ff3c2d"/><stop offset=".634" stop-color="#ff3224"/><stop offset=".683" stop-color="#ff2a1d"/><stop offset=".732" stop-color="#ff2216"/><stop offset=".780" stop-color="#ff1c10"/><stop offset=".829" stop-color="#ff160b"/><stop offset=".878" stop-color="#ff1107"/><stop offset=".927" stop-color="#ff0c03"/><stop offset=".976" stop-color="#ff0800"/><stop offset="1" stop-color="#ff0600"/></linearGradient><linearGradient id="g139" gradientUnits="userSpaceOnUse" x1="1355.2" x2="1723.7" y1="0" y2="0"><stop offset="0" stop-color="#00ffea"/><stop offset=".024" stop-color="#0affea"/><stop offset=".049" stop-color="#21ffe9"/><stop offset=".098" stop-color="#53ffe8"/><stop offset=".146" stop-color="#8cffe7"/><stop offset=".171" stop-color="#aaffe7"/><stop offset=".195" stop-color="#caffe6"/><stop offset=".220" stop-color="#ecffe5"/><stop offset=".244" stop-color="#ffefd6"/><stop offset=".268" stop-color="#ffd1bb"/><stop offset=".293" stop-color="#ffb9a5"/><stop offset=".317" stop-color="#ffa592"/><stop offset=".341" stop-color="#ff9382"/><stop offset=".366" stop-color="#ff8474"/><stop offset=".390" stop-color="#ff7768"/><stop offset=".439" stop-color="#ff6255"/><stop offset=".463" stop-color="#ff594c"/><stop offset=".488" stop-color="#ff5045"/><stop offset=".537" stop-color="#ff4238"/><stop offset=".585" stop-color="#ff372d"/><stop offset=".634" stop-color="#ff2d24"/><stop offset=".683" stop-color="#ff251d"/><stop offset=".732" stop-color="#ff1e16"/><stop offset=".780" stop-color="#ff1710"/><stop offset=".829" stop-color="#ff120b"/><stop offset=".878" stop-color="#ff0d07"/><stop offset=".927" stop-color="#ff0903"/><stop offset=".976" stop-color="#ff0500"/><stop offset="1" stop-color="#ff0300"/></linearGradient><linearGradient id="g140" gradientUnits="userSpaceOnUse" x1="1353.7" x2="1725.0" y1="0" y2="0"><stop offset="0" stop-color="#00fff5"/><stop offset=".024" stop-color="#09fff5"/><stop offset=".048" stop-color="#21fff4"/><stop offset=".095" stop-color="#54fff4"/><stop offset=".119" stop-color="#6ffff4"/><stop offset=".143" stop-color="#8cfff4"/><stop offset=".190" stop-color="#cbfff3"/><stop offset=".214" stop-color="#edfff3"/><stop offset=".238" stop-color="#ffeee2"/><stop offset=".262" stop-color="#ffd0c6"/><stop offset=".286" stop-color="#ffb8ae"/><stop offset=".310" stop-color="#ffa49b"/><stop offset=".333" stop-color="#ff928a"/><stop offset=".357" stop-color="#ff837c"/><stop offset=".381" stop-color="#ff766f"/><stop offset=".429" stop-color="#ff615b"/><stop offset=".476" stop-color="#ff504a"/><stop offset=".524" stop-color="#ff423d"/><stop offset=".571" stop-color="#ff3632"/><stop offset=".619" stop-color="#ff2d29"/><stop offset=".667" stop-color="#ff2421"/><stop offset=".714" stop-color="#ff1d1a"/><stop offset=".762" stop-color="#ff1714"/><stop offset=".810" stop-color="#ff110f"/><stop offset=".857" stop-color="#ff0d0a"/><stop offset=".905" stop-color="#ff0806"/><stop offset=".952" stop-color="#ff0402"/><stop offset=".976" stop-color="#ff0300"/><stop offset="1" stop-color="#ff0100"/></linearGradient><linearGradient id="g141" gradientUnits="userSpaceOnUse" x1="1352.2" x2="1724.6" y1="0" y2="0"><stop offset="0" stop-color="#00feff"/><stop offset=".024" stop-color="#0afeff"/><stop offset=".048" stop-color="#22feff"/><stop offset=".071" stop-color="#3bfeff"/><stop offset=".095" stop-color="#56feff"/><stop offset=".143" stop-color="#8ffeff"/><stop offset=".190" stop-color="#d0feff"/><stop offset=".214" stop-color="#f3fdff"/><stop offset=".238" stop-color="#ffe6e8"/><stop offset=".262" stop-color="#ffc9cb"/><stop offset=".286" stop-color="#ffb2b3"/><stop offset=".310" stop-color="#ff9e9f"/><stop offset=".333" stop-color="#ff8d8e"/><stop offset=".357" stop-color="#ff7e80"/><stop offset=".381" stop-color="#ff7273"/><stop offset=".429" stop-color="#ff5d5e"/><stop offset=".476" stop-color="#ff4c4d"/><stop offset=".524" stop-color="#ff3f40"/><stop offset=".571" stop-color="#ff3334"/><stop offset=".619" stop-color="#ff2a2b"/><stop offset=".667" stop-color="#ff2223"/><stop offset=".714" stop-color="#ff1b1c"/><stop offset=".762" stop-color="#ff1516"/><stop offset=".810" stop-color="#ff0f10"/><stop offset=".857" stop-color="#ff0b0b"/><stop offset=".905" stop-color="#ff0607"/><stop offset=".952" stop-color="#ff0303"/><stop offset="1" stop-color="#ff0000"/></linearGradient><linearGradient id="g142" gradientUnits="userSpaceOnUse" x1="1350.8" x2="1723.8" y1="0" y2="0"><stop offset="0" stop-color="#00f3ff"/><stop offset=".024" stop-color="#09f3ff"/><stop offset=".048" stop-color="#21f3ff"/><stop offset=".095" stop-color="#54f2ff"/><stop offset=".119" stop-color="#6ff1ff"/><stop offset=".143" stop-color="#8cf1ff"/><stop offset=".190" stop-color="#cbf0ff"/><stop offset=".214" stop-color="#edf0ff"/><stop offset=".238" stop-color="#ffdfee"/><stop offset=".262" stop-color="#ffc3d0"/><stop offset=".286" stop-color="#ffacb8"/><stop offset=".310" stop-color="#ff98a4"/><stop offset=".333" stop-color="#ff8893"/><stop offset=".357" stop-color="#ff7a84"/><stop offset=".381" stop-color="#ff6d77"/><stop offset=".405" stop-color="#ff626b"/><stop offset=".429" stop-color="#ff5961"/><stop offset=".452" stop-color="#ff5058"/><stop offset=".476" stop-color="#ff4950"/><stop offset=".524" stop-color="#ff3b42"/><stop offset=".571" stop-color="#ff3037"/><stop offset=".619" stop-color="#ff272d"/><stop offset=".667" stop-color="#ff1f25"/><stop offset=".714" stop-color="#ff181e"/><stop offset=".762" stop-color="#ff1317"/><stop offset=".810" stop-color="#ff0d12"/><stop offset=".857" stop-color="#ff090d"/><stop offset=".905" stop-color="#ff0509"/><stop offset=".952" stop-color="#ff0105"/><stop offset="1" stop-color="#ff0001"/></linearGradient><linearGradient id="g143" gradientUnits="userSpaceOnUse" x1="1349.3" x2="1717.8" y1="0" y2="0"><stop offset="0" stop-color="#00e9ff"/><stop offset=".024" stop-color="#0ae8ff"/><stop offset=".049" stop-color="#21e8ff"/><stop offset=".073" stop-color="#39e7ff"/><stop offset=".098" stop-color="#53e6ff"/><stop offset=".122" stop-color="#6ee6ff"/><stop offset=".146" stop-color="#8be5ff"/><stop offset=".171" stop-color="#a9e4ff"/><stop offset=".195" stop-color="#c9e3ff"/><stop offset=".220" stop-color="#ebe2ff"/><stop offset=".244" stop-color="#ffd5f1"/><stop offset=".268" stop-color="#ffbad3"/><stop offset=".293" stop-color="#ffa3ba"/><stop offset=".317" stop-color="#ff91a6"/><stop offset=".341" stop-color="#ff8194"/><stop offset=".366" stop-color="#ff7385"/><stop offset=".390" stop-color="#ff6778"/><stop offset=".439" stop-color="#ff5363"/><stop offset=".488" stop-color="#ff4452"/><stop offset=".512" stop-color="#ff3d4a"/><stop offset=".537" stop-color="#ff3744"/><stop offset=".561" stop-color="#ff313d"/><stop offset=".585" stop-color="#ff2c38"/><stop offset=".634" stop-color="#ff232e"/><stop offset=".683" stop-color="#ff1c26"/><stop offset=".732" stop-color="#ff151f"/><stop offset=".780" stop-color="#ff1018"/><stop offset=".829" stop-color="#ff0a13"/><stop offset=".878" stop-color="#ff060e"/><stop offset=".927" stop-color="#ff0209"/><stop offset=".951" stop-color="#ff0007"/><stop offset=".976" stop-color="#ff0005"/><stop offset="1" stop-color="#ff0004"/></linearGradient><linearGradient id="g144" gradientUnits="userSpaceOnUse" x1="1347.9" x2="1708.2" y1="0" y2="0"><stop offset="0" stop-color="#00dfff"/><stop offset=".024" stop-color="#09deff"/><stop offset=".049" stop-color="#1fddff"/><stop offset=".098" stop-color="#4fdcff"/><stop offset=".146" stop-color="#84daff"/><stop offset=".171" stop-color="#a0d9ff"/><stop offset=".195" stop-color="#bed7ff"/><stop offset=".244" stop-color="#ffd5ff"/><stop offset=".268" stop-color="#ffbae0"/><stop offset=".293" stop-color="#ffa3c6"/><stop offset=".317" stop-color="#ff91b1"/><stop offset=".341" stop-color="#ff819e"/><stop offset=".366" stop-color="#ff738f"/><stop offset=".390" stop-color="#ff6781"/><stop offset=".439" stop-color="#ff536a"/><stop offset=".488" stop-color="#ff4458"/><stop offset=".537" stop-color="#ff374a"/><stop offset=".585" stop-color="#ff2c3d"/><stop offset=".634" stop-color="#ff2333"/><stop offset=".683" stop-color="#ff1c2b"/><stop offset=".732" stop-color="#ff1523"/><stop offset=".780" stop-color="#ff0f1c"/><stop offset=".829" stop-color="#ff0a17"/><stop offset=".878" stop-color="#ff0611"/><stop offset=".927" stop-color="#ff020d"/><stop offset=".951" stop-color="#ff000b"/><stop offset=".976" stop-color="#ff0009"/><stop offset="1" stop-color="#ff0007"/></linearGradient><linearGradient id="g145" gradientUnits="userSpaceOnUse" x1="1346.4" x2="1698.7" y1="0" y2="0"><stop offset="0" stop-color="#00d5ff"/><stop offset=".025" stop-color="#09d4ff"/><stop offset=".050" stop-color="#1fd3ff"/><stop offset=".075" stop-color="#35d2ff"/><stop offset=".100" stop-color="#4dd1ff"/><stop offset=".150" stop-color="#81cfff"/><stop offset=".200" stop-color="#baccff"/><stop offset=".225" stop-color="#d9cbff"/><stop offset=".250" stop-color="#fac9ff"/><stop offset=".275" stop-color="#ffb3e5"/><stop offset=".300" stop-color="#ff9dcb"/><stop offset=".325" stop-color="#ff8bb5"/><stop offset=".350" stop-color="#ff7ca2"/><stop offset=".375" stop-color="#ff6e92"/><stop offset=".400" stop-color="#ff6385"/><stop offset=".425" stop-color="#ff5878"/><stop offset=".450" stop-color="#ff4f6d"/><stop offset=".500" stop-color="#ff405b"/><stop offset=".550" stop-color="#ff344c"/><stop offset=".600" stop-color="#ff2940"/><stop offset=".650" stop-color="#ff2135"/><stop offset=".700" stop-color="#ff192d"/><stop offset=".750" stop-color="#ff1325"/><stop offset=".800" stop-color="#ff0d1e"/><stop offset=".850" stop-color="#ff0818"/><stop offset=".900" stop-color="#ff0413"/><stop offset=".950" stop-color="#ff000e"/><stop offset="1" stop-color="#ff000a"/></linearGradient><linearGradient id="g146" gradientUnits="userSpaceOnUse" x1="1344.9" x2="1689.1" y1="0" y2="0"><stop offset="0" stop-color="#00ccff"/><stop offset=".026" stop-color="#09cbff"/><stop offset=".051" stop-color="#1ecaff"/><stop offset=".103" stop-color="#4cc7ff"/><stop offset=".154" stop-color="#7fc4ff"/><stop offset=".205" stop-color="#b6c1ff"/><stop offset=".231" stop-color="#d4bfff"/><stop offset=".256" stop-color="#f4beff"/><stop offset=".282" stop-color="#ffacea"/><stop offset=".308" stop-color="#ff97d0"/><stop offset=".333" stop-color="#ff86ba"/><stop offset=".359" stop-color="#ff76a7"/><stop offset=".385" stop-color="#ff6996"/><stop offset=".410" stop-color="#ff5e88"/><stop offset=".462" stop-color="#ff4b71"/><stop offset=".513" stop-color="#ff3d5e"/><stop offset=".564" stop-color="#ff304f"/><stop offset=".615" stop-color="#ff2642"/><stop offset=".667" stop-color="#ff1e38"/><stop offset=".718" stop-color="#ff172f"/><stop offset=".769" stop-color="#ff1027"/><stop offset=".821" stop-color="#ff0b20"/><stop offset=".872" stop-color="#ff061a"/><stop offset=".923" stop-color="#ff0215"/><stop offset=".949" stop-color="#ff0012"/><stop offset=".974" stop-color="#ff0010"/><stop offset="1" stop-color="#ff000e"/></linearGradient><linearGradient id="g147" gradientUnits="userSpaceOnUse" x1="1343.5" x2="1679.6" y1="0" y2="0"><stop offset="0" stop-color="#00c3ff"/><stop offset=".026" stop-color="#08c2ff"/><stop offset=".053" stop-color="#1ec0ff"/><stop offset=".105" stop-color="#4bbdff"/><stop offset=".158" stop-color="#7cbaff"/><stop offset=".211" stop-color="#b3b7ff"/><stop offset=".237" stop-color="#d0b5ff"/><stop offset=".263" stop-color="#efb3ff"/><stop offset=".289" stop-color="#ffa6f0"/><stop offset=".316" stop-color="#ff91d5"/><stop offset=".342" stop-color="#ff80be"/><stop offset=".368" stop-color="#ff71ab"/><stop offset=".395" stop-color="#ff659a"/><stop offset=".421" stop-color="#ff5a8c"/><stop offset=".447" stop-color="#ff507f"/><stop offset=".474" stop-color="#ff4774"/><stop offset=".526" stop-color="#ff3961"/><stop offset=".579" stop-color="#ff2d51"/><stop offset=".632" stop-color="#ff2345"/><stop offset=".684" stop-color="#ff1b3a"/><stop offset=".737" stop-color="#ff1431"/><stop offset=".789" stop-color="#ff0e29"/><stop offset=".842" stop-color="#ff0922"/><stop offset=".895" stop-color="#ff041c"/><stop offset=".947" stop-color="#ff0016"/><stop offset="1" stop-color="#ff0011"/></linearGradient><linearGradient id="g148" gradientUnits="userSpaceOnUse" x1="1342.0" x2="1670.0" y1="0" y2="0"><stop offset="0" stop-color="#00bbff"/><stop offset=".027" stop-color="#08b9ff"/><stop offset=".054" stop-color="#1db8ff"/><stop offset=".108" stop-color="#49b4ff"/><stop offset=".162" stop-color="#7ab1ff"/><stop offset=".216" stop-color="#afadff"/><stop offset=".270" stop-color="#eaa8ff"/><stop offset=".297" stop-color="#ff9ff5"/><stop offset=".324" stop-color="#ff8bd9"/><stop offset=".351" stop-color="#ff7ac2"/><stop offset=".378" stop-color="#ff6caf"/><stop offset=".405" stop-color="#ff609e"/><stop offset=".432" stop-color="#ff558f"/><stop offset=".459" stop-color="#ff4c82"/><stop offset=".486" stop-color="#ff4377"/><stop offset=".541" stop-color="#ff3564"/><stop offset=".568" stop-color="#ff2f5b"/><stop offset=".595" stop-color="#ff2a54"/><stop offset=".649" stop-color="#ff2147"/><stop offset=".676" stop-color="#ff1c41"/><stop offset=".703" stop-color="#ff193c"/><stop offset=".757" stop-color="#ff1233"/><stop offset=".784" stop-color="#ff0f2e"/><stop offset=".811" stop-color="#ff0c2b"/><stop offset=".865" stop-color="#ff0724"/><stop offset=".919" stop-color="#ff021d"/><stop offset=".946" stop-color="#ff001a"/><stop offset=".973" stop-color="#ff0018"/><stop offset="1" stop-color="#ff0015"/></linearGradient><linearGradient id="g149" gradientUnits="userSpaceOnUse" x1="1340.5" x2="1660.5" y1="0" y2="0"><stop offset="0" stop-color="#00b2ff"/><stop offset=".028" stop-color="#08b1ff"/><stop offset=".056" stop-color="#1dafff"/><stop offset=".111" stop-color="#48abff"/><stop offset=".139" stop-color="#5fa9ff"/><stop offset=".167" stop-color="#78a7ff"/><stop offset=".194" stop-color="#91a5ff"/><stop offset=".222" stop-color="#aca3ff"/><stop offset=".278" stop-color="#e59eff"/><stop offset=".306" stop-color="#ff99fa"/><stop offset=".333" stop-color="#ff85de"/><stop offset=".361" stop-color="#ff75c7"/><stop offset=".389" stop-color="#ff67b3"/><stop offset=".417" stop-color="#ff5ba2"/><stop offset=".444" stop-color="#ff5193"/><stop offset=".500" stop-color="#ff407a"/><stop offset=".528" stop-color="#ff3870"/><stop offset=".556" stop-color="#ff3266"/><stop offset=".611" stop-color="#ff2757"/><stop offset=".667" stop-color="#ff1e49"/><stop offset=".722" stop-color="#ff163e"/><stop offset=".778" stop-color="#ff0f35"/><stop offset=".833" stop-color="#ff092c"/><stop offset=".889" stop-color="#ff0425"/><stop offset=".944" stop-color="#ff001f"/><stop offset="1" stop-color="#ff0019"/></linearGradient><linearGradient id="g150" gradientUnits="userSpaceOnUse" x1="1339.1" x2="1650.9" y1="0" y2="0"><stop offset="0" stop-color="#00aaff"/><stop offset=".029" stop-color="#08a9ff"/><stop offset=".057" stop-color="#1ca7ff"/><stop offset=".114" stop-color="#47a3ff"/><stop offset=".171" stop-color="#759fff"/><stop offset=".229" stop-color="#a89aff"/><stop offset=".286" stop-color="#e195ff"/><stop offset=".314" stop-color="#ff92ff"/><stop offset=".343" stop-color="#ff7fe3"/><stop offset=".371" stop-color="#ff6fcb"/><stop offset=".400" stop-color="#ff62b7"/><stop offset=".429" stop-color="#ff56a5"/><stop offset=".457" stop-color="#ff4c96"/><stop offset=".486" stop-color="#ff4389"/><stop offset=".514" stop-color="#ff3c7d"/><stop offset=".571" stop-color="#ff2e69"/><stop offset=".629" stop-color="#ff2459"/><stop offset=".686" stop-color="#ff1b4c"/><stop offset=".743" stop-color="#ff1340"/><stop offset=".800" stop-color="#ff0d37"/><stop offset=".857" stop-color="#ff072e"/><stop offset=".914" stop-color="#ff0227"/><stop offset=".943" stop-color="#ff0024"/><stop offset=".971" stop-color="#ff0021"/><stop offset="1" stop-color="#ff001e"/></linearGradient><linearGradient id="g151" gradientUnits="userSpaceOnUse" x1="1337.6" x2="1641.3" y1="0" y2="0"><stop offset="0" stop-color="#00a3ff"/><stop offset=".029" stop-color="#08a1ff"/><stop offset=".059" stop-color="#1c9fff"/><stop offset=".088" stop-color="#309dff"/><stop offset=".118" stop-color="#469bff"/><stop offset=".176" stop-color="#7396ff"/><stop offset=".235" stop-color="#a591ff"/><stop offset=".294" stop-color="#dc8cff"/><stop offset=".324" stop-color="#fa89ff"/><stop offset=".353" stop-color="#ff79e7"/><stop offset=".382" stop-color="#ff6acf"/><stop offset=".412" stop-color="#ff5dbb"/><stop offset=".441" stop-color="#ff52a9"/><stop offset=".471" stop-color="#ff489a"/><stop offset=".500" stop-color="#ff3f8c"/><stop offset=".529" stop-color="#ff3880"/><stop offset=".559" stop-color="#ff3175"/><stop offset=".588" stop-color="#ff2b6c"/><stop offset=".647" stop-color="#ff205b"/><stop offset=".706" stop-color="#ff184e"/><stop offset=".765" stop-color="#ff1042"/><stop offset=".824" stop-color="#ff0a39"/><stop offset=".882" stop-color="#ff0530"/><stop offset=".941" stop-color="#ff0029"/><stop offset="1" stop-color="#ff0022"/></linearGradient><linearGradient id="g152" gradientUnits="userSpaceOnUse" x1="1336.2" x2="1631.8" y1="0" y2="0"><stop offset="0" stop-color="#009bff"/><stop offset=".030" stop-color="#0899ff"/><stop offset=".061" stop-color="#1b97ff"/><stop offset=".121" stop-color="#4593ff"/><stop offset=".182" stop-color="#728eff"/><stop offset=".242" stop-color="#a389ff"/><stop offset=".303" stop-color="#d883ff"/><stop offset=".333" stop-color="#f580ff"/><stop offset=".364" stop-color="#ff73ec"/><stop offset=".394" stop-color="#ff64d3"/><stop offset=".424" stop-color="#ff58bf"/><stop offset=".455" stop-color="#ff4dad"/><stop offset=".485" stop-color="#ff439d"/><stop offset=".515" stop-color="#ff3b8f"/><stop offset=".545" stop-color="#ff3483"/><stop offset=".576" stop-color="#ff2d78"/><stop offset=".606" stop-color="#ff276f"/><stop offset=".667" stop-color="#ff1d5e"/><stop offset=".727" stop-color="#ff1550"/><stop offset=".788" stop-color="#ff0e44"/><stop offset=".848" stop-color="#ff083a"/><stop offset=".909" stop-color="#ff0232"/><stop offset=".939" stop-color="#ff002e"/><stop offset=".970" stop-color="#ff002a"/><stop offset="1" stop-color="#ff0027"/></linearGradient><linearGradient id="g153" gradientUnits="userSpaceOnUse" x1="1334.7" x2="1622.2" y1="0" y2="0"><stop offset="0" stop-color="#0094ff"/><stop offset=".031" stop-color="#0892ff"/><stop offset=".062" stop-color="#1b90ff"/><stop offset=".125" stop-color="#448bff"/><stop offset=".156" stop-color="#5989ff"/><stop offset=".188" stop-color="#7086ff"/><stop offset=".219" stop-color="#8783ff"/><stop offset=".250" stop-color="#a081ff"/><stop offset=".312" stop-color="#d57aff"/><stop offset=".344" stop-color="#f177ff"/><stop offset=".375" stop-color="#ff6df0"/><stop offset=".406" stop-color="#ff5fd7"/><stop offset=".438" stop-color="#ff53c2"/><stop offset=".469" stop-color="#ff48b0"/><stop offset=".500" stop-color="#ff3fa0"/><stop offset=".531" stop-color="#ff3792"/><stop offset=".562" stop-color="#ff3086"/><stop offset=".594" stop-color="#ff297b"/><stop offset=".625" stop-color="#ff2471"/><stop offset=".688" stop-color="#ff1a60"/><stop offset=".750" stop-color="#ff1252"/><stop offset=".812" stop-color="#ff0b46"/><stop offset=".875" stop-color="#ff053c"/><stop offset=".938" stop-color="#ff0034"/><stop offset="1" stop-color="#ff002c"/></linearGradient><linearGradient id="g154" gradientUnits="userSpaceOnUse" x1="1333.2" x2="1612.7" y1="0" y2="0"><stop offset="0" stop-color="#008dff"/><stop offset=".031" stop-color="#078bff"/><stop offset=".062" stop-color="#1989ff"/><stop offset=".125" stop-color="#4084ff"/><stop offset=".188" stop-color="#6a7fff"/><stop offset=".250" stop-color="#977aff"/><stop offset=".281" stop-color="#af77ff"/><stop offset=".312" stop-color="#c973ff"/><stop offset=".344" stop-color="#e370ff"/><stop offset=".375" stop-color="#ff6dff"/><stop offset=".406" stop-color="#ff5fe5"/><stop offset=".438" stop-color="#ff52cf"/><stop offset=".469" stop-color="#ff48bc"/><stop offset=".500" stop-color="#ff3fab"/><stop offset=".562" stop-color="#ff3090"/><stop offset=".594" stop-color="#ff2984"/><stop offset=".625" stop-color="#ff247a"/><stop offset=".656" stop-color="#ff1e71"/><stop offset=".688" stop-color="#ff1a68"/><stop offset=".750" stop-color="#ff1259"/><stop offset=".812" stop-color="#ff0b4d"/><stop offset=".875" stop-color="#ff0542"/><stop offset=".938" stop-color="#ff0039"/><stop offset="1" stop-color="#ff0031"/></linearGradient><linearGradient id="g155" gradientUnits="userSpaceOnUse" x1="1331.8" x2="1603.1" y1="0" y2="0"><stop offset="0" stop-color="#0087ff"/><stop offset=".032" stop-color="#0785ff"/><stop offset=".065" stop-color="#1982ff"/><stop offset=".129" stop-color="#3f7dff"/><stop offset=".194" stop-color="#6878ff"/><stop offset=".258" stop-color="#9572ff"/><stop offset=".290" stop-color="#ac6fff"/><stop offset=".323" stop-color="#c56cff"/><stop offset=".387" stop-color="#fa65ff"/><stop offset=".419" stop-color="#ff59ea"/><stop offset=".452" stop-color="#ff4dd3"/><stop offset=".484" stop-color="#ff43c0"/><stop offset=".516" stop-color="#ff3aaf"/><stop offset=".548" stop-color="#ff33a0"/><stop offset=".581" stop-color="#ff2c93"/><stop offset=".613" stop-color="#ff2687"/><stop offset=".645" stop-color="#ff207d"/><stop offset=".677" stop-color="#ff1b73"/><stop offset=".710" stop-color="#ff176b"/><stop offset=".774" stop-color="#ff0f5c"/><stop offset=".839" stop-color="#ff084f"/><stop offset=".903" stop-color="#ff0344"/><stop offset=".935" stop-color="#ff0040"/><stop offset=".968" stop-color="#ff003b"/><stop offset="1" stop-color="#ff0037"/></linearGradient><linearGradient id="g156" gradientUnits="userSpaceOnUse" x1="1330.3" x2="1593.6" y1="0" y2="0"><stop offset="0" stop-color="#0080ff"/><stop offset=".033" stop-color="#077eff"/><stop offset=".067" stop-color="#197cff"/><stop offset=".133" stop-color="#3e76ff"/><stop offset=".200" stop-color="#6771ff"/><stop offset=".267" stop-color="#926bff"/><stop offset=".333" stop-color="#c264ff"/><stop offset=".367" stop-color="#db61ff"/><stop offset=".400" stop-color="#f65dff"/><stop offset=".433" stop-color="#ff53ee"/><stop offset=".467" stop-color="#ff48d7"/><stop offset=".500" stop-color="#ff3ec3"/><stop offset=".533" stop-color="#ff36b2"/><stop offset=".567" stop-color="#ff2ea3"/><stop offset=".600" stop-color="#ff2896"/><stop offset=".667" stop-color="#ff1d7f"/><stop offset=".733" stop-color="#ff136d"/><stop offset=".800" stop-color="#ff0c5e"/><stop offset=".867" stop-color="#ff0551"/><stop offset=".933" stop-color="#ff0046"/><stop offset="1" stop-color="#ff003d"/></linearGradient><linearGradient id="g157" gradientUnits="userSpaceOnUse" x1="1328.8" x2="1584.0" y1="0" y2="0"><stop offset="0" stop-color="#007aff"/><stop offset=".034" stop-color="#0778ff"/><stop offset=".069" stop-color="#1875ff"/><stop offset=".138" stop-color="#3d70ff"/><stop offset=".207" stop-color="#656aff"/><stop offset=".276" stop-color="#9064ff"/><stop offset=".345" stop-color="#bf5dff"/><stop offset=".414" stop-color="#f156ff"/><stop offset=".448" stop-color="#ff4ef2"/><stop offset=".483" stop-color="#ff43db"/><stop offset=".517" stop-color="#ff3ac7"/><stop offset=".552" stop-color="#ff31b6"/><stop offset=".586" stop-color="#ff2aa6"/><stop offset=".621" stop-color="#ff2499"/><stop offset=".690" stop-color="#ff1982"/><stop offset=".724" stop-color="#ff1478"/><stop offset=".759" stop-color="#ff1070"/><stop offset=".828" stop-color="#ff0960"/><stop offset=".897" stop-color="#ff0353"/><stop offset=".931" stop-color="#ff004e"/><stop offset=".966" stop-color="#ff0048"/><stop offset="1" stop-color="#ff0043"/></linearGradient><linearGradient id="g158" gradientUnits="userSpaceOnUse" x1="1327.4" x2="1574.5" y1="0" y2="0"><stop offset="0" stop-color="#0074ff"/><stop offset=".036" stop-color="#0772ff"/><stop offset=".071" stop-color="#186fff"/><stop offset=".143" stop-color="#3c6aff"/><stop offset=".214" stop-color="#6464ff"/><stop offset=".250" stop-color="#7861ff"/><stop offset=".286" stop-color="#8e5dff"/><stop offset=".321" stop-color="#a45aff"/><stop offset=".357" stop-color="#bc56ff"/><stop offset=".393" stop-color="#d453ff"/><stop offset=".429" stop-color="#ee4fff"/><stop offset=".464" stop-color="#ff48f6"/><stop offset=".500" stop-color="#ff3edf"/><stop offset=".536" stop-color="#ff35cb"/><stop offset=".571" stop-color="#ff2db9"/><stop offset=".643" stop-color="#ff209c"/><stop offset=".714" stop-color="#ff1585"/><stop offset=".786" stop-color="#ff0d72"/><stop offset=".857" stop-color="#ff0662"/><stop offset=".929" stop-color="#ff0055"/><stop offset="1" stop-color="#ff004a"/></linearGradient><linearGradient id="g159" gradientUnits="userSpaceOnUse" x1="1325.9" x2="1564.9" y1="0" y2="0"><stop offset="0" stop-color="#006eff"/><stop offset=".037" stop-color="#076cff"/><stop offset=".074" stop-color="#1869ff"/><stop offset=".111" stop-color="#2966ff"/><stop offset=".148" stop-color="#3c63ff"/><stop offset=".222" stop-color="#625dff"/><stop offset=".296" stop-color="#8c57ff"/><stop offset=".370" stop-color="#b950ff"/><stop offset=".444" stop-color="#ea48ff"/><stop offset=".481" stop-color="#ff43fa"/><stop offset=".519" stop-color="#ff39e2"/><stop offset=".556" stop-color="#ff30ce"/><stop offset=".593" stop-color="#ff28bc"/><stop offset=".667" stop-color="#ff1c9f"/><stop offset=".704" stop-color="#ff1792"/><stop offset=".741" stop-color="#ff1287"/><stop offset=".815" stop-color="#ff0a74"/><stop offset=".889" stop-color="#ff0365"/><stop offset=".926" stop-color="#ff005e"/><stop offset=".963" stop-color="#ff0057"/><stop offset="1" stop-color="#ff0051"/></linearGradient><linearGradient id="g160" gradientUnits="userSpaceOnUse" x1="1324.5" x2="1555.3" y1="0" y2="0"><stop offset="0" stop-color="#0069ff"/><stop offset=".038" stop-color="#0766ff"/><stop offset=".077" stop-color="#1863ff"/><stop offset=".154" stop-color="#3b5dff"/><stop offset=".231" stop-color="#6157ff"/><stop offset=".308" stop-color="#8a51ff"/><stop offset=".385" stop-color="#b64aff"/><stop offset=".462" stop-color="#e642ff"/><stop offset=".500" stop-color="#ff3dfe"/><stop offset=".538" stop-color="#ff34e6"/><stop offset=".577" stop-color="#ff2bd1"/><stop offset=".615" stop-color="#ff24bf"/><stop offset=".692" stop-color="#ff18a2"/><stop offset=".731" stop-color="#ff1395"/><stop offset=".769" stop-color="#ff0e8a"/><stop offset=".846" stop-color="#ff0777"/><stop offset=".885" stop-color="#ff036e"/><stop offset=".923" stop-color="#ff0067"/><stop offset="1" stop-color="#ff0059"/></linearGradient><linearGradient id="g161" gradientUnits="userSpaceOnUse" x1="1323.0" x2="1545.8" y1="0" y2="0"><stop offset="0" stop-color="#0063ff"/><stop offset=".040" stop-color="#0760ff"/><stop offset=".080" stop-color="#175eff"/><stop offset=".160" stop-color="#3a58ff"/><stop offset=".240" stop-color="#6051ff"/><stop offset=".320" stop-color="#884bff"/><stop offset=".360" stop-color="#9d47ff"/><stop offset=".400" stop-color="#b443ff"/><stop offset=".480" stop-color="#e33bff"/><stop offset=".520" stop-color="#fc37ff"/><stop offset=".560" stop-color="#ff2fea"/><stop offset=".600" stop-color="#ff27d5"/><stop offset=".640" stop-color="#ff20c2"/><stop offset=".680" stop-color="#ff19b2"/><stop offset=".720" stop-color="#ff14a4"/><stop offset=".800" stop-color="#ff0b8c"/><stop offset=".880" stop-color="#ff0379"/><stop offset=".920" stop-color="#ff0070"/><stop offset=".960" stop-color="#ff0069"/><stop offset="1" stop-color="#ff0062"/></linearGradient><linearGradient id="g162" gradientUnits="userSpaceOnUse" x1="1321.5" x2="1536.2" y1="0" y2="0"><stop offset="0" stop-color="#005eff"/><stop offset=".042" stop-color="#075bff"/><stop offset=".083" stop-color="#1758ff"/><stop offset=".167" stop-color="#3a52ff"/><stop offset=".250" stop-color="#5f4cff"/><stop offset=".333" stop-color="#8645ff"/><stop offset=".417" stop-color="#b13dff"/><stop offset=".500" stop-color="#e035ff"/><stop offset=".542" stop-color="#f931ff"/><stop offset=".583" stop-color="#ff29ed"/><stop offset=".625" stop-color="#ff22d8"/><stop offset=".667" stop-color="#ff1bc5"/><stop offset=".708" stop-color="#ff15b5"/><stop offset=".750" stop-color="#ff10a7"/><stop offset=".792" stop-color="#ff0b9a"/><stop offset=".833" stop-color="#ff078f"/><stop offset=".875" stop-color="#ff0484"/><stop offset=".917" stop-color="#ff007b"/><stop offset=".958" stop-color="#ff0072"/><stop offset="1" stop-color="#ff006b"/></linearGradient><linearGradient id="g163" gradientUnits="userSpaceOnUse" x1="1320.1" x2="1526.7" y1="0" y2="0"><stop offset="0" stop-color="#0059ff"/><stop offset=".043" stop-color="#0756ff"/><stop offset=".087" stop-color="#1753ff"/><stop offset=".174" stop-color="#394dff"/><stop offset=".261" stop-color="#5d46ff"/><stop offset=".348" stop-color="#853fff"/><stop offset=".435" stop-color="#af38ff"/><stop offset=".522" stop-color="#dd2fff"/><stop offset=".565" stop-color="#f52bff"/><stop offset=".609" stop-color="#ff24f0"/><stop offset=".652" stop-color="#ff1ddb"/><stop offset=".696" stop-color="#ff17c8"/><stop offset=".783" stop-color="#ff0ca9"/><stop offset=".870" stop-color="#ff0491"/><stop offset=".913" stop-color="#ff0087"/><stop offset=".957" stop-color="#ff007d"/><stop offset="1" stop-color="#ff0074"/></linearGradient><linearGradient id="g164" gradientUnits="userSpaceOnUse" x1="1318.6" x2="1517.1" y1="0" y2="0"><stop offset="0" stop-color="#0054ff"/><stop offset=".043" stop-color="#0651ff"/><stop offset=".087" stop-color="#154eff"/><stop offset=".174" stop-color="#3548ff"/><stop offset=".261" stop-color="#5842ff"/><stop offset=".348" stop-color="#7c3bff"/><stop offset=".435" stop-color="#a434ff"/><stop offset=".522" stop-color="#ce2cff"/><stop offset=".609" stop-color="#fc24ff"/><stop offset=".652" stop-color="#ff1dec"/><stop offset=".696" stop-color="#ff16d8"/><stop offset=".739" stop-color="#ff11c6"/><stop offset=".783" stop-color="#ff0cb7"/><stop offset=".826" stop-color="#ff07a9"/><stop offset=".870" stop-color="#ff049d"/><stop offset=".913" stop-color="#ff0092"/><stop offset=".957" stop-color="#ff0088"/><stop offset="1" stop-color="#ff007f"/></linearGradient><linearGradient id="g165" gradientUnits="userSpaceOnUse" x1="1317.1" x2="1507.6" y1="0" y2="0"><stop offset="0" stop-color="#004fff"/><stop offset=".045" stop-color="#064cff"/><stop offset=".091" stop-color="#1549ff"/><stop offset=".182" stop-color="#3543ff"/><stop offset=".227" stop-color="#4540ff"/><stop offset=".273" stop-color="#573dff"/><stop offset=".318" stop-color="#6839ff"/><stop offset=".364" stop-color="#7b36ff"/><stop offset=".455" stop-color="#a22eff"/><stop offset=".545" stop-color="#cb27ff"/><stop offset=".636" stop-color="#f81eff"/><stop offset=".682" stop-color="#ff18ef"/><stop offset=".727" stop-color="#ff12db"/><stop offset=".818" stop-color="#ff08ba"/><stop offset=".864" stop-color="#ff04ac"/><stop offset=".909" stop-color="#ff00a0"/><stop offset="1" stop-color="#ff008b"/></linearGradient><linearGradient id="g166" gradientUnits="userSpaceOnUse" x1="1315.7" x2="1498.0" y1="0" y2="0"><stop offset="0" stop-color="#004aff"/><stop offset=".048" stop-color="#0647ff"/><stop offset=".095" stop-color="#1544ff"/><stop offset=".190" stop-color="#343eff"/><stop offset=".286" stop-color="#5638ff"/><stop offset=".381" stop-color="#7931ff"/><stop offset=".476" stop-color="#9f29ff"/><stop offset=".571" stop-color="#c921ff"/><stop offset=".619" stop-color="#de1dff"/><stop offset=".667" stop-color="#f519ff"/><stop offset=".714" stop-color="#ff13f3"/><stop offset=".762" stop-color="#ff0dde"/><stop offset=".857" stop-color="#ff04bd"/><stop offset=".905" stop-color="#ff00af"/><stop offset=".952" stop-color="#ff00a2"/><stop offset="1" stop-color="#ff0097"/></linearGradient><linearGradient id="g167" gradientUnits="userSpaceOnUse" x1="1314.2" x2="1488.5" y1="0" y2="0"><stop offset="0" stop-color="#0045ff"/><stop offset=".050" stop-color="#0642ff"/><stop offset=".100" stop-color="#1540ff"/><stop offset=".200" stop-color="#3439ff"/><stop offset=".300" stop-color="#5533ff"/><stop offset=".400" stop-color="#782cff"/><stop offset=".450" stop-color="#8a28ff"/><stop offset=".500" stop-color="#9e24ff"/><stop offset=".550" stop-color="#b120ff"/><stop offset=".600" stop-color="#c61cff"/><stop offset=".700" stop-color="#f114ff"/><stop offset=".750" stop-color="#ff0ef6"/><stop offset=".800" stop-color="#ff09e1"/><stop offset=".900" stop-color="#ff00c0"/><stop offset="1" stop-color="#ff00a5"/></linearGradient><linearGradient id="g168" gradientUnits="userSpaceOnUse" x1="1312.8" x2="1478.9" y1="0" y2="0"><stop offset="0" stop-color="#0041ff"/><stop offset=".053" stop-color="#063eff"/><stop offset=".105" stop-color="#143bff"/><stop offset=".211" stop-color="#3335ff"/><stop offset=".316" stop-color="#542eff"/><stop offset=".421" stop-color="#7627ff"/><stop offset=".526" stop-color="#9c1fff"/><stop offset=".579" stop-color="#af1bff"/><stop offset=".632" stop-color="#c417ff"/><stop offset=".737" stop-color="#ee0fff"/><stop offset=".789" stop-color="#ff0af9"/><stop offset=".842" stop-color="#ff05e4"/><stop offset=".895" stop-color="#ff00d2"/><stop offset=".947" stop-color="#ff00c2"/><stop offset="1" stop-color="#ff00b4"/></linearGradient><linearGradient id="g169" gradientUnits="userSpaceOnUse" x1="1311.3" x2="1469.3" y1="0" y2="0"><stop offset="0" stop-color="#003dff"/><stop offset=".056" stop-color="#063aff"/><stop offset=".111" stop-color="#1437ff"/><stop offset=".222" stop-color="#3330ff"/><stop offset=".278" stop-color="#422dff"/><stop offset=".333" stop-color="#532aff"/><stop offset=".444" stop-color="#7522ff"/><stop offset=".556" stop-color="#9a1bff"/><stop offset=".667" stop-color="#c112ff"/><stop offset=".778" stop-color="#ec0aff"/><stop offset=".833" stop-color="#ff05fc"/><stop offset=".889" stop-color="#ff00e7"/><stop offset=".944" stop-color="#ff00d5"/><stop offset="1" stop-color="#ff00c5"/></linearGradient><linearGradient id="g170" gradientUnits="userSpaceOnUse" x1="1309.8" x2="1459.8" y1="0" y2="0"><stop offset="0" stop-color="#0038ff"/><stop offset=".059" stop-color="#0635ff"/><stop offset=".118" stop-color="#1432ff"/><stop offset=".235" stop-color="#322cff"/><stop offset=".353" stop-color="#5225ff"/><stop offset=".471" stop-color="#741eff"/><stop offset=".588" stop-color="#9816ff"/><stop offset=".706" stop-color="#bf0eff"/><stop offset=".824" stop-color="#e905ff"/><stop offset=".882" stop-color="#ff00ff"/><stop offset=".941" stop-color="#ff00ea"/><stop offset="1" stop-color="#ff00d7"/></linearGradient><linearGradient id="g171" gradientUnits="userSpaceOnUse" x1="1308.4" x2="1450.2" y1="0" y2="0"><stop offset="0" stop-color="#0034ff"/><stop offset=".062" stop-color="#0631ff"/><stop offset=".125" stop-color="#142eff"/><stop offset=".250" stop-color="#3228ff"/><stop offset=".375" stop-color="#5121ff"/><stop offset=".500" stop-color="#7319ff"/><stop offset=".625" stop-color="#9712ff"/><stop offset=".750" stop-color="#be09ff"/><stop offset=".875" stop-color="#e700ff"/><stop offset=".938" stop-color="#fd00ff"/><stop offset="1" stop-color="#ff00ec"/></linearGradient><linearGradient id="g172" gradientUnits="userSpaceOnUse" x1="1306.9" x2="1440.7" y1="0" y2="0"><stop offset="0" stop-color="#0030ff"/><stop offset=".067" stop-color="#062dff"/><stop offset=".133" stop-color="#142aff"/><stop offset=".267" stop-color="#3123ff"/><stop offset=".400" stop-color="#511cff"/><stop offset=".533" stop-color="#7215ff"/><stop offset=".667" stop-color="#960dff"/><stop offset=".800" stop-color="#bc05ff"/><stop offset=".867" stop-color="#d000ff"/><stop offset=".933" stop-color="#e500ff"/><stop offset="1" stop-color="#fa00ff"/></linearGradient><linearGradient id="g173" gradientUnits="userSpaceOnUse" x1="1305.4" x2="1431.1" y1="0" y2="0"><stop offset="0" stop-color="#002cff"/><stop offset=".071" stop-color="#0629ff"/><stop offset=".143" stop-color="#1426ff"/><stop offset=".286" stop-color="#311fff"/><stop offset=".429" stop-color="#5018ff"/><stop offset=".571" stop-color="#7111ff"/><stop offset=".714" stop-color="#9509ff"/><stop offset=".786" stop-color="#a705ff"/><stop offset=".857" stop-color="#bb00ff"/><stop offset=".929" stop-color="#ce00ff"/><stop offset="1" stop-color="#e300ff"/></linearGradient><linearGradient id="g174" gradientUnits="userSpaceOnUse" x1="1304.0" x2="1421.6" y1="0" y2="0"><stop offset="0" stop-color="#0028ff"/><stop offset=".071" stop-color="#0525ff"/><stop offset=".143" stop-color="#1223ff"/><stop offset=".286" stop-color="#2d1cff"/><stop offset=".429" stop-color="#4916ff"/><stop offset=".571" stop-color="#670fff"/><stop offset=".714" stop-color="#8708ff"/><stop offset=".857" stop-color="#a900ff"/><stop offset="1" stop-color="#cd00ff"/></linearGradient><linearGradient id="g175" gradientUnits="userSpaceOnUse" x1="1302.5" x2="1412.0" y1="0" y2="0"><stop offset="0" stop-color="#0025ff"/><stop offset=".077" stop-color="#0522ff"/><stop offset=".154" stop-color="#121fff"/><stop offset=".308" stop-color="#2c19ff"/><stop offset=".462" stop-color="#4812ff"/><stop offset=".615" stop-color="#660bff"/><stop offset=".769" stop-color="#8604ff"/><stop offset=".846" stop-color="#9600ff"/><stop offset=".923" stop-color="#a700ff"/><stop offset="1" stop-color="#b900ff"/></linearGradient><linearGradient id="g176" gradientUnits="userSpaceOnUse" x1="1301.1" x2="1402.5" y1="0" y2="0"><stop offset="0" stop-color="#0021ff"/><stop offset=".083" stop-color="#051eff"/><stop offset=".167" stop-color="#111bff"/><stop offset=".333" stop-color="#2c15ff"/><stop offset=".500" stop-color="#480eff"/><stop offset=".667" stop-color="#6507ff"/><stop offset=".833" stop-color="#8400ff"/><stop offset="1" stop-color="#a500ff"/></linearGradient><linearGradient id="g177" gradientUnits="userSpaceOnUse" x1="1299.6" x2="1392.9" y1="0" y2="0"><stop offset="0" stop-color="#001dff"/><stop offset=".091" stop-color="#051bff"/><stop offset=".182" stop-color="#1117ff"/><stop offset=".364" stop-color="#2b11ff"/><stop offset=".545" stop-color="#470bff"/><stop offset=".727" stop-color="#6404ff"/><stop offset=".818" stop-color="#7300ff"/><stop offset=".909" stop-color="#8300ff"/><stop offset="1" stop-color="#9300ff"/></linearGradient><linearGradient id="g178" gradientUnits="userSpaceOnUse" x1="1298.1" x2="1383.3" y1="0" y2="0"><stop offset="0" stop-color="#001aff"/><stop offset=".100" stop-color="#0517ff"/><stop offset=".200" stop-color="#1114ff"/><stop offset=".400" stop-color="#2b0eff"/><stop offset=".600" stop-color="#4707ff"/><stop offset=".800" stop-color="#6300ff"/><stop offset="1" stop-color="#8200ff"/></linearGradient><linearGradient id="g179" gradientUnits="userSpaceOnUse" x1="1296.7" x2="1373.8" y1="0" y2="0"><stop offset="0" stop-color="#0017ff"/><stop offset=".111" stop-color="#0514ff"/><stop offset=".222" stop-color="#1111ff"/><stop offset=".444" stop-color="#2b0aff"/><stop offset=".667" stop-color="#4603ff"/><stop offset=".778" stop-color="#5400ff"/><stop offset=".889" stop-color="#6300ff"/><stop offset="1" stop-color="#7200ff"/></linearGradient><linearGradient id="g180" gradientUnits="userSpaceOnUse" x1="1295.2" x2="1364.2" y1="0" y2="0"><stop offset="0" stop-color="#0013ff"/><stop offset=".125" stop-color="#0510ff"/><stop offset=".250" stop-color="#110dff"/><stop offset=".500" stop-color="#2b07ff"/><stop offset=".750" stop-color="#4600ff"/><stop offset="1" stop-color="#6200ff"/></linearGradient><linearGradient id="g181" gradientUnits="userSpaceOnUse" x1="1293.7" x2="1354.7" y1="0" y2="0"><stop offset="0" stop-color="#0010ff"/><stop offset=".143" stop-color="#050dff"/><stop offset=".286" stop-color="#110aff"/><stop offset=".571" stop-color="#2b03ff"/><stop offset=".714" stop-color="#3800ff"/><stop offset=".857" stop-color="#4600ff"/><stop offset="1" stop-color="#5400ff"/></linearGradient><linearGradient id="g182" gradientUnits="userSpaceOnUse" x1="1292.3" x2="1345.1" y1="0" y2="0"><stop offset="0" stop-color="#000dff"/><stop offset=".167" stop-color="#050aff"/><stop offset=".333" stop-color="#1107ff"/><stop offset=".667" stop-color="#2b00ff"/><stop offset="1" stop-color="#4600ff"/></linearGradient><linearGradient id="g183" gradientUnits="userSpaceOnUse" x1="1290.8" x2="1335.6" y1="0" y2="0"><stop offset="0" stop-color="#000aff"/><stop offset=".200" stop-color="#0507ff"/><stop offset=".400" stop-color="#1104ff"/><stop offset=".600" stop-color="#1e00ff"/><stop offset=".800" stop-color="#2b00ff"/><stop offset="1" stop-color="#3800ff"/></linearGradient><linearGradient id="g184" gradientUnits="userSpaceOnUse" x1="1289.4" x2="1326.0" y1="0" y2="0"><stop offset="0" stop-color="#0007ff"/><stop offset=".200" stop-color="#0304ff"/><stop offset=".400" stop-color="#0d02ff"/><stop offset=".600" stop-color="#1700ff"/><stop offset=".800" stop-color="#2100ff"/><stop offset="1" stop-color="#2c00ff"/></linearGradient><linearGradient id="g185" gradientUnits="userSpaceOnUse" x1="1289.5" x2="1316.5" y1="0" y2="0"><stop offset="0" stop-color="#0003ff"/><stop offset=".333" stop-color="#0700ff"/><stop offset=".667" stop-color="#1300ff"/><stop offset="1" stop-color="#2000ff"/></linearGradient><linearGradient id="g186" gradientUnits="userSpaceOnUse" x1="1289.2" x2="1306.9" y1="0" y2="0"><stop offset="0" stop-color="#0000ff"/><stop offset=".500" stop-color="#0800ff"/><stop offset="1" stop-color="#1400ff"/></linearGradient><linearGradient id="g187" gradientUnits="userSpaceOnUse" x1="1289.4" x2="1297.3" y1="0" y2="0"><stop offset="0" stop-color="#0000ff"/><stop offset="1" stop-color="#0900ff"/></linearGradient><filter id="vb" x="-2%" y="-2%" width="104%" height="104%"><feGaussianBlur stdDeviation="0 1.6"/></filter><filter id="vb2" x="-2%" y="-2%" width="104%" height="104%"><feGaussianBlur stdDeviation="0 2.4"/></filter><clipPath id="cl"><path d="M1313.2 673.7C1313.0 673.7 1312.9 673.8 1312.5 673.8C1312.1 673.8 1311.4 673.8 1310.8 673.6C1310.1 673.4 1309.6 673.0 1308.6 672.4C1307.6 671.8 1305.8 670.5 1304.6 669.7C1303.5 669.0 1302.9 668.6 1301.7 667.8C1300.6 667.0 1299.3 666.2 1297.8 665.2C1296.3 664.2 1294.7 663.2 1292.9 661.9C1291.0 660.5 1289.0 659.1 1286.7 657.2C1284.5 655.3 1282.2 653.5 1279.3 650.4C1276.4 647.3 1273.0 643.7 1269.3 638.4C1265.5 633.2 1261.3 627.4 1256.5 619.1C1251.7 610.8 1246.4 601.2 1240.5 588.5C1234.5 575.8 1227.3 561.2 1220.6 543.1C1213.9 525.1 1206.8 503.8 1200.2 480.2C1193.5 456.7 1186.4 428.8 1180.9 401.7C1175.5 374.7 1170.4 344.8 1167.5 317.9C1164.6 291.0 1162.9 263.8 1163.7 240.2C1164.6 216.7 1167.4 194.1 1172.5 176.6C1177.6 159.1 1185.6 144.7 1194.5 135.4C1203.3 126.1 1214.5 122.4 1225.5 120.9C1236.6 119.3 1248.8 122.8 1260.6 125.9C1272.3 129.0 1284.6 134.5 1296.1 139.5C1307.6 144.4 1318.7 149.9 1329.7 155.7C1340.6 161.4 1351.2 167.5 1361.9 173.9C1372.6 180.3 1383.1 187.0 1393.7 193.9C1404.2 200.8 1414.6 208.0 1425.1 215.2C1435.6 222.5 1446.0 230.0 1456.4 237.5C1466.9 245.1 1477.4 252.8 1487.9 260.5C1498.3 268.2 1508.7 276.0 1519.1 283.7C1529.5 291.5 1540.0 299.3 1550.2 307.0C1560.5 314.7 1570.7 322.5 1580.7 330.0C1590.7 337.6 1600.6 345.1 1610.3 352.4C1619.9 359.8 1629.5 367.0 1638.6 373.9C1647.8 380.9 1656.8 387.6 1665.3 394.1C1673.8 400.5 1682.1 406.8 1689.6 412.5C1697.2 418.3 1704.2 423.5 1710.8 428.5C1717.4 433.6 1723.7 438.3 1729.4 442.6C1735.1 446.9 1740.2 450.7 1744.9 454.2C1749.5 457.7 1753.7 460.9 1757.4 463.8C1761.2 466.6 1764.4 469.1 1767.4 471.4C1770.4 473.6 1773.0 475.6 1775.4 477.4C1777.8 479.2 1779.9 480.7 1781.8 482.2C1783.8 483.7 1785.6 485.1 1787.2 486.3C1788.8 487.5 1790.3 488.7 1791.6 489.6C1792.9 490.6 1794.1 491.5 1795.1 492.2C1796.1 493.0 1796.7 493.5 1797.7 494.2C1798.8 495.0 1800.2 496.1 1801.2 496.9C1802.3 497.7 1803.5 498.7 1804.2 499.2C1804.9 499.7 1805.2 499.9 1805.4 500.0Z"/></clipPath><clipPath id="ct"><path d="M1722.2 456.9L1423.7 276.8L1292.0 637.0Z"/></clipPath></defs><rect x="1160.0" y="116.3" width="739.0" height="561.3" fill="#242424"/><g clip-path="url(#cl)"><g filter="url(#vb2)"><rect x="1206.8" y="114.0" width="53.3" height="6.6" fill="url(#g0)"/><rect x="1196.4" y="120.0" width="82.5" height="6.6" fill="url(#g1)"/><rect x="1190.1" y="126.0" width="103.3" height="6.6" fill="url(#g2)"/><rect x="1185.3" y="132.0" width="121.7" height="6.6" fill="url(#g3)"/><rect x="1181.4" y="138.0" width="138.2" height="6.6" fill="url(#g4)"/><rect x="1178.1" y="144.0" width="153.3" height="6.6" fill="url(#g5)"/><rect x="1175.2" y="150.0" width="167.4" height="6.6" fill="url(#g6)"/><rect x="1172.8" y="156.0" width="180.4" height="6.6" fill="url(#g7)"/><rect x="1170.7" y="162.0" width="192.7" height="6.6" fill="url(#g8)"/><rect x="1168.9" y="168.0" width="204.4" height="6.6" fill="url(#g9)"/><rect x="1167.3" y="174.0" width="215.6" height="6.6" fill="url(#g10)"/><rect x="1166.1" y="180.0" width="226.2" height="6.6" fill="url(#g11)"/><rect x="1164.9" y="186.0" width="236.5" height="6.6" fill="url(#g12)"/><rect x="1164.0" y="192.0" width="246.3" height="6.6" fill="url(#g13)"/><rect x="1163.2" y="198.0" width="255.9" height="6.6" fill="url(#g14)"/><rect x="1162.5" y="204.0" width="265.3" height="6.6" fill="url(#g15)"/><rect x="1161.9" y="210.0" width="274.4" height="6.6" fill="url(#g16)"/><rect x="1161.4" y="216.0" width="283.4" height="6.6" fill="url(#g17)"/><rect x="1161.1" y="222.0" width="292.1" height="6.6" fill="url(#g18)"/><rect x="1160.8" y="228.0" width="300.7" height="6.6" fill="url(#g19)"/><rect x="1160.6" y="234.0" width="309.1" height="6.6" fill="url(#g20)"/><rect x="1160.5" y="240.0" width="317.5" height="6.6" fill="url(#g21)"/><rect x="1160.5" y="246.0" width="325.7" height="6.6" fill="url(#g22)"/><rect x="1160.5" y="252.0" width="333.8" height="6.6" fill="url(#g23)"/><rect x="1160.5" y="258.0" width="341.9" height="6.6" fill="url(#g24)"/><rect x="1160.6" y="264.0" width="349.8" height="6.6" fill="url(#g25)"/><rect x="1160.7" y="270.0" width="357.8" height="6.6" fill="url(#g26)"/><rect x="1160.9" y="276.0" width="365.6" height="6.6" fill="url(#g27)"/><rect x="1161.2" y="282.0" width="373.3" height="6.6" fill="url(#g28)"/><rect x="1161.6" y="288.0" width="381.0" height="6.6" fill="url(#g29)"/><rect x="1161.9" y="294.0" width="388.6" height="6.6" fill="url(#g30)"/><rect x="1162.4" y="300.0" width="396.1" height="6.6" fill="url(#g31)"/><rect x="1162.9" y="306.0" width="403.6" height="6.6" fill="url(#g32)"/><rect x="1163.4" y="312.0" width="411.0" height="6.6" fill="url(#g33)"/><rect x="1164.0" y="318.0" width="418.3" height="6.6" fill="url(#g34)"/><rect x="1164.6" y="324.0" width="425.6" height="6.6" fill="url(#g35)"/><rect x="1165.3" y="330.0" width="432.8" height="6.6" fill="url(#g36)"/><rect x="1166.0" y="336.0" width="440.1" height="6.6" fill="url(#g37)"/><rect x="1166.9" y="342.0" width="447.2" height="6.6" fill="url(#g38)"/><rect x="1167.7" y="348.0" width="454.2" height="6.6" fill="url(#g39)"/><rect x="1168.6" y="354.0" width="461.3" height="6.6" fill="url(#g40)"/><rect x="1169.5" y="360.0" width="468.3" height="6.6" fill="url(#g41)"/><rect x="1170.5" y="366.0" width="475.3" height="6.6" fill="url(#g42)"/><rect x="1171.5" y="372.0" width="482.2" height="6.6" fill="url(#g43)"/><rect x="1172.5" y="378.0" width="489.1" height="6.6" fill="url(#g44)"/><rect x="1173.6" y="384.0" width="496.0" height="6.6" fill="url(#g45)"/><rect x="1174.7" y="390.0" width="502.8" height="6.6" fill="url(#g46)"/><rect x="1175.8" y="396.0" width="509.5" height="6.6" fill="url(#g47)"/><rect x="1177.0" y="402.0" width="516.3" height="6.6" fill="url(#g48)"/><rect x="1178.2" y="408.0" width="523.0" height="6.6" fill="url(#g49)"/><rect x="1179.5" y="414.0" width="529.7" height="6.6" fill="url(#g50)"/><rect x="1180.7" y="420.0" width="536.3" height="6.6" fill="url(#g51)"/><rect x="1182.1" y="426.0" width="542.9" height="6.6" fill="url(#g52)"/><rect x="1183.4" y="432.0" width="549.5" height="6.6" fill="url(#g53)"/><rect x="1184.9" y="438.0" width="556.1" height="6.6" fill="url(#g54)"/><rect x="1186.3" y="444.0" width="562.6" height="6.6" fill="url(#g55)"/><rect x="1187.8" y="450.0" width="569.0" height="6.6" fill="url(#g56)"/><rect x="1189.3" y="456.0" width="575.4" height="6.6" fill="url(#g57)"/><rect x="1190.9" y="462.0" width="581.7" height="6.6" fill="url(#g58)"/><rect x="1192.5" y="468.0" width="588.1" height="6.6" fill="url(#g59)"/><rect x="1194.1" y="474.0" width="594.4" height="6.6" fill="url(#g60)"/><rect x="1195.7" y="480.0" width="600.7" height="6.6" fill="url(#g61)"/><rect x="1197.4" y="486.0" width="607.0" height="6.6" fill="url(#g62)"/><rect x="1199.1" y="492.0" width="607.9" height="6.6" fill="url(#g63)"/><rect x="1200.9" y="498.0" width="606.1" height="6.6" fill="url(#g64)"/><rect x="1202.7" y="504.0" width="604.3" height="6.6" fill="url(#g65)"/><rect x="1204.6" y="510.0" width="589.8" height="6.6" fill="url(#g66)"/><rect x="1206.5" y="516.0" width="570.8" height="6.6" fill="url(#g67)"/><rect x="1208.4" y="522.0" width="551.9" height="6.6" fill="url(#g68)"/><rect x="1210.4" y="528.0" width="532.8" height="6.6" fill="url(#g69)"/><rect x="1212.5" y="534.0" width="513.7" height="6.6" fill="url(#g70)"/><rect x="1214.7" y="540.0" width="494.6" height="6.6" fill="url(#g71)"/><rect x="1216.8" y="546.0" width="475.4" height="6.6" fill="url(#g72)"/><rect x="1219.1" y="552.0" width="456.1" height="6.6" fill="url(#g73)"/><rect x="1221.5" y="558.0" width="436.8" height="6.6" fill="url(#g74)"/><rect x="1224.0" y="564.0" width="417.3" height="6.6" fill="url(#g75)"/><rect x="1226.6" y="570.0" width="397.6" height="6.6" fill="url(#g76)"/><rect x="1229.3" y="576.0" width="377.9" height="6.6" fill="url(#g77)"/><rect x="1232.0" y="582.0" width="358.2" height="6.6" fill="url(#g78)"/><rect x="1234.9" y="588.0" width="338.3" height="6.6" fill="url(#g79)"/><rect x="1237.7" y="594.0" width="318.5" height="6.6" fill="url(#g80)"/><rect x="1240.6" y="600.0" width="298.6" height="6.6" fill="url(#g81)"/><rect x="1243.6" y="606.0" width="278.5" height="6.6" fill="url(#g82)"/><rect x="1246.8" y="612.0" width="258.4" height="6.6" fill="url(#g83)"/><rect x="1250.1" y="618.0" width="238.1" height="6.6" fill="url(#g84)"/><rect x="1253.5" y="624.0" width="217.7" height="6.6" fill="url(#g85)"/><rect x="1257.1" y="630.0" width="197.0" height="6.6" fill="url(#g86)"/><rect x="1261.0" y="636.0" width="176.1" height="6.6" fill="url(#g87)"/><rect x="1265.2" y="642.0" width="154.9" height="6.6" fill="url(#g88)"/><rect x="1269.8" y="648.0" width="133.3" height="6.6" fill="url(#g89)"/><rect x="1275.0" y="654.0" width="111.1" height="6.6" fill="url(#g90)"/><rect x="1281.1" y="660.0" width="87.9" height="6.6" fill="url(#g91)"/><rect x="1288.7" y="666.0" width="63.4" height="6.6" fill="url(#g92)"/><rect x="1297.5" y="672.0" width="37.5" height="6.6" fill="url(#g93)"/><rect x="1306.6" y="678.0" width="11.5" height="3.4" fill="url(#g94)"/></g></g><g clip-path="url(#ct)"><g filter="url(#vb)"><rect x="1419.5" y="272.0" width="12.5" height="4.6" fill="url(#g95)"/><rect x="1418.1" y="276.0" width="20.6" height="4.6" fill="url(#g96)"/><rect x="1416.6" y="280.0" width="28.7" height="4.6" fill="url(#g97)"/><rect x="1415.1" y="284.0" width="36.8" height="4.6" fill="url(#g98)"/><rect x="1413.7" y="288.0" width="44.8" height="4.6" fill="url(#g99)"/><rect x="1412.2" y="292.0" width="52.9" height="4.6" fill="url(#g100)"/><rect x="1410.8" y="296.0" width="61.0" height="4.6" fill="url(#g101)"/><rect x="1409.3" y="300.0" width="69.1" height="4.6" fill="url(#g102)"/><rect x="1407.8" y="304.0" width="77.2" height="4.6" fill="url(#g103)"/><rect x="1406.4" y="308.0" width="85.3" height="4.6" fill="url(#g104)"/><rect x="1404.9" y="312.0" width="93.4" height="4.6" fill="url(#g105)"/><rect x="1403.4" y="316.0" width="101.5" height="4.6" fill="url(#g106)"/><rect x="1402.0" y="320.0" width="109.6" height="4.6" fill="url(#g107)"/><rect x="1400.5" y="324.0" width="117.7" height="4.6" fill="url(#g108)"/><rect x="1399.1" y="328.0" width="125.8" height="4.6" fill="url(#g109)"/><rect x="1397.6" y="332.0" width="133.9" height="4.6" fill="url(#g110)"/><rect x="1396.1" y="336.0" width="142.0" height="4.6" fill="url(#g111)"/><rect x="1394.7" y="340.0" width="150.1" height="4.6" fill="url(#g112)"/><rect x="1393.2" y="344.0" width="158.2" height="4.6" fill="url(#g113)"/><rect x="1391.7" y="348.0" width="166.2" height="4.6" fill="url(#g114)"/><rect x="1390.3" y="352.0" width="174.3" height="4.6" fill="url(#g115)"/><rect x="1388.8" y="356.0" width="182.4" height="4.6" fill="url(#g116)"/><rect x="1387.4" y="360.0" width="190.5" height="4.6" fill="url(#g117)"/><rect x="1385.9" y="364.0" width="198.6" height="4.6" fill="url(#g118)"/><rect x="1384.4" y="368.0" width="206.7" height="4.6" fill="url(#g119)"/><rect x="1383.0" y="372.0" width="214.8" height="4.6" fill="url(#g120)"/><rect x="1381.5" y="376.0" width="222.9" height="4.6" fill="url(#g121)"/><rect x="1380.0" y="380.0" width="231.0" height="4.6" fill="url(#g122)"/><rect x="1378.6" y="384.0" width="239.1" height="4.6" fill="url(#g123)"/><rect x="1377.1" y="388.0" width="247.2" height="4.6" fill="url(#g124)"/><rect x="1375.7" y="392.0" width="255.3" height="4.6" fill="url(#g125)"/><rect x="1374.2" y="396.0" width="263.4" height="4.6" fill="url(#g126)"/><rect x="1372.7" y="400.0" width="271.5" height="4.6" fill="url(#g127)"/><rect x="1371.3" y="404.0" width="279.5" height="4.6" fill="url(#g128)"/><rect x="1369.8" y="408.0" width="287.6" height="4.6" fill="url(#g129)"/><rect x="1368.3" y="412.0" width="295.7" height="4.6" fill="url(#g130)"/><rect x="1366.9" y="416.0" width="303.8" height="4.6" fill="url(#g131)"/><rect x="1365.4" y="420.0" width="311.9" height="4.6" fill="url(#g132)"/><rect x="1364.0" y="424.0" width="320.0" height="4.6" fill="url(#g133)"/><rect x="1362.5" y="428.0" width="328.1" height="4.6" fill="url(#g134)"/><rect x="1361.0" y="432.0" width="336.2" height="4.6" fill="url(#g135)"/><rect x="1359.6" y="436.0" width="344.3" height="4.6" fill="url(#g136)"/><rect x="1358.1" y="440.0" width="352.4" height="4.6" fill="url(#g137)"/><rect x="1356.6" y="444.0" width="360.5" height="4.6" fill="url(#g138)"/><rect x="1355.2" y="448.0" width="368.6" height="4.6" fill="url(#g139)"/><rect x="1353.7" y="452.0" width="371.2" height="4.6" fill="url(#g140)"/><rect x="1352.2" y="456.0" width="372.3" height="4.6" fill="url(#g141)"/><rect x="1350.8" y="460.0" width="373.0" height="4.6" fill="url(#g142)"/><rect x="1349.3" y="464.0" width="368.5" height="4.6" fill="url(#g143)"/><rect x="1347.9" y="468.0" width="360.4" height="4.6" fill="url(#g144)"/><rect x="1346.4" y="472.0" width="352.3" height="4.6" fill="url(#g145)"/><rect x="1344.9" y="476.0" width="344.2" height="4.6" fill="url(#g146)"/><rect x="1343.5" y="480.0" width="336.1" height="4.6" fill="url(#g147)"/><rect x="1342.0" y="484.0" width="328.0" height="4.6" fill="url(#g148)"/><rect x="1340.5" y="488.0" width="319.9" height="4.6" fill="url(#g149)"/><rect x="1339.1" y="492.0" width="311.8" height="4.6" fill="url(#g150)"/><rect x="1337.6" y="496.0" width="303.7" height="4.6" fill="url(#g151)"/><rect x="1336.2" y="500.0" width="295.6" height="4.6" fill="url(#g152)"/><rect x="1334.7" y="504.0" width="287.5" height="4.6" fill="url(#g153)"/><rect x="1333.2" y="508.0" width="279.4" height="4.6" fill="url(#g154)"/><rect x="1331.8" y="512.0" width="271.3" height="4.6" fill="url(#g155)"/><rect x="1330.3" y="516.0" width="263.3" height="4.6" fill="url(#g156)"/><rect x="1328.8" y="520.0" width="255.2" height="4.6" fill="url(#g157)"/><rect x="1327.4" y="524.0" width="247.1" height="4.6" fill="url(#g158)"/><rect x="1325.9" y="528.0" width="239.0" height="4.6" fill="url(#g159)"/><rect x="1324.5" y="532.0" width="230.9" height="4.6" fill="url(#g160)"/><rect x="1323.0" y="536.0" width="222.8" height="4.6" fill="url(#g161)"/><rect x="1321.5" y="540.0" width="214.7" height="4.6" fill="url(#g162)"/><rect x="1320.1" y="544.0" width="206.6" height="4.6" fill="url(#g163)"/><rect x="1318.6" y="548.0" width="198.5" height="4.6" fill="url(#g164)"/><rect x="1317.1" y="552.0" width="190.4" height="4.6" fill="url(#g165)"/><rect x="1315.7" y="556.0" width="182.3" height="4.6" fill="url(#g166)"/><rect x="1314.2" y="560.0" width="174.2" height="4.6" fill="url(#g167)"/><rect x="1312.8" y="564.0" width="166.1" height="4.6" fill="url(#g168)"/><rect x="1311.3" y="568.0" width="158.0" height="4.6" fill="url(#g169)"/><rect x="1309.8" y="572.0" width="150.0" height="4.6" fill="url(#g170)"/><rect x="1308.4" y="576.0" width="141.9" height="4.6" fill="url(#g171)"/><rect x="1306.9" y="580.0" width="133.8" height="4.6" fill="url(#g172)"/><rect x="1305.4" y="584.0" width="125.7" height="4.6" fill="url(#g173)"/><rect x="1304.0" y="588.0" width="117.6" height="4.6" fill="url(#g174)"/><rect x="1302.5" y="592.0" width="109.5" height="4.6" fill="url(#g175)"/><rect x="1301.1" y="596.0" width="101.4" height="4.6" fill="url(#g176)"/><rect x="1299.6" y="600.0" width="93.3" height="4.6" fill="url(#g177)"/><rect x="1298.1" y="604.0" width="85.2" height="4.6" fill="url(#g178)"/><rect x="1296.7" y="608.0" width="77.1" height="4.6" fill="url(#g179)"/><rect x="1295.2" y="612.0" width="69.0" height="4.6" fill="url(#g180)"/><rect x="1293.7" y="616.0" width="60.9" height="4.6" fill="url(#g181)"/><rect x="1292.3" y="620.0" width="52.8" height="4.6" fill="url(#g182)"/><rect x="1290.8" y="624.0" width="44.7" height="4.6" fill="url(#g183)"/><rect x="1289.4" y="628.0" width="36.6" height="4.6" fill="url(#g184)"/><rect x="1289.5" y="632.0" width="26.9" height="4.6" fill="url(#g185)"/><rect x="1289.2" y="636.0" width="17.7" height="4.6" fill="url(#g186)"/><rect x="1289.4" y="640.0" width="8.0" height="2.6" fill="url(#g187)"/></g></g><rect x="1160.0" y="116.3" width="739.0" height="561.3" fill="none" stroke="#949494" stroke-width="1.9"/><path d="M1160.5 677.6V684.1" stroke="#d8d8d8" stroke-width="1.5"/><path d="M1153.5 677.4H1160.0" stroke="#d8d8d8" stroke-width="1.5"/><path d="M1246.9 677.6V684.1" stroke="#d8d8d8" stroke-width="1.5"/><path d="M1153.5 610.7H1160.0" stroke="#d8d8d8" stroke-width="1.5"/><path d="M1335.8 677.6V684.1" stroke="#d8d8d8" stroke-width="1.5"/><path d="M1153.5 544.0H1160.0" stroke="#d8d8d8" stroke-width="1.5"/><path d="M1422.6 677.6V684.1" stroke="#d8d8d8" stroke-width="1.5"/><path d="M1153.5 477.3H1160.0" stroke="#d8d8d8" stroke-width="1.5"/><path d="M1511.2 677.6V684.1" stroke="#d8d8d8" stroke-width="1.5"/><path d="M1153.5 410.6H1160.0" stroke="#d8d8d8" stroke-width="1.5"/><path d="M1600.0 677.6V684.1" stroke="#d8d8d8" stroke-width="1.5"/><path d="M1153.5 343.9H1160.0" stroke="#d8d8d8" stroke-width="1.5"/><path d="M1686.2 677.6V684.1" stroke="#d8d8d8" stroke-width="1.5"/><path d="M1153.5 277.2H1160.0" stroke="#d8d8d8" stroke-width="1.5"/><path d="M1774.7 677.6V684.1" stroke="#d8d8d8" stroke-width="1.5"/><path d="M1153.5 210.5H1160.0" stroke="#d8d8d8" stroke-width="1.5"/><path d="M1863.2 677.6V684.1" stroke="#d8d8d8" stroke-width="1.5"/><path d="M1153.5 143.8H1160.0" stroke="#d8d8d8" stroke-width="1.5"/><rect x="1427.0" y="449.7" width="15.2" height="15.2" fill="none" stroke="#000" stroke-width="2.2"/><rect x="1428.6" y="451.3" width="12" height="12" fill="none" stroke="#fff" stroke-width="1"/><rect x="1503.7" y="426.0" width="15.2" height="15.2" fill="none" stroke="#fff" stroke-width="1.6"/><rect x="1485.4" y="431.3" width="15.2" height="15.2" fill="none" stroke="#fff" stroke-width="1.6"/><rect x="1371.3" y="491.7" width="15.2" height="15.2" fill="none" stroke="#fff" stroke-width="1.6"/><rect x="1450.3" y="384.0" width="15.2" height="15.2" fill="none" stroke="#fff" stroke-width="1.6"/><rect x="1387.6" y="500.5" width="15.2" height="15.2" fill="none" stroke="#fff" stroke-width="1.6"/><rect x="1382.8" y="427.7" width="15.2" height="15.2" fill="none" stroke="#fff" stroke-width="1.6"/><rect x="1601.9" y="397.9" width="15.2" height="15.2" fill="none" stroke="#fff" stroke-width="1.6"/><rect x="1342.2" y="541.8" width="15.2" height="15.2" fill="none" stroke="#fff" stroke-width="1.6"/><rect x="1557.8" y="460.9" width="15.2" height="15.2" fill="none" stroke="#fff" stroke-width="1.6"/><rect x="1407.3" y="521.3" width="15.2" height="15.2" fill="none" stroke="#fff" stroke-width="1.6"/><rect x="1482.1" y="339.7" width="15.2" height="15.2" fill="none" stroke="#fff" stroke-width="1.6"/><rect x="1568.5" y="375.6" width="15.2" height="15.2" fill="none" stroke="#fff" stroke-width="1.6"/><rect x="1320.5" y="575.7" width="15.2" height="15.2" fill="none" stroke="#fff" stroke-width="1.6"/><rect x="1419.8" y="341.2" width="15.2" height="15.2" fill="none" stroke="#fff" stroke-width="1.6"/><rect x="1624.5" y="457.6" width="15.2" height="15.2" fill="none" stroke="#fff" stroke-width="1.6"/><rect x="1545.5" y="352.2" width="15.2" height="15.2" fill="none" stroke="#fff" stroke-width="1.6"/><rect x="1480.5" y="504.5" width="15.2" height="15.2" fill="none" stroke="#fff" stroke-width="1.6"/><rect x="1334.2" y="488.8" width="15.2" height="15.2" fill="none" stroke="#fff" stroke-width="1.6"/><rect x="1714.1" y="448.8" width="15.2" height="15.2" fill="none" stroke="#fff" stroke-width="1.6"/><rect x="1415.6" y="268.7" width="15.2" height="15.2" fill="none" stroke="#fff" stroke-width="1.6"/><rect x="1283.9" y="628.9" width="15.2" height="15.2" fill="none" stroke="#fff" stroke-width="1.6"/><rect x="1349.4" y="449.7" width="15.2" height="15.2" fill="none" stroke="#fff" stroke-width="1.6"/><rect x="1434.0" y="566.0" width="15.2" height="15.2" fill="none" stroke="#fff" stroke-width="1.6"/><rect x="1520.3" y="331.9" width="15.2" height="15.2" fill="none" stroke="#fff" stroke-width="1.6"/><circle cx="1436.1" cy="459.6" r="4.7" fill="#ffffff" stroke="#000" stroke-width="1.3"/><circle cx="1439.1" cy="457.0" r="4.7" fill="#e6e6e6" stroke="#000" stroke-width="1.3"/><circle cx="1440.1" cy="456.0" r="4.7" fill="#d0d0d0" stroke="#000" stroke-width="1.3"/><circle cx="1440.7" cy="455.4" r="4.7" fill="#b9b9b9" stroke="#000" stroke-width="1.3"/><circle cx="1441.1" cy="454.7" r="4.7" fill="#9e9e9e" stroke="#000" stroke-width="1.3"/><circle cx="1380.8" cy="518.6" r="4.7" fill="#000000" stroke="#000" stroke-width="1.3"/><circle cx="1529.2" cy="431.2" r="4.7" fill="#735244" stroke="#000" stroke-width="1.3"/><circle cx="1503.7" cy="437.5" r="4.7" fill="#c29682" stroke="#000" stroke-width="1.3"/><circle cx="1380.1" cy="497.6" r="4.7" fill="#627a9d" stroke="#000" stroke-width="1.3"/><circle cx="1464.9" cy="383.0" r="4.7" fill="#576c43" stroke="#000" stroke-width="1.3"/><circle cx="1400.4" cy="506.8" r="4.7" fill="#8580b1" stroke="#000" stroke-width="1.3"/><circle cx="1390.4" cy="431.0" r="4.7" fill="#67bdaa" stroke="#000" stroke-width="1.3"/><circle cx="1625.0" cy="407.5" r="4.7" fill="#d67e2c" stroke="#000" stroke-width="1.3"/><circle cx="1347.9" cy="552.3" r="4.7" fill="#505ba6" stroke="#000" stroke-width="1.3"/><circle cx="1587.1" cy="468.5" r="4.7" fill="#c15a63" stroke="#000" stroke-width="1.3"/><circle cx="1421.0" cy="532.2" r="4.7" fill="#5e3c6c" stroke="#000" stroke-width="1.3"/><circle cx="1496.7" cy="341.5" r="4.7" fill="#9dbc40" stroke="#000" stroke-width="1.3"/><circle cx="1588.4" cy="383.2" r="4.7" fill="#e0a32e" stroke="#000" stroke-width="1.3"/><circle cx="1324.9" cy="589.3" r="4.7" fill="#383d96" stroke="#000" stroke-width="1.3"/><circle cx="1428.9" cy="336.4" r="4.7" fill="#469449" stroke="#000" stroke-width="1.3"/><circle cx="1659.9" cy="468.5" r="4.7" fill="#af363c" stroke="#000" stroke-width="1.3"/><circle cx="1562.1" cy="359.8" r="4.7" fill="#e7c71f" stroke="#000" stroke-width="1.3"/><circle cx="1503.4" cy="513.4" r="4.7" fill="#bb5695" stroke="#000" stroke-width="1.3"/><circle cx="1341.8" cy="495.0" r="4.7" fill="#0885a1" stroke="#000" stroke-width="1.3"/><circle cx="1731.5" cy="464.1" r="4.7" fill="#ff0000" stroke="#000" stroke-width="1.3"/><circle cx="1419.3" cy="268.4" r="4.7" fill="#00ff00" stroke="#000" stroke-width="1.3"/><circle cx="1292.1" cy="637.5" r="4.7" fill="#0000ff" stroke="#000" stroke-width="1.3"/><circle cx="1352.7" cy="459.0" r="4.7" fill="#00ffff" stroke="#000" stroke-width="1.3"/><circle cx="1447.5" cy="575.3" r="4.7" fill="#ff00ff" stroke="#000" stroke-width="1.3"/><circle cx="1533.3" cy="339.2" r="4.7" fill="#ffff00" stroke="#000" stroke-width="1.3"/><defs><linearGradient id="g188" gradientUnits="userSpaceOnUse" x1="1642.3" x2="1892.3" y1="0" y2="0"><stop offset="0" stop-color="#6a9900"/><stop offset=".222" stop-color="#779900"/><stop offset=".444" stop-color="#849900"/><stop offset=".667" stop-color="#919900"/><stop offset=".778" stop-color="#989900"/><stop offset=".889" stop-color="#999300"/><stop offset="1" stop-color="#998d00"/></linearGradient><linearGradient id="g189" gradientUnits="userSpaceOnUse" x1="1642.3" x2="1892.3" y1="0" y2="0"><stop offset="0" stop-color="#6c9900"/><stop offset=".222" stop-color="#789900"/><stop offset=".444" stop-color="#859900"/><stop offset=".667" stop-color="#939900"/><stop offset=".778" stop-color="#999800"/><stop offset=".889" stop-color="#999100"/><stop offset="1" stop-color="#998b00"/></linearGradient><linearGradient id="g190" gradientUnits="userSpaceOnUse" x1="1642.3" x2="1892.3" y1="0" y2="0"><stop offset="0" stop-color="#6d9900"/><stop offset=".222" stop-color="#7a9900"/><stop offset=".444" stop-color="#879900"/><stop offset=".667" stop-color="#959900"/><stop offset=".778" stop-color="#999600"/><stop offset=".889" stop-color="#999000"/><stop offset="1" stop-color="#998900"/></linearGradient><linearGradient id="g191" gradientUnits="userSpaceOnUse" x1="1642.3" x2="1892.3" y1="0" y2="0"><stop offset="0" stop-color="#6e9901"/><stop offset=".222" stop-color="#7b9900"/><stop offset=".444" stop-color="#899900"/><stop offset=".667" stop-color="#979900"/><stop offset=".778" stop-color="#999400"/><stop offset=".889" stop-color="#998e00"/><stop offset="1" stop-color="#998800"/></linearGradient><linearGradient id="g192" gradientUnits="userSpaceOnUse" x1="1642.3" x2="1892.3" y1="0" y2="0"><stop offset="0" stop-color="#709902"/><stop offset=".111" stop-color="#769900"/><stop offset=".222" stop-color="#7d9900"/><stop offset=".444" stop-color="#8a9900"/><stop offset=".667" stop-color="#989900"/><stop offset=".889" stop-color="#998c00"/><stop offset="1" stop-color="#998600"/></linearGradient><linearGradient id="g193" gradientUnits="userSpaceOnUse" x1="1642.3" x2="1892.3" y1="0" y2="0"><stop offset="0" stop-color="#719903"/><stop offset=".222" stop-color="#7e9900"/><stop offset=".444" stop-color="#8c9900"/><stop offset=".667" stop-color="#999800"/><stop offset=".889" stop-color="#998a00"/><stop offset="1" stop-color="#998400"/></linearGradient><linearGradient id="g194" gradientUnits="userSpaceOnUse" x1="1642.3" x2="1892.3" y1="0" y2="0"><stop offset="0" stop-color="#739903"/><stop offset=".222" stop-color="#809900"/><stop offset=".444" stop-color="#8e9900"/><stop offset=".556" stop-color="#959900"/><stop offset=".667" stop-color="#999600"/><stop offset=".889" stop-color="#998900"/><stop offset="1" stop-color="#998300"/></linearGradient><linearGradient id="g195" gradientUnits="userSpaceOnUse" x1="1642.3" x2="1892.3" y1="0" y2="0"><stop offset="0" stop-color="#749904"/><stop offset=".222" stop-color="#829901"/><stop offset=".444" stop-color="#909900"/><stop offset=".556" stop-color="#979900"/><stop offset=".667" stop-color="#999400"/><stop offset=".889" stop-color="#998700"/><stop offset="1" stop-color="#998100"/></linearGradient><linearGradient id="g196" gradientUnits="userSpaceOnUse" x1="1642.3" x2="1892.3" y1="0" y2="0"><stop offset="0" stop-color="#769905"/><stop offset=".222" stop-color="#839902"/><stop offset=".444" stop-color="#919900"/><stop offset=".556" stop-color="#999900"/><stop offset=".667" stop-color="#999200"/><stop offset=".889" stop-color="#998500"/><stop offset="1" stop-color="#998000"/></linearGradient><linearGradient id="g197" gradientUnits="userSpaceOnUse" x1="1642.3" x2="1892.3" y1="0" y2="0"><stop offset="0" stop-color="#779906"/><stop offset=".222" stop-color="#859903"/><stop offset=".444" stop-color="#939900"/><stop offset=".556" stop-color="#999700"/><stop offset=".667" stop-color="#999000"/><stop offset=".889" stop-color="#998400"/><stop offset="1" stop-color="#997e00"/></linearGradient><linearGradient id="g198" gradientUnits="userSpaceOnUse" x1="1642.3" x2="1892.3" y1="0" y2="0"><stop offset="0" stop-color="#799907"/><stop offset=".222" stop-color="#879904"/><stop offset=".444" stop-color="#959901"/><stop offset=".556" stop-color="#999600"/><stop offset=".667" stop-color="#998f00"/><stop offset=".889" stop-color="#998200"/><stop offset="1" stop-color="#997d00"/></linearGradient><linearGradient id="g199" gradientUnits="userSpaceOnUse" x1="1642.3" x2="1892.3" y1="0" y2="0"><stop offset="0" stop-color="#7b9908"/><stop offset=".111" stop-color="#819906"/><stop offset=".222" stop-color="#899905"/><stop offset=".444" stop-color="#979902"/><stop offset=".556" stop-color="#999400"/><stop offset=".667" stop-color="#998d00"/><stop offset=".889" stop-color="#998100"/><stop offset="1" stop-color="#997b00"/></linearGradient><linearGradient id="g200" gradientUnits="userSpaceOnUse" x1="1642.3" x2="1892.3" y1="0" y2="0"><stop offset="0" stop-color="#7c9908"/><stop offset=".222" stop-color="#8a9905"/><stop offset=".444" stop-color="#999902"/><stop offset=".667" stop-color="#998b00"/><stop offset=".889" stop-color="#997f00"/><stop offset="1" stop-color="#997a00"/></linearGradient><linearGradient id="g201" gradientUnits="userSpaceOnUse" x1="1642.3" x2="1892.3" y1="0" y2="0"><stop offset="0" stop-color="#7e9909"/><stop offset=".222" stop-color="#8c9906"/><stop offset=".333" stop-color="#939905"/><stop offset=".444" stop-color="#999703"/><stop offset=".667" stop-color="#998900"/><stop offset=".889" stop-color="#997d00"/><stop offset="1" stop-color="#997800"/></linearGradient><linearGradient id="g202" gradientUnits="userSpaceOnUse" x1="1642.3" x2="1892.3" y1="0" y2="0"><stop offset="0" stop-color="#80990a"/><stop offset=".222" stop-color="#8e9907"/><stop offset=".333" stop-color="#959906"/><stop offset=".444" stop-color="#999504"/><stop offset=".667" stop-color="#998801"/><stop offset=".889" stop-color="#997c00"/><stop offset="1" stop-color="#997700"/></linearGradient><linearGradient id="g203" gradientUnits="userSpaceOnUse" x1="1642.3" x2="1892.3" y1="0" y2="0"><stop offset="0" stop-color="#81990b"/><stop offset=".222" stop-color="#909908"/><stop offset=".333" stop-color="#979907"/><stop offset=".444" stop-color="#999305"/><stop offset=".667" stop-color="#998602"/><stop offset=".778" stop-color="#998000"/><stop offset=".889" stop-color="#997a00"/><stop offset="1" stop-color="#997500"/></linearGradient><linearGradient id="g204" gradientUnits="userSpaceOnUse" x1="1642.3" x2="1892.3" y1="0" y2="0"><stop offset="0" stop-color="#83990c"/><stop offset=".222" stop-color="#929909"/><stop offset=".333" stop-color="#999908"/><stop offset=".444" stop-color="#999106"/><stop offset=".667" stop-color="#998402"/><stop offset=".889" stop-color="#997900"/><stop offset="1" stop-color="#997400"/></linearGradient><linearGradient id="g205" gradientUnits="userSpaceOnUse" x1="1642.3" x2="1892.3" y1="0" y2="0"><stop offset="0" stop-color="#85990d"/><stop offset=".222" stop-color="#94990a"/><stop offset=".333" stop-color="#999708"/><stop offset=".444" stop-color="#999007"/><stop offset=".667" stop-color="#998303"/><stop offset=".889" stop-color="#997700"/><stop offset="1" stop-color="#997200"/></linearGradient><linearGradient id="g206" gradientUnits="userSpaceOnUse" x1="1642.3" x2="1892.3" y1="0" y2="0"><stop offset="0" stop-color="#87990e"/><stop offset=".222" stop-color="#96990b"/><stop offset=".333" stop-color="#999509"/><stop offset=".444" stop-color="#998e07"/><stop offset=".667" stop-color="#998104"/><stop offset=".889" stop-color="#997601"/><stop offset="1" stop-color="#997100"/></linearGradient><linearGradient id="g207" gradientUnits="userSpaceOnUse" x1="1642.3" x2="1892.3" y1="0" y2="0"><stop offset="0" stop-color="#88990f"/><stop offset=".222" stop-color="#98990c"/><stop offset=".444" stop-color="#998c08"/><stop offset=".667" stop-color="#997f05"/><stop offset=".889" stop-color="#997402"/><stop offset="1" stop-color="#996f00"/></linearGradient><linearGradient id="g208" gradientUnits="userSpaceOnUse" x1="1642.3" x2="1892.3" y1="0" y2="0"><stop offset="0" stop-color="#8a9910"/><stop offset=".222" stop-color="#99980d"/><stop offset=".444" stop-color="#998a09"/><stop offset=".667" stop-color="#997e05"/><stop offset=".889" stop-color="#997302"/><stop offset="1" stop-color="#996e01"/></linearGradient><linearGradient id="g209" gradientUnits="userSpaceOnUse" x1="1642.3" x2="1892.3" y1="0" y2="0"><stop offset="0" stop-color="#8b9911"/><stop offset=".111" stop-color="#93990f"/><stop offset=".222" stop-color="#99970d"/><stop offset=".444" stop-color="#998909"/><stop offset=".667" stop-color="#997d06"/><stop offset=".889" stop-color="#997203"/><stop offset="1" stop-color="#996d02"/></linearGradient><linearGradient id="g210" gradientUnits="userSpaceOnUse" x1="1642.3" x2="1892.3" y1="0" y2="0"><stop offset="0" stop-color="#b1ff00"/><stop offset=".111" stop-color="#bbff00"/><stop offset=".222" stop-color="#c5ff00"/><stop offset=".333" stop-color="#d0ff00"/><stop offset=".444" stop-color="#dbff00"/><stop offset=".556" stop-color="#e6ff00"/><stop offset=".667" stop-color="#f2ff00"/><stop offset=".778" stop-color="#fdff00"/><stop offset=".833" stop-color="#fffb00"/><stop offset=".889" stop-color="#fff600"/><stop offset="1" stop-color="#ffeb00"/></linearGradient><linearGradient id="g211" gradientUnits="userSpaceOnUse" x1="1642.3" x2="1892.3" y1="0" y2="0"><stop offset="0" stop-color="#b2ff00"/><stop offset=".111" stop-color="#bcff00"/><stop offset=".222" stop-color="#c7ff00"/><stop offset=".333" stop-color="#d2ff00"/><stop offset=".444" stop-color="#ddff00"/><stop offset=".556" stop-color="#e8ff00"/><stop offset=".667" stop-color="#f3ff00"/><stop offset=".778" stop-color="#ffff00"/><stop offset=".889" stop-color="#fff400"/><stop offset="1" stop-color="#ffe900"/></linearGradient><linearGradient id="g212" gradientUnits="userSpaceOnUse" x1="1642.3" x2="1892.3" y1="0" y2="0"><stop offset="0" stop-color="#b3ff00"/><stop offset=".111" stop-color="#beff00"/><stop offset=".222" stop-color="#c8ff00"/><stop offset=".333" stop-color="#d3ff00"/><stop offset=".444" stop-color="#deff00"/><stop offset=".556" stop-color="#eaff00"/><stop offset=".667" stop-color="#f5ff00"/><stop offset=".722" stop-color="#fbff00"/><stop offset=".778" stop-color="#fffd00"/><stop offset=".889" stop-color="#fff200"/><stop offset="1" stop-color="#ffe800"/></linearGradient><linearGradient id="g213" gradientUnits="userSpaceOnUse" x1="1642.3" x2="1892.3" y1="0" y2="0"><stop offset="0" stop-color="#b5ff00"/><stop offset=".111" stop-color="#bfff00"/><stop offset=".222" stop-color="#caff00"/><stop offset=".333" stop-color="#d5ff00"/><stop offset=".444" stop-color="#e0ff00"/><stop offset=".556" stop-color="#ebff00"/><stop offset=".667" stop-color="#f7ff00"/><stop offset=".722" stop-color="#fdff00"/><stop offset=".778" stop-color="#fffb00"/><stop offset=".889" stop-color="#fff000"/><stop offset="1" stop-color="#ffe600"/></linearGradient><linearGradient id="g214" gradientUnits="userSpaceOnUse" x1="1642.3" x2="1892.3" y1="0" y2="0"><stop offset="0" stop-color="#b6ff01"/><stop offset=".111" stop-color="#c1ff00"/><stop offset=".222" stop-color="#cbff00"/><stop offset=".333" stop-color="#d6ff00"/><stop offset=".444" stop-color="#e2ff00"/><stop offset=".556" stop-color="#edff00"/><stop offset=".667" stop-color="#f9ff00"/><stop offset=".722" stop-color="#feff00"/><stop offset=".778" stop-color="#fffa00"/><stop offset=".889" stop-color="#ffef00"/><stop offset="1" stop-color="#ffe400"/></linearGradient><linearGradient id="g215" gradientUnits="userSpaceOnUse" x1="1642.3" x2="1892.3" y1="0" y2="0"><stop offset="0" stop-color="#b8ff01"/><stop offset=".111" stop-color="#c2ff00"/><stop offset=".222" stop-color="#cdff00"/><stop offset=".333" stop-color="#d8ff00"/><stop offset=".444" stop-color="#e3ff00"/><stop offset=".556" stop-color="#efff00"/><stop offset=".667" stop-color="#faff00"/><stop offset=".722" stop-color="#fffe00"/><stop offset=".778" stop-color="#fff800"/><stop offset=".889" stop-color="#ffed00"/><stop offset="1" stop-color="#ffe300"/></linearGradient><linearGradient id="g216" gradientUnits="userSpaceOnUse" x1="1642.3" x2="1892.3" y1="0" y2="0"><stop offset="0" stop-color="#b9ff02"/><stop offset=".111" stop-color="#c4ff00"/><stop offset=".222" stop-color="#cfff00"/><stop offset=".333" stop-color="#daff00"/><stop offset=".444" stop-color="#e5ff00"/><stop offset=".556" stop-color="#f0ff00"/><stop offset=".667" stop-color="#fcff00"/><stop offset=".722" stop-color="#fffc00"/><stop offset=".778" stop-color="#fff600"/><stop offset=".889" stop-color="#ffeb00"/><stop offset="1" stop-color="#ffe100"/></linearGradient><linearGradient id="g217" gradientUnits="userSpaceOnUse" x1="1642.3" x2="1892.3" y1="0" y2="0"><stop offset="0" stop-color="#baff03"/><stop offset=".111" stop-color="#c5ff01"/><stop offset=".222" stop-color="#d0ff00"/><stop offset=".333" stop-color="#dbff00"/><stop offset=".444" stop-color="#e7ff00"/><stop offset=".556" stop-color="#f2ff00"/><stop offset=".667" stop-color="#feff00"/><stop offset=".778" stop-color="#fff400"/><stop offset=".889" stop-color="#ffea00"/><stop offset="1" stop-color="#ffdf00"/></linearGradient><linearGradient id="g218" gradientUnits="userSpaceOnUse" x1="1642.3" x2="1892.3" y1="0" y2="0"><stop offset="0" stop-color="#bcff04"/><stop offset=".111" stop-color="#c7ff01"/><stop offset=".222" stop-color="#d2ff00"/><stop offset=".333" stop-color="#ddff00"/><stop offset=".444" stop-color="#e8ff00"/><stop offset=".556" stop-color="#f4ff00"/><stop offset=".667" stop-color="#fffe00"/><stop offset=".778" stop-color="#fff300"/><stop offset=".889" stop-color="#ffe800"/><stop offset="1" stop-color="#ffde00"/></linearGradient><linearGradient id="g219" gradientUnits="userSpaceOnUse" x1="1642.3" x2="1892.3" y1="0" y2="0"><stop offset="0" stop-color="#bdff05"/><stop offset=".111" stop-color="#c8ff02"/><stop offset=".222" stop-color="#d3ff00"/><stop offset=".333" stop-color="#dfff00"/><stop offset=".444" stop-color="#eaff00"/><stop offset=".556" stop-color="#f6ff00"/><stop offset=".611" stop-color="#fcff00"/><stop offset=".667" stop-color="#fffc00"/><stop offset=".778" stop-color="#fff100"/><stop offset=".889" stop-color="#ffe600"/><stop offset="1" stop-color="#ffdc00"/></linearGradient><linearGradient id="g220" gradientUnits="userSpaceOnUse" x1="1642.3" x2="1892.3" y1="0" y2="0"><stop offset="0" stop-color="#bfff05"/><stop offset=".111" stop-color="#caff03"/><stop offset=".222" stop-color="#d5ff00"/><stop offset=".333" stop-color="#e0ff00"/><stop offset=".444" stop-color="#ecff00"/><stop offset=".556" stop-color="#f8ff00"/><stop offset=".611" stop-color="#feff00"/><stop offset=".667" stop-color="#fffa00"/><stop offset=".778" stop-color="#ffef00"/><stop offset=".889" stop-color="#ffe400"/><stop offset="1" stop-color="#ffdb00"/></linearGradient><linearGradient id="g221" gradientUnits="userSpaceOnUse" x1="1642.3" x2="1892.3" y1="0" y2="0"><stop offset="0" stop-color="#c0ff06"/><stop offset=".111" stop-color="#cbff04"/><stop offset=".222" stop-color="#d7ff01"/><stop offset=".333" stop-color="#e2ff00"/><stop offset=".444" stop-color="#eeff00"/><stop offset=".556" stop-color="#faff00"/><stop offset=".611" stop-color="#fffe00"/><stop offset=".667" stop-color="#fff900"/><stop offset=".778" stop-color="#ffed00"/><stop offset=".889" stop-color="#ffe300"/><stop offset="1" stop-color="#ffd900"/></linearGradient><linearGradient id="g222" gradientUnits="userSpaceOnUse" x1="1642.3" x2="1892.3" y1="0" y2="0"><stop offset="0" stop-color="#c2ff07"/><stop offset=".111" stop-color="#cdff05"/><stop offset=".222" stop-color="#d8ff02"/><stop offset=".333" stop-color="#e4ff00"/><stop offset=".444" stop-color="#efff00"/><stop offset=".556" stop-color="#fbff00"/><stop offset=".611" stop-color="#fffd00"/><stop offset=".667" stop-color="#fff700"/><stop offset=".778" stop-color="#ffec00"/><stop offset=".889" stop-color="#ffe100"/><stop offset="1" stop-color="#ffd700"/></linearGradient><linearGradient id="g223" gradientUnits="userSpaceOnUse" x1="1642.3" x2="1892.3" y1="0" y2="0"><stop offset="0" stop-color="#c3ff08"/><stop offset=".111" stop-color="#cfff05"/><stop offset=".222" stop-color="#daff03"/><stop offset=".333" stop-color="#e5ff00"/><stop offset=".444" stop-color="#f1ff00"/><stop offset=".556" stop-color="#fdff00"/><stop offset=".611" stop-color="#fffb00"/><stop offset=".667" stop-color="#fff500"/><stop offset=".778" stop-color="#ffea00"/><stop offset=".889" stop-color="#ffe000"/><stop offset="1" stop-color="#ffd600"/></linearGradient><linearGradient id="g224" gradientUnits="userSpaceOnUse" x1="1642.3" x2="1892.3" y1="0" y2="0"><stop offset="0" stop-color="#c5ff09"/><stop offset=".111" stop-color="#d0ff06"/><stop offset=".222" stop-color="#dcff04"/><stop offset=".333" stop-color="#e7ff01"/><stop offset=".444" stop-color="#f3ff00"/><stop offset=".556" stop-color="#ffff00"/><stop offset=".667" stop-color="#fff300"/><stop offset=".778" stop-color="#ffe800"/><stop offset=".889" stop-color="#ffde00"/><stop offset="1" stop-color="#ffd400"/></linearGradient><linearGradient id="g225" gradientUnits="userSpaceOnUse" x1="1642.3" x2="1892.3" y1="0" y2="0"><stop offset="0" stop-color="#c6ff09"/><stop offset=".111" stop-color="#d2ff07"/><stop offset=".222" stop-color="#ddff05"/><stop offset=".333" stop-color="#e9ff02"/><stop offset=".444" stop-color="#f5ff00"/><stop offset=".500" stop-color="#fbff00"/><stop offset=".556" stop-color="#fffd00"/><stop offset=".667" stop-color="#fff100"/><stop offset=".778" stop-color="#ffe600"/><stop offset=".889" stop-color="#ffdc00"/><stop offset="1" stop-color="#ffd300"/></linearGradient><linearGradient id="g226" gradientUnits="userSpaceOnUse" x1="1642.3" x2="1892.3" y1="0" y2="0"><stop offset="0" stop-color="#c8ff0a"/><stop offset=".111" stop-color="#d3ff08"/><stop offset=".222" stop-color="#dfff05"/><stop offset=".333" stop-color="#ebff03"/><stop offset=".444" stop-color="#f7ff00"/><stop offset=".500" stop-color="#fdff00"/><stop offset=".556" stop-color="#fffb00"/><stop offset=".667" stop-color="#ffef00"/><stop offset=".778" stop-color="#ffe500"/><stop offset=".889" stop-color="#ffdb00"/><stop offset="1" stop-color="#ffd100"/></linearGradient><linearGradient id="g227" gradientUnits="userSpaceOnUse" x1="1642.3" x2="1892.3" y1="0" y2="0"><stop offset="0" stop-color="#caff0b"/><stop offset=".111" stop-color="#d5ff09"/><stop offset=".222" stop-color="#e1ff06"/><stop offset=".333" stop-color="#ecff04"/><stop offset=".444" stop-color="#f9ff01"/><stop offset=".500" stop-color="#ffff00"/><stop offset=".556" stop-color="#fff900"/><stop offset=".667" stop-color="#ffee00"/><stop offset=".778" stop-color="#ffe300"/><stop offset=".889" stop-color="#ffd900"/><stop offset="1" stop-color="#ffd000"/></linearGradient><linearGradient id="g228" gradientUnits="userSpaceOnUse" x1="1642.3" x2="1892.3" y1="0" y2="0"><stop offset="0" stop-color="#cbff0c"/><stop offset=".111" stop-color="#d7ff0a"/><stop offset=".222" stop-color="#e2ff07"/><stop offset=".333" stop-color="#eeff05"/><stop offset=".444" stop-color="#faff02"/><stop offset=".500" stop-color="#fffd01"/><stop offset=".556" stop-color="#fff700"/><stop offset=".667" stop-color="#ffec00"/><stop offset=".778" stop-color="#ffe100"/><stop offset=".889" stop-color="#ffd700"/><stop offset="1" stop-color="#ffce00"/></linearGradient><linearGradient id="g229" gradientUnits="userSpaceOnUse" x1="1642.3" x2="1892.3" y1="0" y2="0"><stop offset="0" stop-color="#cdff0d"/><stop offset=".111" stop-color="#d8ff0a"/><stop offset=".222" stop-color="#e4ff08"/><stop offset=".333" stop-color="#f0ff05"/><stop offset=".444" stop-color="#fcff03"/><stop offset=".500" stop-color="#fffb02"/><stop offset=".556" stop-color="#fff500"/><stop offset=".667" stop-color="#ffea00"/><stop offset=".778" stop-color="#ffe000"/><stop offset=".889" stop-color="#ffd600"/><stop offset="1" stop-color="#ffcd00"/></linearGradient><linearGradient id="g230" gradientUnits="userSpaceOnUse" x1="1642.3" x2="1892.3" y1="0" y2="0"><stop offset="0" stop-color="#ceff0e"/><stop offset=".111" stop-color="#daff0b"/><stop offset=".222" stop-color="#e6ff09"/><stop offset=".333" stop-color="#f2ff06"/><stop offset=".444" stop-color="#feff04"/><stop offset=".556" stop-color="#fff401"/><stop offset=".667" stop-color="#ffe800"/><stop offset=".778" stop-color="#ffde00"/><stop offset=".889" stop-color="#ffd400"/><stop offset="1" stop-color="#ffcb00"/></linearGradient><linearGradient id="g231" gradientUnits="userSpaceOnUse" x1="1642.3" x2="1892.3" y1="0" y2="0"><stop offset="0" stop-color="#d0ff0f"/><stop offset=".111" stop-color="#dcff0c"/><stop offset=".222" stop-color="#e8ff0a"/><stop offset=".333" stop-color="#f4ff07"/><stop offset=".444" stop-color="#fffe05"/><stop offset=".556" stop-color="#fff202"/><stop offset=".667" stop-color="#ffe700"/><stop offset=".778" stop-color="#ffdc00"/><stop offset=".889" stop-color="#ffd300"/><stop offset="1" stop-color="#ffca00"/></linearGradient><linearGradient id="g232" gradientUnits="userSpaceOnUse" x1="1642.3" x2="1892.3" y1="0" y2="0"><stop offset="0" stop-color="#d2ff10"/><stop offset=".111" stop-color="#deff0d"/><stop offset=".167" stop-color="#e3ff0c"/><stop offset=".222" stop-color="#eaff0b"/><stop offset=".333" stop-color="#f6ff08"/><stop offset=".389" stop-color="#fcff07"/><stop offset=".444" stop-color="#fffc05"/><stop offset=".556" stop-color="#fff003"/><stop offset=".667" stop-color="#ffe500"/><stop offset=".778" stop-color="#ffdb00"/><stop offset=".889" stop-color="#ffd100"/><stop offset="1" stop-color="#ffc800"/></linearGradient><linearGradient id="g233" gradientUnits="userSpaceOnUse" x1="1642.3" x2="1892.3" y1="0" y2="0"><stop offset="0" stop-color="#d3ff10"/><stop offset=".111" stop-color="#dfff0e"/><stop offset=".222" stop-color="#ebff0c"/><stop offset=".333" stop-color="#f8ff09"/><stop offset=".389" stop-color="#feff08"/><stop offset=".444" stop-color="#fffa06"/><stop offset=".556" stop-color="#ffee04"/><stop offset=".667" stop-color="#ffe301"/><stop offset=".778" stop-color="#ffd900"/><stop offset=".889" stop-color="#ffd000"/><stop offset="1" stop-color="#ffc700"/></linearGradient><linearGradient id="g234" gradientUnits="userSpaceOnUse" x1="1642.3" x2="1892.3" y1="0" y2="0"><stop offset="0" stop-color="#d5ff11"/><stop offset=".111" stop-color="#e1ff0f"/><stop offset=".222" stop-color="#edff0c"/><stop offset=".333" stop-color="#faff0a"/><stop offset=".389" stop-color="#fffe09"/><stop offset=".444" stop-color="#fff807"/><stop offset=".556" stop-color="#ffec04"/><stop offset=".667" stop-color="#ffe202"/><stop offset=".778" stop-color="#ffd700"/><stop offset=".889" stop-color="#ffce00"/><stop offset="1" stop-color="#ffc500"/></linearGradient><linearGradient id="g235" gradientUnits="userSpaceOnUse" x1="1642.3" x2="1892.3" y1="0" y2="0"><stop offset="0" stop-color="#d7ff12"/><stop offset=".111" stop-color="#e3ff10"/><stop offset=".222" stop-color="#efff0d"/><stop offset=".333" stop-color="#fcff0b"/><stop offset=".389" stop-color="#fffc09"/><stop offset=".444" stop-color="#fff608"/><stop offset=".556" stop-color="#ffeb05"/><stop offset=".667" stop-color="#ffe003"/><stop offset=".778" stop-color="#ffd600"/><stop offset=".889" stop-color="#ffcc00"/><stop offset="1" stop-color="#ffc400"/></linearGradient><linearGradient id="g236" gradientUnits="userSpaceOnUse" x1="1642.3" x2="1892.3" y1="0" y2="0"><stop offset="0" stop-color="#d9ff13"/><stop offset=".111" stop-color="#e5ff11"/><stop offset=".222" stop-color="#f1ff0e"/><stop offset=".333" stop-color="#fdff0c"/><stop offset=".389" stop-color="#fffa0a"/><stop offset=".444" stop-color="#fff409"/><stop offset=".556" stop-color="#ffe906"/><stop offset=".667" stop-color="#ffde03"/><stop offset=".778" stop-color="#ffd401"/><stop offset=".889" stop-color="#ffcb00"/><stop offset="1" stop-color="#ffc200"/></linearGradient><linearGradient id="g237" gradientUnits="userSpaceOnUse" x1="1642.3" x2="1892.3" y1="0" y2="0"><stop offset="0" stop-color="#daff14"/><stop offset=".111" stop-color="#e6ff12"/><stop offset=".222" stop-color="#f3ff0f"/><stop offset=".333" stop-color="#ffff0d"/><stop offset=".444" stop-color="#fff20a"/><stop offset=".556" stop-color="#ffe707"/><stop offset=".667" stop-color="#ffdc04"/><stop offset=".778" stop-color="#ffd302"/><stop offset=".833" stop-color="#ffce00"/><stop offset=".889" stop-color="#ffc900"/><stop offset="1" stop-color="#ffc100"/></linearGradient><linearGradient id="g238" gradientUnits="userSpaceOnUse" x1="1642.3" x2="1892.3" y1="0" y2="0"><stop offset="0" stop-color="#dcff15"/><stop offset=".111" stop-color="#e8ff13"/><stop offset=".222" stop-color="#f5ff10"/><stop offset=".278" stop-color="#fbff0f"/><stop offset=".333" stop-color="#fffd0d"/><stop offset=".444" stop-color="#fff00a"/><stop offset=".556" stop-color="#ffe508"/><stop offset=".667" stop-color="#ffdb05"/><stop offset=".778" stop-color="#ffd102"/><stop offset=".889" stop-color="#ffc800"/><stop offset="1" stop-color="#ffbf00"/></linearGradient><linearGradient id="g239" gradientUnits="userSpaceOnUse" x1="1642.3" x2="1892.3" y1="0" y2="0"><stop offset="0" stop-color="#deff16"/><stop offset=".111" stop-color="#eaff14"/><stop offset=".222" stop-color="#f7ff11"/><stop offset=".278" stop-color="#fdff10"/><stop offset=".333" stop-color="#fffb0e"/><stop offset=".389" stop-color="#fff40d"/><stop offset=".444" stop-color="#ffef0b"/><stop offset=".556" stop-color="#ffe308"/><stop offset=".667" stop-color="#ffd906"/><stop offset=".778" stop-color="#ffcf03"/><stop offset=".889" stop-color="#ffc601"/><stop offset="1" stop-color="#ffbe00"/></linearGradient><linearGradient id="g240" gradientUnits="userSpaceOnUse" x1="1642.3" x2="1892.3" y1="0" y2="0"><stop offset="0" stop-color="#e0ff17"/><stop offset=".111" stop-color="#ecff15"/><stop offset=".222" stop-color="#f9ff12"/><stop offset=".278" stop-color="#ffff11"/><stop offset=".333" stop-color="#fff90f"/><stop offset=".444" stop-color="#ffed0c"/><stop offset=".556" stop-color="#ffe209"/><stop offset=".667" stop-color="#ffd706"/><stop offset=".778" stop-color="#ffce04"/><stop offset=".889" stop-color="#ffc502"/><stop offset=".944" stop-color="#ffc100"/><stop offset="1" stop-color="#ffbc00"/></linearGradient><linearGradient id="g241" gradientUnits="userSpaceOnUse" x1="1642.3" x2="1892.3" y1="0" y2="0"><stop offset="0" stop-color="#e1ff18"/><stop offset=".111" stop-color="#eeff16"/><stop offset=".222" stop-color="#fbff13"/><stop offset=".278" stop-color="#fffd12"/><stop offset=".333" stop-color="#fff710"/><stop offset=".444" stop-color="#ffeb0d"/><stop offset=".556" stop-color="#ffe00a"/><stop offset=".667" stop-color="#ffd607"/><stop offset=".778" stop-color="#ffcc05"/><stop offset=".889" stop-color="#ffc302"/><stop offset="1" stop-color="#ffbb00"/></linearGradient><linearGradient id="g242" gradientUnits="userSpaceOnUse" x1="1642.3" x2="1892.3" y1="0" y2="0"><stop offset="0" stop-color="#e3ff19"/><stop offset=".111" stop-color="#f0ff16"/><stop offset=".222" stop-color="#fdff14"/><stop offset=".278" stop-color="#fffb12"/><stop offset=".333" stop-color="#fff511"/><stop offset=".444" stop-color="#ffe90e"/><stop offset=".556" stop-color="#ffde0b"/><stop offset=".667" stop-color="#ffd408"/><stop offset=".778" stop-color="#ffcb05"/><stop offset=".889" stop-color="#ffc203"/><stop offset="1" stop-color="#ffba01"/></linearGradient><linearGradient id="g243" gradientUnits="userSpaceOnUse" x1="1642.3" x2="1892.3" y1="0" y2="0"><stop offset="0" stop-color="#e5ff1a"/><stop offset=".111" stop-color="#f2ff17"/><stop offset=".222" stop-color="#ffff15"/><stop offset=".333" stop-color="#fff312"/><stop offset=".444" stop-color="#ffe70e"/><stop offset=".556" stop-color="#ffdc0b"/><stop offset=".667" stop-color="#ffd209"/><stop offset=".778" stop-color="#ffc906"/><stop offset=".889" stop-color="#ffc004"/><stop offset="1" stop-color="#ffb801"/></linearGradient><linearGradient id="g244" gradientUnits="userSpaceOnUse" x1="1642.3" x2="1892.3" y1="0" y2="0"><stop offset="0" stop-color="#e7ff1b"/><stop offset=".111" stop-color="#f4ff18"/><stop offset=".167" stop-color="#faff17"/><stop offset=".222" stop-color="#fffd16"/><stop offset=".333" stop-color="#fff112"/><stop offset=".444" stop-color="#ffe50f"/><stop offset=".556" stop-color="#ffdb0c"/><stop offset=".667" stop-color="#ffd109"/><stop offset=".778" stop-color="#ffc807"/><stop offset=".889" stop-color="#ffbf04"/><stop offset="1" stop-color="#ffb702"/></linearGradient><linearGradient id="g245" gradientUnits="userSpaceOnUse" x1="1642.3" x2="1892.3" y1="0" y2="0"><stop offset="0" stop-color="#e8ff1c"/><stop offset=".111" stop-color="#f5ff19"/><stop offset=".167" stop-color="#fbff18"/><stop offset=".222" stop-color="#fffc16"/><stop offset=".333" stop-color="#fff013"/><stop offset=".444" stop-color="#ffe410"/><stop offset=".556" stop-color="#ffda0d"/><stop offset=".667" stop-color="#ffd00a"/><stop offset=".778" stop-color="#ffc707"/><stop offset=".889" stop-color="#ffbe05"/><stop offset="1" stop-color="#ffb603"/></linearGradient><clipPath id="ci"><rect x="1642.3" y="124.2" width="250.0" height="210.5"/></clipPath><clipPath id="cit"><path d="M2870.8 965.7L1170.8 -168.3L420.8 2099.7Z"/></clipPath></defs><rect x="1639.0" y="120.9" width="256.6" height="217.1" fill="#2e2e2e"/><g clip-path="url(#ci)"><rect x="1642.3" y="124.0" width="250.0" height="10.6" fill="url(#g188)"/><rect x="1642.3" y="134.0" width="250.0" height="10.6" fill="url(#g189)"/><rect x="1642.3" y="144.0" width="250.0" height="10.6" fill="url(#g190)"/><rect x="1642.3" y="154.0" width="250.0" height="10.6" fill="url(#g191)"/><rect x="1642.3" y="164.0" width="250.0" height="10.6" fill="url(#g192)"/><rect x="1642.3" y="174.0" width="250.0" height="10.6" fill="url(#g193)"/><rect x="1642.3" y="184.0" width="250.0" height="10.6" fill="url(#g194)"/><rect x="1642.3" y="194.0" width="250.0" height="10.6" fill="url(#g195)"/><rect x="1642.3" y="204.0" width="250.0" height="10.6" fill="url(#g196)"/><rect x="1642.3" y="214.0" width="250.0" height="10.6" fill="url(#g197)"/><rect x="1642.3" y="224.0" width="250.0" height="10.6" fill="url(#g198)"/><rect x="1642.3" y="234.0" width="250.0" height="10.6" fill="url(#g199)"/><rect x="1642.3" y="244.0" width="250.0" height="10.6" fill="url(#g200)"/><rect x="1642.3" y="254.0" width="250.0" height="10.6" fill="url(#g201)"/><rect x="1642.3" y="264.0" width="250.0" height="10.6" fill="url(#g202)"/><rect x="1642.3" y="274.0" width="250.0" height="10.6" fill="url(#g203)"/><rect x="1642.3" y="284.0" width="250.0" height="10.6" fill="url(#g204)"/><rect x="1642.3" y="294.0" width="250.0" height="10.6" fill="url(#g205)"/><rect x="1642.3" y="304.0" width="250.0" height="10.6" fill="url(#g206)"/><rect x="1642.3" y="314.0" width="250.0" height="10.6" fill="url(#g207)"/><rect x="1642.3" y="324.0" width="250.0" height="10.6" fill="url(#g208)"/><rect x="1642.3" y="334.0" width="250.0" height="2.3" fill="url(#g209)"/><g clip-path="url(#cit)"><rect x="1642.3" y="124.0" width="250.0" height="6.6" fill="url(#g210)"/><rect x="1642.3" y="130.0" width="250.0" height="6.6" fill="url(#g211)"/><rect x="1642.3" y="136.0" width="250.0" height="6.6" fill="url(#g212)"/><rect x="1642.3" y="142.0" width="250.0" height="6.6" fill="url(#g213)"/><rect x="1642.3" y="148.0" width="250.0" height="6.6" fill="url(#g214)"/><rect x="1642.3" y="154.0" width="250.0" height="6.6" fill="url(#g215)"/><rect x="1642.3" y="160.0" width="250.0" height="6.6" fill="url(#g216)"/><rect x="1642.3" y="166.0" width="250.0" height="6.6" fill="url(#g217)"/><rect x="1642.3" y="172.0" width="250.0" height="6.6" fill="url(#g218)"/><rect x="1642.3" y="178.0" width="250.0" height="6.6" fill="url(#g219)"/><rect x="1642.3" y="184.0" width="250.0" height="6.6" fill="url(#g220)"/><rect x="1642.3" y="190.0" width="250.0" height="6.6" fill="url(#g221)"/><rect x="1642.3" y="196.0" width="250.0" height="6.6" fill="url(#g222)"/><rect x="1642.3" y="202.0" width="250.0" height="6.6" fill="url(#g223)"/><rect x="1642.3" y="208.0" width="250.0" height="6.6" fill="url(#g224)"/><rect x="1642.3" y="214.0" width="250.0" height="6.6" fill="url(#g225)"/><rect x="1642.3" y="220.0" width="250.0" height="6.6" fill="url(#g226)"/><rect x="1642.3" y="226.0" width="250.0" height="6.6" fill="url(#g227)"/><rect x="1642.3" y="232.0" width="250.0" height="6.6" fill="url(#g228)"/><rect x="1642.3" y="238.0" width="250.0" height="6.6" fill="url(#g229)"/><rect x="1642.3" y="244.0" width="250.0" height="6.6" fill="url(#g230)"/><rect x="1642.3" y="250.0" width="250.0" height="6.6" fill="url(#g231)"/><rect x="1642.3" y="256.0" width="250.0" height="6.6" fill="url(#g232)"/><rect x="1642.3" y="262.0" width="250.0" height="6.6" fill="url(#g233)"/><rect x="1642.3" y="268.0" width="250.0" height="6.6" fill="url(#g234)"/><rect x="1642.3" y="274.0" width="250.0" height="6.6" fill="url(#g235)"/><rect x="1642.3" y="280.0" width="250.0" height="6.6" fill="url(#g236)"/><rect x="1642.3" y="286.0" width="250.0" height="6.6" fill="url(#g237)"/><rect x="1642.3" y="292.0" width="250.0" height="6.6" fill="url(#g238)"/><rect x="1642.3" y="298.0" width="250.0" height="6.6" fill="url(#g239)"/><rect x="1642.3" y="304.0" width="250.0" height="6.6" fill="url(#g240)"/><rect x="1642.3" y="310.0" width="250.0" height="6.6" fill="url(#g241)"/><rect x="1642.3" y="316.0" width="250.0" height="6.6" fill="url(#g242)"/><rect x="1642.3" y="322.0" width="250.0" height="6.6" fill="url(#g243)"/><rect x="1642.3" y="328.0" width="250.0" height="6.6" fill="url(#g244)"/><rect x="1642.3" y="334.0" width="250.0" height="2.3" fill="url(#g245)"/></g></g><rect x="1642.3" y="124.2" width="250.0" height="210.5" fill="none" stroke="#9a9a9a" stroke-width="1.4"/><rect x="1757.7" y="220.5" width="15.6" height="15.6" fill="none" stroke="#fff" stroke-width="1.5"/><circle cx="1794.7" cy="227.0" r="4.5" fill="#ffff00" stroke="#000" stroke-width="1.2"/><rect x="1607.8" y="641" width="286.9" height="30.9" fill="#333"/></svg>
<span class="t" style="left:1470.38px;top:96.00px;font-size:16.2px;color:#d8d8d8;transform:scaleX(0.9746);transform-origin:50% 0;">CIE 1931 xy</span>
<span class="t" style="left:1155.55px;top:689.00px;font-size:16.0px;color:#e4e4e4;transform:scaleX(1.0350);transform-origin:50% 0;">0</span>
<span class="t" style="left:1144.10px;top:671.00px;font-size:16.0px;color:#e4e4e4;transform:scaleX(1.0350);transform-origin:100% 0;">0</span>
<span class="t" style="left:1235.28px;top:689.00px;font-size:16.0px;color:#e4e4e4;transform:scaleX(1.0350);transform-origin:50% 0;">0,1</span>
<span class="t" style="left:1130.76px;top:604.00px;font-size:16.0px;color:#e4e4e4;transform:scaleX(1.0350);transform-origin:100% 0;">0,1</span>
<span class="t" style="left:1324.13px;top:689.00px;font-size:16.0px;color:#e4e4e4;transform:scaleX(1.0350);transform-origin:50% 0;">0,2</span>
<span class="t" style="left:1130.76px;top:537.00px;font-size:16.0px;color:#e4e4e4;transform:scaleX(1.0350);transform-origin:100% 0;">0,2</span>
<span class="t" style="left:1410.98px;top:689.00px;font-size:16.0px;color:#e4e4e4;transform:scaleX(1.0350);transform-origin:50% 0;">0,3</span>
<span class="t" style="left:1130.76px;top:471.00px;font-size:16.0px;color:#e4e4e4;transform:scaleX(1.0350);transform-origin:100% 0;">0,3</span>
<span class="t" style="left:1499.63px;top:689.00px;font-size:16.0px;color:#e4e4e4;transform:scaleX(1.0350);transform-origin:50% 0;">0,4</span>
<span class="t" style="left:1130.76px;top:404.00px;font-size:16.0px;color:#e4e4e4;transform:scaleX(1.0350);transform-origin:100% 0;">0,4</span>
<span class="t" style="left:1588.38px;top:689.00px;font-size:16.0px;color:#e4e4e4;transform:scaleX(1.0350);transform-origin:50% 0;">0,5</span>
<span class="t" style="left:1130.76px;top:337.00px;font-size:16.0px;color:#e4e4e4;transform:scaleX(1.0350);transform-origin:100% 0;">0,5</span>
<span class="t" style="left:1674.58px;top:689.00px;font-size:16.0px;color:#e4e4e4;transform:scaleX(1.0350);transform-origin:50% 0;">0,6</span>
<span class="t" style="left:1130.76px;top:270.00px;font-size:16.0px;color:#e4e4e4;transform:scaleX(1.0350);transform-origin:100% 0;">0,6</span>
<span class="t" style="left:1763.08px;top:689.00px;font-size:16.0px;color:#e4e4e4;transform:scaleX(1.0350);transform-origin:50% 0;">0,7</span>
<span class="t" style="left:1130.76px;top:204.00px;font-size:16.0px;color:#e4e4e4;transform:scaleX(1.0350);transform-origin:100% 0;">0,7</span>
<span class="t" style="left:1851.58px;top:689.00px;font-size:16.0px;color:#e4e4e4;transform:scaleX(1.0350);transform-origin:50% 0;">0,8</span>
<span class="t" style="left:1130.76px;top:137.00px;font-size:16.0px;color:#e4e4e4;transform:scaleX(1.0350);transform-origin:100% 0;">0,8</span>
<span class="t" style="left:1609.00px;top:646.00px;font-size:23px;color:#f4f4f4;transform:scaleX(0.9768);transform-origin:0 0;">RGB Triplet: 255, 255, 0</span>
<div style="position:absolute;left:376.0px;top:735.0px;width:1532.6px;height:256.2px;overflow:hidden;">
<div style="position:absolute;left:0.00px;top:0.60px;width:1532.60px;height:31.10px;background:linear-gradient(180deg,#303030 0%,#2a2a2a 46%,#171717 52%,#121212 100%);"></div>
<div style="position:absolute;left:0.00px;top:0.60px;width:18.50px;height:31.10px;background:#000;"></div>
<div style="position:absolute;left:0.00px;top:31.70px;width:1532.60px;height:29.40px;background:#404040;"></div>
<div style="position:absolute;left:0.00px;top:31.70px;width:18.50px;height:29.40px;background:linear-gradient(90deg,#1c1c1c,#2c2c2c);"></div>
<div style="position:absolute;left:0.00px;top:61.10px;width:1532.60px;height:29.60px;background:#808080;"></div>
<div style="position:absolute;left:0.00px;top:61.10px;width:18.50px;height:29.60px;background:linear-gradient(90deg,#1c1c1c,#2c2c2c);"></div>
<div style="position:absolute;left:0.00px;top:90.70px;width:1532.60px;height:29.20px;background:#404040;"></div>
<div style="position:absolute;left:0.00px;top:90.70px;width:18.50px;height:29.20px;background:linear-gradient(90deg,#1c1c1c,#2c2c2c);"></div>
<div style="position:absolute;left:0.00px;top:119.90px;width:1532.60px;height:29.50px;background:#808080;"></div>
<div style="position:absolute;left:0.00px;top:119.90px;width:18.50px;height:29.50px;background:linear-gradient(90deg,#1c1c1c,#2c2c2c);"></div>
<div style="position:absolute;left:0.00px;top:149.40px;width:1532.60px;height:29.50px;background:#404040;"></div>
<div style="position:absolute;left:0.00px;top:149.40px;width:18.50px;height:29.50px;background:linear-gradient(90deg,#1c1c1c,#2c2c2c);"></div>
<div style="position:absolute;left:0.00px;top:178.90px;width:1532.60px;height:29.70px;background:#808080;"></div>
<div style="position:absolute;left:0.00px;top:178.90px;width:18.50px;height:29.70px;background:linear-gradient(90deg,#1c1c1c,#2c2c2c);"></div>
<div style="position:absolute;left:0.00px;top:208.60px;width:1532.60px;height:29.20px;background:#404040;"></div>
<div style="position:absolute;left:0.00px;top:208.60px;width:18.50px;height:29.20px;background:linear-gradient(90deg,#1c1c1c,#2c2c2c);"></div>
<div style="position:absolute;left:18.50px;top:237.80px;width:1514.10px;height:18.40px;background:#606060;border-radius:3px;"></div>
<div style="position:absolute;left:43.00px;top:239.30px;width:661.00px;height:15.40px;background:#454545;border-radius:7.7px;"></div>
<div style="position:absolute;left:19.50px;top:239.20px;width:16.00px;height:15.80px;background:#8c8c8c;border-radius:3px;"></div>
<div style="position:absolute;left:1512.50px;top:239.20px;width:17.50px;height:15.80px;background:#8c8c8c;border-radius:3px;"></div>
<svg width="1540" height="260" viewBox="376 735 1540 260"><path d="M408 977V987.4L400.4 982.2Z" fill="#454545" stroke="#404040" stroke-width="1"/><path d="M1893.5 977V987.4L1901.2 982.2Z" fill="#454545" stroke="#404040" stroke-width="1"/></svg>
<span class="t" style="left:175.70px;top:9.00px;font-size:16.8px;color:#ffffff;transform:scaleX(1.2575);transform-origin:0 0;">White</span>
<span class="t" style="left:277.70px;top:9.00px;font-size:16.8px;color:#ffffff;transform:scaleX(1.1463);transform-origin:0 0;">Gray 80</span>
<span class="t" style="left:380.00px;top:9.00px;font-size:16.8px;color:#ffffff;transform:scaleX(1.1463);transform-origin:0 0;">Gray 65</span>
<span class="t" style="left:482.00px;top:9.00px;font-size:16.8px;color:#ffffff;transform:scaleX(1.1463);transform-origin:0 0;">Gray 50</span>
<span class="t" style="left:584.00px;top:9.00px;font-size:16.8px;color:#ffffff;transform:scaleX(1.1463);transform-origin:0 0;">Gray 35</span>
<span class="t" style="left:686.70px;top:9.00px;font-size:16.8px;color:#ffffff;transform:scaleX(1.1197);transform-origin:0 0;">Black</span>
<span class="t" style="left:764.80px;top:9.00px;font-size:16.8px;color:#ffffff;transform:scaleX(1.1398);transform-origin:0 0;">Dark Skin</span>
<span class="t" style="left:860.80px;top:9.00px;font-size:16.8px;color:#ffffff;transform:scaleX(1.1467);transform-origin:0 0;">Light Skin</span>
<span class="t" style="left:962.80px;top:9.00px;font-size:16.8px;color:#ffffff;transform:scaleX(1.1313);transform-origin:0 0;">Blue Sky</span>
<span class="t" style="left:1052.90px;top:9.00px;font-size:16.8px;color:#ffffff;transform:scaleX(1.1435);transform-origin:0 0;">Foliage</span>
<span class="t" style="left:1143.00px;top:9.00px;font-size:16.8px;color:#ffffff;transform:scaleX(1.1917);transform-origin:0 0;">Blue Flower</span>
<span class="t" style="left:1261.40px;top:9.00px;font-size:16.8px;color:#ffffff;transform:scaleX(1.1708);transform-origin:0 0;">Bluish Green</span>
<span class="t" style="left:1387.20px;top:9.00px;font-size:16.8px;color:#ffffff;transform:scaleX(1.1583);transform-origin:0 0;">Orange</span>
<span class="t" style="left:1490.00px;top:9.00px;font-size:16.8px;color:#ffffff;transform:scaleX(1.1820);transform-origin:0 0;">Purplish Blue</span>
<span class="t" style="left:24.60px;top:40.00px;font-size:16.8px;color:#ffffff;transform:scaleX(1.1440);transform-origin:0 0;">x: CIE31</span>
<span class="t" style="left:175.70px;top:40.00px;font-size:16.8px;color:#ffffff;transform:scaleX(1.2380);transform-origin:0 0;">0,3144</span>
<span class="t" style="left:277.70px;top:40.00px;font-size:16.8px;color:#ffffff;transform:scaleX(1.2380);transform-origin:0 0;">0,3178</span>
<span class="t" style="left:380.00px;top:40.00px;font-size:16.8px;color:#ffffff;transform:scaleX(1.2380);transform-origin:0 0;">0,3189</span>
<span class="t" style="left:482.00px;top:40.00px;font-size:16.8px;color:#ffffff;transform:scaleX(1.2380);transform-origin:0 0;">0,3196</span>
<span class="t" style="left:584.00px;top:40.00px;font-size:16.8px;color:#ffffff;transform:scaleX(1.2380);transform-origin:0 0;">0,3201</span>
<span class="t" style="left:686.70px;top:40.00px;font-size:16.8px;color:#ffffff;transform:scaleX(1.2380);transform-origin:0 0;">0,2514</span>
<span class="t" style="left:764.80px;top:40.00px;font-size:16.8px;color:#ffffff;transform:scaleX(1.2380);transform-origin:0 0;">0,4204</span>
<span class="t" style="left:860.80px;top:40.00px;font-size:16.8px;color:#ffffff;transform:scaleX(1.2380);transform-origin:0 0;">0,3914</span>
<span class="t" style="left:962.80px;top:40.00px;font-size:16.8px;color:#ffffff;transform:scaleX(1.2380);transform-origin:0 0;">0,2506</span>
<span class="t" style="left:1052.90px;top:40.00px;font-size:16.8px;color:#ffffff;transform:scaleX(1.2380);transform-origin:0 0;">0,3472</span>
<span class="t" style="left:1143.00px;top:40.00px;font-size:16.8px;color:#ffffff;transform:scaleX(1.2380);transform-origin:0 0;">0,2737</span>
<span class="t" style="left:1261.40px;top:40.00px;font-size:16.8px;color:#ffffff;transform:scaleX(1.2380);transform-origin:0 0;">0,2623</span>
<span class="t" style="left:1387.20px;top:40.00px;font-size:16.8px;color:#ffffff;transform:scaleX(1.2380);transform-origin:0 0;">0,5295</span>
<span class="t" style="left:1490.00px;top:40.00px;font-size:16.8px;color:#ffffff;transform:scaleX(1.2380);transform-origin:0 0;">0,2143</span>
<span class="t" style="left:24.60px;top:70.00px;font-size:16.8px;color:#ececec;transform:scaleX(1.1440);transform-origin:0 0;">y: CIE31</span>
<span class="t" style="left:175.70px;top:70.00px;font-size:16.8px;color:#ececec;transform:scaleX(1.2380);transform-origin:0 0;">0,3253</span>
<span class="t" style="left:277.70px;top:70.00px;font-size:16.8px;color:#ececec;transform:scaleX(1.2380);transform-origin:0 0;">0,3293</span>
<span class="t" style="left:380.00px;top:70.00px;font-size:16.8px;color:#ececec;transform:scaleX(1.2380);transform-origin:0 0;">0,3307</span>
<span class="t" style="left:482.00px;top:70.00px;font-size:16.8px;color:#ececec;transform:scaleX(1.2380);transform-origin:0 0;">0,3317</span>
<span class="t" style="left:584.00px;top:70.00px;font-size:16.8px;color:#ececec;transform:scaleX(1.2380);transform-origin:0 0;">0,3327</span>
<span class="t" style="left:686.70px;top:70.00px;font-size:16.8px;color:#ececec;transform:scaleX(1.2380);transform-origin:0 0;">0,2369</span>
<span class="t" style="left:764.80px;top:70.00px;font-size:16.8px;color:#ececec;transform:scaleX(1.2380);transform-origin:0 0;">0,3679</span>
<span class="t" style="left:860.80px;top:70.00px;font-size:16.8px;color:#ececec;transform:scaleX(1.2380);transform-origin:0 0;">0,3585</span>
<span class="t" style="left:962.80px;top:70.00px;font-size:16.8px;color:#ececec;transform:scaleX(1.2380);transform-origin:0 0;">0,2683</span>
<span class="t" style="left:1052.90px;top:70.00px;font-size:16.8px;color:#ececec;transform:scaleX(1.2380);transform-origin:0 0;">0,4402</span>
<span class="t" style="left:1143.00px;top:70.00px;font-size:16.8px;color:#ececec;transform:scaleX(1.2380);transform-origin:0 0;">0,2545</span>
<span class="t" style="left:1261.40px;top:70.00px;font-size:16.8px;color:#ececec;transform:scaleX(1.2380);transform-origin:0 0;">0,3682</span>
<span class="t" style="left:1387.20px;top:70.00px;font-size:16.8px;color:#ececec;transform:scaleX(1.2380);transform-origin:0 0;">0,4035</span>
<span class="t" style="left:1490.00px;top:70.00px;font-size:16.8px;color:#ececec;transform:scaleX(1.2380);transform-origin:0 0;">0,1873</span>
<span class="t" style="left:24.60px;top:99.00px;font-size:16.8px;color:#ffffff;transform:scaleX(0.9816);transform-origin:0 0;">Y</span>
<span class="t" style="left:175.70px;top:99.00px;font-size:16.8px;color:#ffffff;transform:scaleX(1.2380);transform-origin:0 0;">290,5202</span>
<span class="t" style="left:277.70px;top:99.00px;font-size:16.8px;color:#ffffff;transform:scaleX(1.2380);transform-origin:0 0;">231,8284</span>
<span class="t" style="left:380.00px;top:99.00px;font-size:16.8px;color:#ffffff;transform:scaleX(1.2380);transform-origin:0 0;">187,0211</span>
<span class="t" style="left:482.00px;top:99.00px;font-size:16.8px;color:#ffffff;transform:scaleX(1.2380);transform-origin:0 0;">143,3687</span>
<span class="t" style="left:584.00px;top:99.00px;font-size:16.8px;color:#ffffff;transform:scaleX(1.2380);transform-origin:0 0;">98,9053</span>
<span class="t" style="left:686.70px;top:99.00px;font-size:16.8px;color:#ffffff;transform:scaleX(1.2380);transform-origin:0 0;">0,2392</span>
<span class="t" style="left:764.80px;top:99.00px;font-size:16.8px;color:#ffffff;transform:scaleX(1.2380);transform-origin:0 0;">26,8859</span>
<span class="t" style="left:860.80px;top:99.00px;font-size:16.8px;color:#ffffff;transform:scaleX(1.2380);transform-origin:0 0;">102,0395</span>
<span class="t" style="left:962.80px;top:99.00px;font-size:16.8px;color:#ffffff;transform:scaleX(1.2380);transform-origin:0 0;">52,8638</span>
<span class="t" style="left:1052.90px;top:99.00px;font-size:16.8px;color:#ffffff;transform:scaleX(1.2380);transform-origin:0 0;">35,3801</span>
<span class="t" style="left:1143.00px;top:99.00px;font-size:16.8px;color:#ffffff;transform:scaleX(1.2380);transform-origin:0 0;">67,2178</span>
<span class="t" style="left:1261.40px;top:99.00px;font-size:16.8px;color:#ffffff;transform:scaleX(1.2380);transform-origin:0 0;">120,8885</span>
<span class="t" style="left:1387.20px;top:99.00px;font-size:16.8px;color:#ffffff;transform:scaleX(1.2380);transform-origin:0 0;">82,9021</span>
<span class="t" style="left:1490.00px;top:99.00px;font-size:16.8px;color:#ffffff;transform:scaleX(1.2380);transform-origin:0 0;">31,5012</span>
<span class="t" style="left:24.60px;top:128.00px;font-size:16.8px;color:#ececec;transform:scaleX(1.2105);transform-origin:0 0;">Target x:CIE31</span>
<span class="t" style="left:175.70px;top:128.00px;font-size:16.8px;color:#ececec;transform:scaleX(1.2380);transform-origin:0 0;">0,3127</span>
<span class="t" style="left:277.70px;top:128.00px;font-size:16.8px;color:#ececec;transform:scaleX(1.2380);transform-origin:0 0;">0,3127</span>
<span class="t" style="left:380.00px;top:128.00px;font-size:16.8px;color:#ececec;transform:scaleX(1.2380);transform-origin:0 0;">0,3127</span>
<span class="t" style="left:482.00px;top:128.00px;font-size:16.8px;color:#ececec;transform:scaleX(1.2380);transform-origin:0 0;">0,3127</span>
<span class="t" style="left:584.00px;top:128.00px;font-size:16.8px;color:#ececec;transform:scaleX(1.2380);transform-origin:0 0;">0,3127</span>
<span class="t" style="left:686.70px;top:128.00px;font-size:16.8px;color:#ececec;transform:scaleX(1.2380);transform-origin:0 0;">0,3127</span>
<span class="t" style="left:764.80px;top:128.00px;font-size:16.8px;color:#ececec;transform:scaleX(1.2380);transform-origin:0 0;">0,4003</span>
<span class="t" style="left:860.80px;top:128.00px;font-size:16.8px;color:#ececec;transform:scaleX(1.2380);transform-origin:0 0;">0,3795</span>
<span class="t" style="left:962.80px;top:128.00px;font-size:16.8px;color:#ececec;transform:scaleX(1.2380);transform-origin:0 0;">0,2496</span>
<span class="t" style="left:1052.90px;top:128.00px;font-size:16.8px;color:#ececec;transform:scaleX(1.2380);transform-origin:0 0;">0,3395</span>
<span class="t" style="left:1143.00px;top:128.00px;font-size:16.8px;color:#ececec;transform:scaleX(1.2380);transform-origin:0 0;">0,2681</span>
<span class="t" style="left:1261.40px;top:128.00px;font-size:16.8px;color:#ececec;transform:scaleX(1.2380);transform-origin:0 0;">0,2626</span>
<span class="t" style="left:1387.20px;top:128.00px;font-size:16.8px;color:#ececec;transform:scaleX(1.2380);transform-origin:0 0;">0,5122</span>
<span class="t" style="left:1490.00px;top:128.00px;font-size:16.8px;color:#ececec;transform:scaleX(1.2380);transform-origin:0 0;">0,2161</span>
<span class="t" style="left:24.60px;top:158.00px;font-size:16.8px;color:#ffffff;transform:scaleX(1.2105);transform-origin:0 0;">Target y:CIE31</span>
<span class="t" style="left:175.70px;top:158.00px;font-size:16.8px;color:#ffffff;transform:scaleX(1.2380);transform-origin:0 0;">0,3290</span>
<span class="t" style="left:277.70px;top:158.00px;font-size:16.8px;color:#ffffff;transform:scaleX(1.2380);transform-origin:0 0;">0,3290</span>
<span class="t" style="left:380.00px;top:158.00px;font-size:16.8px;color:#ffffff;transform:scaleX(1.2380);transform-origin:0 0;">0,3290</span>
<span class="t" style="left:482.00px;top:158.00px;font-size:16.8px;color:#ffffff;transform:scaleX(1.2380);transform-origin:0 0;">0,3290</span>
<span class="t" style="left:584.00px;top:158.00px;font-size:16.8px;color:#ffffff;transform:scaleX(1.2380);transform-origin:0 0;">0,3290</span>
<span class="t" style="left:686.70px;top:158.00px;font-size:16.8px;color:#ffffff;transform:scaleX(1.2380);transform-origin:0 0;">0,3290</span>
<span class="t" style="left:764.80px;top:158.00px;font-size:16.8px;color:#ffffff;transform:scaleX(1.2380);transform-origin:0 0;">0,3642</span>
<span class="t" style="left:860.80px;top:158.00px;font-size:16.8px;color:#ffffff;transform:scaleX(1.2380);transform-origin:0 0;">0,3562</span>
<span class="t" style="left:962.80px;top:158.00px;font-size:16.8px;color:#ffffff;transform:scaleX(1.2380);transform-origin:0 0;">0,2656</span>
<span class="t" style="left:1052.90px;top:158.00px;font-size:16.8px;color:#ffffff;transform:scaleX(1.2380);transform-origin:0 0;">0,4271</span>
<span class="t" style="left:1143.00px;top:158.00px;font-size:16.8px;color:#ffffff;transform:scaleX(1.2380);transform-origin:0 0;">0,2525</span>
<span class="t" style="left:1261.40px;top:158.00px;font-size:16.8px;color:#ffffff;transform:scaleX(1.2380);transform-origin:0 0;">0,3616</span>
<span class="t" style="left:1387.20px;top:158.00px;font-size:16.8px;color:#ffffff;transform:scaleX(1.2380);transform-origin:0 0;">0,4063</span>
<span class="t" style="left:1490.00px;top:158.00px;font-size:16.8px;color:#ffffff;transform:scaleX(1.2380);transform-origin:0 0;">0,1921</span>
<span class="t" style="left:24.60px;top:187.00px;font-size:16.8px;color:#ececec;transform:scaleX(1.2464);transform-origin:0 0;">Target Y</span>
<span class="t" style="left:175.70px;top:187.00px;font-size:16.8px;color:#ececec;transform:scaleX(1.2380);transform-origin:0 0;">290,5202</span>
<span class="t" style="left:277.70px;top:187.00px;font-size:16.8px;color:#ececec;transform:scaleX(1.2380);transform-origin:0 0;">229,8880</span>
<span class="t" style="left:380.00px;top:187.00px;font-size:16.8px;color:#ececec;transform:scaleX(1.2380);transform-origin:0 0;">185,2348</span>
<span class="t" style="left:482.00px;top:187.00px;font-size:16.8px;color:#ececec;transform:scaleX(1.2380);transform-origin:0 0;">142,6515</span>
<span class="t" style="left:584.00px;top:187.00px;font-size:16.8px;color:#ececec;transform:scaleX(1.2380);transform-origin:0 0;">99,3330</span>
<span class="t" style="left:686.70px;top:187.00px;font-size:16.8px;color:#ececec;transform:scaleX(1.2380);transform-origin:0 0;">0,0000</span>
<span class="t" style="left:764.80px;top:187.00px;font-size:16.8px;color:#ececec;transform:scaleX(1.2380);transform-origin:0 0;">29,2650</span>
<span class="t" style="left:860.80px;top:187.00px;font-size:16.8px;color:#ececec;transform:scaleX(1.2380);transform-origin:0 0;">101,3775</span>
<span class="t" style="left:962.80px;top:187.00px;font-size:16.8px;color:#ececec;transform:scaleX(1.2380);transform-origin:0 0;">54,3226</span>
<span class="t" style="left:1052.90px;top:187.00px;font-size:16.8px;color:#ececec;transform:scaleX(1.2380);transform-origin:0 0;">37,8619</span>
<span class="t" style="left:1143.00px;top:187.00px;font-size:16.8px;color:#ececec;transform:scaleX(1.2380);transform-origin:0 0;">67,7449</span>
<span class="t" style="left:1261.40px;top:187.00px;font-size:16.8px;color:#ececec;transform:scaleX(1.2380);transform-origin:0 0;">121,6496</span>
<span class="t" style="left:1387.20px;top:187.00px;font-size:16.8px;color:#ececec;transform:scaleX(1.2380);transform-origin:0 0;">82,3561</span>
<span class="t" style="left:1490.00px;top:187.00px;font-size:16.8px;color:#ececec;transform:scaleX(1.2380);transform-origin:0 0;">34,1432</span>
<span class="t" style="left:24.60px;top:217.00px;font-size:16.8px;color:#ffffff;transform:scaleX(1.2239);transform-origin:0 0;">ΔE 2000</span>
<span class="t" style="left:175.70px;top:217.00px;font-size:16.8px;color:#ffffff;transform:scaleX(1.2380);transform-origin:0 0;">3,9773</span>
<span class="t" style="left:277.70px;top:217.00px;font-size:16.8px;color:#ffffff;transform:scaleX(1.2380);transform-origin:0 0;">3,3866</span>
<span class="t" style="left:380.00px;top:217.00px;font-size:16.8px;color:#ffffff;transform:scaleX(1.2380);transform-origin:0 0;">3,2342</span>
<span class="t" style="left:482.00px;top:217.00px;font-size:16.8px;color:#ffffff;transform:scaleX(1.2380);transform-origin:0 0;">3,0189</span>
<span class="t" style="left:584.00px;top:217.00px;font-size:16.8px;color:#ffffff;transform:scaleX(1.2380);transform-origin:0 0;">2,7234</span>
<span class="t" style="left:686.70px;top:217.00px;font-size:16.8px;color:#ffffff;transform:scaleX(1.2380);transform-origin:0 0;">1,4039</span>
<span class="t" style="left:764.80px;top:217.00px;font-size:16.8px;color:#ffffff;transform:scaleX(1.2380);transform-origin:0 0;">2,5172</span>
<span class="t" style="left:860.80px;top:217.00px;font-size:16.8px;color:#ffffff;transform:scaleX(1.2380);transform-origin:0 0;">2,0999</span>
<span class="t" style="left:962.80px;top:217.00px;font-size:16.8px;color:#ffffff;transform:scaleX(1.2380);transform-origin:0 0;">0,8750</span>
<span class="t" style="left:1052.90px;top:217.00px;font-size:16.8px;color:#ffffff;transform:scaleX(1.2380);transform-origin:0 0;">1,8360</span>
<span class="t" style="left:1143.00px;top:217.00px;font-size:16.8px;color:#ffffff;transform:scaleX(1.2380);transform-origin:0 0;">1,6568</span>
<span class="t" style="left:1261.40px;top:217.00px;font-size:16.8px;color:#ffffff;transform:scaleX(1.2380);transform-origin:0 0;">1,3496</span>
<span class="t" style="left:1387.20px;top:217.00px;font-size:16.8px;color:#ffffff;transform:scaleX(1.2380);transform-origin:0 0;">1,9789</span>
<span class="t" style="left:1490.00px;top:217.00px;font-size:16.8px;color:#ffffff;transform:scaleX(1.2380);transform-origin:0 0;">1,4091</span>
</div>
<div style="position:absolute;left:1.30px;top:997.00px;width:53.80px;height:46.00px;background:linear-gradient(180deg,#9c9c9c 0%,#8a8a8a 12%,#6e6e6e 70%,#585858 100%);border-radius:3px;"></div>
<div style="position:absolute;left:4.60px;top:1001.50px;width:47.20px;height:27.00px;background:#ffffff;border-radius:2.5px;box-shadow:inset 0 0 2px rgba(0,0,0,.45), 0 0 1.5px rgba(255,255,255,.35);"></div>
<span class="t" style="left:17.31px;top:1034.00px;font-size:8.0px;color:#222222;font-weight:bold;">White</span>
<div style="position:absolute;left:57.17px;top:997.00px;width:53.80px;height:46.00px;background:linear-gradient(180deg,#9c9c9c 0%,#8a8a8a 12%,#6e6e6e 70%,#585858 100%);border-radius:3px;"></div>
<div style="position:absolute;left:60.47px;top:1001.50px;width:47.20px;height:27.00px;background:#e6e6e6;border-radius:2.5px;box-shadow:inset 0 0 2px rgba(0,0,0,.45), 0 0 1.5px rgba(255,255,255,.35);"></div>
<span class="t" style="left:69.39px;top:1034.00px;font-size:8.0px;color:#222222;font-weight:bold;">Gray 80</span>
<div style="position:absolute;left:113.04px;top:997.00px;width:53.80px;height:46.00px;background:linear-gradient(180deg,#9c9c9c 0%,#8a8a8a 12%,#6e6e6e 70%,#585858 100%);border-radius:3px;"></div>
<div style="position:absolute;left:116.34px;top:1001.50px;width:47.20px;height:27.00px;background:#d0d0d0;border-radius:2.5px;box-shadow:inset 0 0 2px rgba(0,0,0,.45), 0 0 1.5px rgba(255,255,255,.35);"></div>
<span class="t" style="left:125.26px;top:1034.00px;font-size:8.0px;color:#222222;font-weight:bold;">Gray 65</span>
<div style="position:absolute;left:168.91px;top:997.00px;width:53.80px;height:46.00px;background:linear-gradient(180deg,#9c9c9c 0%,#8a8a8a 12%,#6e6e6e 70%,#585858 100%);border-radius:3px;"></div>
<div style="position:absolute;left:172.21px;top:1001.50px;width:47.20px;height:27.00px;background:#b9b9b9;border-radius:2.5px;box-shadow:inset 0 0 2px rgba(0,0,0,.45), 0 0 1.5px rgba(255,255,255,.35);"></div>
<span class="t" style="left:181.13px;top:1034.00px;font-size:8.0px;color:#222222;font-weight:bold;">Gray 50</span>
<div style="position:absolute;left:224.78px;top:997.00px;width:53.80px;height:46.00px;background:linear-gradient(180deg,#9c9c9c 0%,#8a8a8a 12%,#6e6e6e 70%,#585858 100%);border-radius:3px;"></div>
<div style="position:absolute;left:228.08px;top:1001.50px;width:47.20px;height:27.00px;background:#9e9e9e;border-radius:2.5px;box-shadow:inset 0 0 2px rgba(0,0,0,.45), 0 0 1.5px rgba(255,255,255,.35);"></div>
<span class="t" style="left:237.00px;top:1034.00px;font-size:8.0px;color:#222222;font-weight:bold;">Gray 35</span>
<div style="position:absolute;left:280.65px;top:997.00px;width:53.80px;height:46.00px;background:linear-gradient(180deg,#9c9c9c 0%,#8a8a8a 12%,#6e6e6e 70%,#585858 100%);border-radius:3px;"></div>
<div style="position:absolute;left:283.95px;top:1001.50px;width:47.20px;height:27.00px;background:#000000;border-radius:2.5px;box-shadow:inset 0 0 2px rgba(0,0,0,.45), 0 0 1.5px rgba(255,255,255,.35);"></div>
<span class="t" style="left:296.88px;top:1034.00px;font-size:8.0px;color:#222222;font-weight:bold;">Black</span>
<div style="position:absolute;left:336.52px;top:997.00px;width:53.80px;height:46.00px;background:linear-gradient(180deg,#9c9c9c 0%,#8a8a8a 12%,#6e6e6e 70%,#585858 100%);border-radius:3px;"></div>
<div style="position:absolute;left:339.82px;top:1001.50px;width:47.20px;height:27.00px;background:#775244;border-radius:2.5px;box-shadow:inset 0 0 2px rgba(0,0,0,.45), 0 0 1.5px rgba(255,255,255,.35);"></div>
<span class="t" style="left:344.97px;top:1034.00px;font-size:8.0px;color:#222222;font-weight:bold;">Dark Skin</span>
<div style="position:absolute;left:392.39px;top:997.00px;width:53.80px;height:46.00px;background:linear-gradient(180deg,#9c9c9c 0%,#8a8a8a 12%,#6e6e6e 70%,#585858 100%);border-radius:3px;"></div>
<div style="position:absolute;left:395.69px;top:1001.50px;width:47.20px;height:27.00px;background:#c79783;border-radius:2.5px;box-shadow:inset 0 0 2px rgba(0,0,0,.45), 0 0 1.5px rgba(255,255,255,.35);"></div>
<span class="t" style="left:399.96px;top:1034.00px;font-size:8.0px;color:#222222;font-weight:bold;">Light Skin</span>
<div style="position:absolute;left:448.26px;top:997.00px;width:53.80px;height:46.00px;background:linear-gradient(180deg,#9c9c9c 0%,#8a8a8a 12%,#6e6e6e 70%,#585858 100%);border-radius:3px;"></div>
<div style="position:absolute;left:451.56px;top:1001.50px;width:47.20px;height:27.00px;background:#5d7a9e;border-radius:2.5px;box-shadow:inset 0 0 2px rgba(0,0,0,.45), 0 0 1.5px rgba(255,255,255,.35);"></div>
<span class="t" style="left:458.26px;top:1034.00px;font-size:8.0px;color:#222222;font-weight:bold;">Blue Sky</span>
<div style="position:absolute;left:504.13px;top:997.00px;width:53.80px;height:46.00px;background:linear-gradient(180deg,#9c9c9c 0%,#8a8a8a 12%,#6e6e6e 70%,#585858 100%);border-radius:3px;"></div>
<div style="position:absolute;left:507.43px;top:1001.50px;width:47.20px;height:27.00px;background:#586c42;border-radius:2.5px;box-shadow:inset 0 0 2px rgba(0,0,0,.45), 0 0 1.5px rgba(255,255,255,.35);"></div>
<span class="t" style="left:517.03px;top:1034.00px;font-size:8.0px;color:#222222;font-weight:bold;">Foliage</span>
<div style="position:absolute;left:560.00px;top:997.00px;width:53.80px;height:46.00px;background:linear-gradient(180deg,#9c9c9c 0%,#8a8a8a 12%,#6e6e6e 70%,#585858 100%);border-radius:3px;"></div>
<div style="position:absolute;left:563.30px;top:1001.50px;width:47.20px;height:27.00px;background:#8580b3;border-radius:2.5px;box-shadow:inset 0 0 2px rgba(0,0,0,.45), 0 0 1.5px rgba(255,255,255,.35);"></div>
<span class="t" style="left:564.23px;top:1034.00px;font-size:8.0px;color:#222222;font-weight:bold;">Blue Flower</span>
<div style="position:absolute;left:615.87px;top:997.00px;width:53.80px;height:46.00px;background:linear-gradient(180deg,#9c9c9c 0%,#8a8a8a 12%,#6e6e6e 70%,#585858 100%);border-radius:3px;"></div>
<div style="position:absolute;left:619.17px;top:1001.50px;width:47.20px;height:27.00px;background:#62bfaa;border-radius:2.5px;box-shadow:inset 0 0 2px rgba(0,0,0,.45), 0 0 1.5px rgba(255,255,255,.35);"></div>
<span class="t" style="left:617.88px;top:1034.00px;font-size:8.0px;color:#222222;font-weight:bold;">Bluish Green</span>
<div style="position:absolute;left:671.74px;top:997.00px;width:53.80px;height:46.00px;background:linear-gradient(180deg,#9c9c9c 0%,#8a8a8a 12%,#6e6e6e 70%,#585858 100%);border-radius:3px;"></div>
<div style="position:absolute;left:675.04px;top:1001.50px;width:47.20px;height:27.00px;background:#df7b2a;border-radius:2.5px;box-shadow:inset 0 0 2px rgba(0,0,0,.45), 0 0 1.5px rgba(255,255,255,.35);"></div>
<span class="t" style="left:684.64px;top:1034.00px;font-size:8.0px;color:#222222;font-weight:bold;">Orange</span>
<div style="position:absolute;left:727.61px;top:997.00px;width:53.80px;height:46.00px;background:linear-gradient(180deg,#9c9c9c 0%,#8a8a8a 12%,#6e6e6e 70%,#585858 100%);border-radius:3px;"></div>
<div style="position:absolute;left:730.91px;top:1001.50px;width:47.20px;height:27.00px;background:#4a5ca8;border-radius:2.5px;box-shadow:inset 0 0 2px rgba(0,0,0,.45), 0 0 1.5px rgba(255,255,255,.35);"></div>
<span class="t" style="left:728.73px;top:1034.00px;font-size:8.0px;color:#222222;font-weight:bold;">Purplish Blue</span>
<div style="position:absolute;left:783.48px;top:997.00px;width:53.80px;height:46.00px;background:linear-gradient(180deg,#9c9c9c 0%,#8a8a8a 12%,#6e6e6e 70%,#585858 100%);border-radius:3px;"></div>
<div style="position:absolute;left:786.78px;top:1001.50px;width:47.20px;height:27.00px;background:#c5525f;border-radius:2.5px;box-shadow:inset 0 0 2px rgba(0,0,0,.45), 0 0 1.5px rgba(255,255,255,.35);"></div>
<span class="t" style="left:783.93px;top:1034.00px;font-size:8.0px;color:#222222;font-weight:bold;transform:scaleX(0.9925);transform-origin:50% 0;">Moderate Red</span>
<div style="position:absolute;left:839.35px;top:997.00px;width:53.80px;height:46.00px;background:linear-gradient(180deg,#9c9c9c 0%,#8a8a8a 12%,#6e6e6e 70%,#585858 100%);border-radius:3px;"></div>
<div style="position:absolute;left:842.65px;top:1001.50px;width:47.20px;height:27.00px;background:#5e3b6e;border-radius:2.5px;box-shadow:inset 0 0 2px rgba(0,0,0,.45), 0 0 1.5px rgba(255,255,255,.35);"></div>
<span class="t" style="left:853.80px;top:1034.00px;font-size:8.0px;color:#222222;font-weight:bold;">Purple</span>
<div style="position:absolute;left:895.22px;top:997.00px;width:53.80px;height:46.00px;background:linear-gradient(180deg,#9c9c9c 0%,#8a8a8a 12%,#6e6e6e 70%,#585858 100%);border-radius:3px;"></div>
<div style="position:absolute;left:898.52px;top:1001.50px;width:47.20px;height:27.00px;background:#a0bd3f;border-radius:2.5px;box-shadow:inset 0 0 2px rgba(0,0,0,.45), 0 0 1.5px rgba(255,255,255,.35);"></div>
<span class="t" style="left:897.00px;top:1034.00px;font-size:8.0px;color:#222222;font-weight:bold;">Yellow Green</span>
<div style="position:absolute;left:951.09px;top:997.00px;width:53.80px;height:46.00px;background:linear-gradient(180deg,#9c9c9c 0%,#8a8a8a 12%,#6e6e6e 70%,#585858 100%);border-radius:3px;"></div>
<div style="position:absolute;left:954.39px;top:1001.50px;width:47.20px;height:27.00px;background:#e8a12c;border-radius:2.5px;box-shadow:inset 0 0 2px rgba(0,0,0,.45), 0 0 1.5px rgba(255,255,255,.35);"></div>
<span class="t" style="left:950.50px;top:1034.00px;font-size:8.0px;color:#222222;font-weight:bold;transform:scaleX(0.9549);transform-origin:50% 0;">Orange Yellow</span>
<div style="position:absolute;left:1006.96px;top:997.00px;width:53.80px;height:46.00px;background:linear-gradient(180deg,#9c9c9c 0%,#8a8a8a 12%,#6e6e6e 70%,#585858 100%);border-radius:3px;"></div>
<div style="position:absolute;left:1010.26px;top:1001.50px;width:47.20px;height:27.00px;background:#323c99;border-radius:2.5px;box-shadow:inset 0 0 2px rgba(0,0,0,.45), 0 0 1.5px rgba(255,255,255,.35);"></div>
<span class="t" style="left:1025.19px;top:1034.00px;font-size:8.0px;color:#222222;font-weight:bold;">Blue</span>
<div style="position:absolute;left:1062.83px;top:997.00px;width:53.80px;height:46.00px;background:linear-gradient(180deg,#9c9c9c 0%,#8a8a8a 12%,#6e6e6e 70%,#585858 100%);border-radius:3px;"></div>
<div style="position:absolute;left:1066.13px;top:1001.50px;width:47.20px;height:27.00px;background:#459648;border-radius:2.5px;box-shadow:inset 0 0 2px rgba(0,0,0,.45), 0 0 1.5px rgba(255,255,255,.35);"></div>
<span class="t" style="left:1078.17px;top:1034.00px;font-size:8.0px;color:#222222;font-weight:bold;">Green</span>
<div style="position:absolute;left:1118.70px;top:997.00px;width:53.80px;height:46.00px;background:linear-gradient(180deg,#9c9c9c 0%,#8a8a8a 12%,#6e6e6e 70%,#585858 100%);border-radius:3px;"></div>
<div style="position:absolute;left:1122.00px;top:1001.50px;width:47.20px;height:27.00px;background:#b3303a;border-radius:2.5px;box-shadow:inset 0 0 2px rgba(0,0,0,.45), 0 0 1.5px rgba(255,255,255,.35);"></div>
<span class="t" style="left:1138.04px;top:1034.00px;font-size:8.0px;color:#222222;font-weight:bold;">Red</span>
<div style="position:absolute;left:1174.57px;top:997.00px;width:53.80px;height:46.00px;background:linear-gradient(180deg,#9c9c9c 0%,#8a8a8a 12%,#6e6e6e 70%,#585858 100%);border-radius:3px;"></div>
<div style="position:absolute;left:1177.87px;top:1001.50px;width:47.20px;height:27.00px;background:#efcb20;border-radius:2.5px;box-shadow:inset 0 0 2px rgba(0,0,0,.45), 0 0 1.5px rgba(255,255,255,.35);"></div>
<span class="t" style="left:1189.02px;top:1034.00px;font-size:8.0px;color:#222222;font-weight:bold;">Yellow</span>
<div style="position:absolute;left:1230.44px;top:997.00px;width:53.80px;height:46.00px;background:linear-gradient(180deg,#9c9c9c 0%,#8a8a8a 12%,#6e6e6e 70%,#585858 100%);border-radius:3px;"></div>
<div style="position:absolute;left:1233.74px;top:1001.50px;width:47.20px;height:27.00px;background:#be5697;border-radius:2.5px;box-shadow:inset 0 0 2px rgba(0,0,0,.45), 0 0 1.5px rgba(255,255,255,.35);"></div>
<span class="t" style="left:1241.12px;top:1034.00px;font-size:8.0px;color:#222222;font-weight:bold;">Magenta</span>
<div style="position:absolute;left:1286.31px;top:997.00px;width:53.80px;height:46.00px;background:linear-gradient(180deg,#9c9c9c 0%,#8a8a8a 12%,#6e6e6e 70%,#585858 100%);border-radius:3px;"></div>
<div style="position:absolute;left:1289.61px;top:1001.50px;width:47.20px;height:27.00px;background:#0086a3;border-radius:2.5px;box-shadow:inset 0 0 2px rgba(0,0,0,.45), 0 0 1.5px rgba(255,255,255,.35);"></div>
<span class="t" style="left:1303.43px;top:1034.00px;font-size:8.0px;color:#222222;font-weight:bold;">Cyan</span>
<div style="position:absolute;left:1342.18px;top:997.00px;width:53.80px;height:46.00px;background:linear-gradient(180deg,#9c9c9c 0%,#8a8a8a 12%,#6e6e6e 70%,#585858 100%);border-radius:3px;"></div>
<div style="position:absolute;left:1345.48px;top:1001.50px;width:47.20px;height:27.00px;background:#ff0000;border-radius:2.5px;box-shadow:inset 0 0 2px rgba(0,0,0,.45), 0 0 1.5px rgba(255,255,255,.35);"></div>
<span class="t" style="left:1350.18px;top:1034.00px;font-size:8.0px;color:#222222;font-weight:bold;">100% Red</span>
<div style="position:absolute;left:1398.05px;top:997.00px;width:53.80px;height:46.00px;background:linear-gradient(180deg,#9c9c9c 0%,#8a8a8a 12%,#6e6e6e 70%,#585858 100%);border-radius:3px;"></div>
<div style="position:absolute;left:1401.35px;top:1001.50px;width:47.20px;height:27.00px;background:#00ff00;border-radius:2.5px;box-shadow:inset 0 0 2px rgba(0,0,0,.45), 0 0 1.5px rgba(255,255,255,.35);"></div>
<span class="t" style="left:1402.05px;top:1034.00px;font-size:8.0px;color:#222222;font-weight:bold;">100% Green</span>
<div style="position:absolute;left:1453.92px;top:997.00px;width:53.80px;height:46.00px;background:linear-gradient(180deg,#9c9c9c 0%,#8a8a8a 12%,#6e6e6e 70%,#585858 100%);border-radius:3px;"></div>
<div style="position:absolute;left:1457.22px;top:1001.50px;width:47.20px;height:27.00px;background:#0000ff;border-radius:2.5px;box-shadow:inset 0 0 2px rgba(0,0,0,.45), 0 0 1.5px rgba(255,255,255,.35);"></div>
<span class="t" style="left:1460.81px;top:1034.00px;font-size:8.0px;color:#222222;font-weight:bold;">100% Blue</span>
<div style="position:absolute;left:1509.79px;top:997.00px;width:53.80px;height:46.00px;background:linear-gradient(180deg,#9c9c9c 0%,#8a8a8a 12%,#6e6e6e 70%,#585858 100%);border-radius:3px;"></div>
<div style="position:absolute;left:1513.09px;top:1001.50px;width:47.20px;height:27.00px;background:#00ffff;border-radius:2.5px;box-shadow:inset 0 0 2px rgba(0,0,0,.45), 0 0 1.5px rgba(255,255,255,.35);"></div>
<span class="t" style="left:1515.57px;top:1034.00px;font-size:8.0px;color:#222222;font-weight:bold;">100% Cyan</span>
<div style="position:absolute;left:1565.66px;top:997.00px;width:53.80px;height:46.00px;background:linear-gradient(180deg,#9c9c9c 0%,#8a8a8a 12%,#6e6e6e 70%,#585858 100%);border-radius:3px;"></div>
<div style="position:absolute;left:1568.96px;top:1001.50px;width:47.20px;height:17.50px;background:#ff00ff;border-radius:2.5px;box-shadow:inset 0 0 2px rgba(0,0,0,.45), 0 0 1.5px rgba(255,255,255,.35);"></div>
<span class="t" style="left:1576.20px;top:1025.00px;font-size:8.0px;color:#222222;font-weight:bold;transform:scaleX(0.9580);transform-origin:0 0;">100%</span>
<span class="t" style="left:1576.20px;top:1034.00px;font-size:8.0px;color:#222222;font-weight:bold;transform:scaleX(0.9955);transform-origin:0 0;">Magenta</span>
<div style="position:absolute;left:1621.53px;top:997.00px;width:53.80px;height:46.00px;background:#262626;border-radius:3px;"></div>
<div style="position:absolute;left:1624.83px;top:1001.50px;width:47.20px;height:27.00px;background:#ffff00;border-radius:2.5px;box-shadow:inset 0 0 2px rgba(0,0,0,.45), 0 0 1.5px rgba(255,255,255,.35);"></div>
<span class="t" style="left:1624.71px;top:1034.00px;font-size:8.0px;color:#ffffff;font-weight:bold;">100% Yellow</span>
<div style="position:absolute;left:1678.00px;top:997.50px;width:35.50px;height:13.50px;background:linear-gradient(180deg,#9a9a9a,#7c7c7c);border-radius:3px 3px 0 0;"></div>
<div style="position:absolute;left:1678.00px;top:1012.00px;width:35.50px;height:31.50px;background:linear-gradient(180deg,#8c8c8c,#646464);border-radius:0 0 3px 3px;"></div>
<div style="position:absolute;left:1684.40px;top:1016.20px;width:22.30px;height:22.00px;background:linear-gradient(180deg,#a8a8a8 0%,#a0a0a0 48%,#7c7c7c 52%,#808080 100%);border:1.6px solid #111;border-radius:3px;box-sizing:border-box;"></div>
<div style="position:absolute;left:1690.90px;top:1022.50px;width:10.20px;height:10.20px;background:#000;"></div>
<div style="position:absolute;left:1714.80px;top:997.50px;width:33.85px;height:22.00px;background:linear-gradient(180deg,#adadad 0%,#9a9a9a 40%,#787878 100%);border-radius:3px 0 0 0;"></div>
<div style="position:absolute;left:1748.65px;top:997.50px;width:33.85px;height:22.00px;background:linear-gradient(180deg,#adadad 0%,#9a9a9a 40%,#787878 100%);"></div>
<div style="position:absolute;left:1748.15px;top:997.50px;width:1.00px;height:22.00px;background:#5a5a5a;"></div>
<div style="position:absolute;left:1782.50px;top:997.50px;width:33.85px;height:22.00px;background:linear-gradient(180deg,#adadad 0%,#9a9a9a 40%,#787878 100%);"></div>
<div style="position:absolute;left:1782.00px;top:997.50px;width:1.00px;height:22.00px;background:#5a5a5a;"></div>
<div style="position:absolute;left:1816.35px;top:997.50px;width:33.85px;height:22.00px;background:linear-gradient(180deg,#adadad 0%,#9a9a9a 40%,#787878 100%);"></div>
<div style="position:absolute;left:1815.85px;top:997.50px;width:1.00px;height:22.00px;background:#5a5a5a;"></div>
<div style="position:absolute;left:1850.20px;top:997.50px;width:33.85px;height:22.00px;background:linear-gradient(180deg,#3c3c3c,#2e2e2e);"></div>
<div style="position:absolute;left:1849.70px;top:997.50px;width:1.00px;height:22.00px;background:#444;"></div>
<div style="position:absolute;left:1884.05px;top:997.50px;width:33.85px;height:22.00px;background:linear-gradient(180deg,#3c3c3c,#2e2e2e);"></div>
<div style="position:absolute;left:1714.80px;top:1020.50px;width:101.60px;height:23.00px;background:linear-gradient(180deg,#a6a6a6 0%,#949494 40%,#6c6c6c 100%);border-radius:3px 0 0 3px;border-top:1px solid #bcbcbc;box-sizing:border-box;"></div>
<div style="position:absolute;left:1816.40px;top:1020.50px;width:104.00px;height:23.00px;background:linear-gradient(180deg,#a6a6a6 0%,#949494 40%,#6c6c6c 100%);border-top:1px solid #bcbcbc;border-left:1px solid #5e5e5e;box-sizing:border-box;"></div>
<svg width="1920" height="1044" viewBox="0 0 1920 1044"><defs><linearGradient id="kc" x1="0" y1="0" x2="0" y2="1"><stop offset="0" stop-color="#7e7e7e"/><stop offset="1" stop-color="#a4a4a4"/></linearGradient><linearGradient id="kd" x1="0" y1="0" x2="0" y2="1"><stop offset="0" stop-color="#2a2a2a"/><stop offset="1" stop-color="#3a3a3a"/></linearGradient></defs><ellipse cx="1695.5" cy="1004" rx="5.4" ry="4.6" fill="url(#kc)"/><path d="M1692.6 1005.6H1698.4L1695.5 1002Z" fill="#2a2a2a"/><circle cx="1731.7" cy="1008.6" r="7.4" fill="url(#kc)"/><circle cx="1765.5" cy="1008.6" r="7.4" fill="url(#kc)"/><circle cx="1799.4" cy="1008.6" r="7.4" fill="url(#kc)"/><circle cx="1833.2" cy="1008.6" r="7.4" fill="url(#kc)"/><circle cx="1867.1" cy="1008.6" r="7.4" fill="url(#kd)"/><circle cx="1901.0" cy="1008.6" r="7.4" fill="url(#kd)"/><rect x="1728.9" y="1005.8" width="5.6" height="5.6" fill="#2e2e2e"/><path d="M1763.1 1005V1012.4L1769.5 1008.7Z" fill="#2e2e2e"/><path d="M1797.2 1005.2H1795.4V1012H1797.2M1801.6 1005.2H1803.4V1012H1801.6M1797.4 1008.6H1801.4" fill="none" stroke="#2e2e2e" stroke-width="1.2"/><path d="M1833.2 1008.6C1831.8 1006.4 1828.2 1006 1828.2 1008.6C1828.2 1011.2 1831.8 1010.8 1833.2 1008.6C1834.8 1006.4 1838.2 1006 1838.2 1008.6C1838.2 1011.2 1834.8 1010.8 1833.2 1008.6Z" fill="none" stroke="#2e2e2e" stroke-width="1.3"/><path d="M1863.1 1008A4 4 0 0 1 1870.1 1006M1871.1 1009.4A4 4 0 0 1 1864.1 1011.4" fill="none" stroke="#1c1c1c" stroke-width="1.7"/><path d="M1868.3 1006.8H1871.5V1003.8ZM1865.9 1010.6H1862.7V1013.6Z" fill="#1c1c1c"/><circle cx="1737.9" cy="1032" r="7.4" fill="url(#kc)"/><path d="M1737.1 1028.6L1734.1 1032L1737.1 1035.4" fill="none" stroke="#333" stroke-width="1.2"/><path d="M1740.9 1028.6L1737.9 1032L1740.9 1035.4" fill="none" stroke="#333" stroke-width="1.2"/><circle cx="1897.6" cy="1032" r="7.4" fill="url(#kc)"/><path d="M1894.3 1028.6L1897.3 1032L1894.3 1035.4" fill="none" stroke="#333" stroke-width="1.2"/><path d="M1898.1 1028.6L1901.1 1032L1898.1 1035.4" fill="none" stroke="#333" stroke-width="1.2"/></svg>
<span class="t" style="left:1757.80px;top:1023.86px;font-size:16px;color:#333333;transform:scaleX(1.0486);transform-origin:0 0;text-shadow:0 0 .6px #333;">Back</span>
<span class="t" style="left:1837.70px;top:1023.86px;font-size:16px;color:#333333;transform:scaleX(1.1764);transform-origin:0 0;text-shadow:0 0 .6px #333;">Next</span>
</div></body></html>
